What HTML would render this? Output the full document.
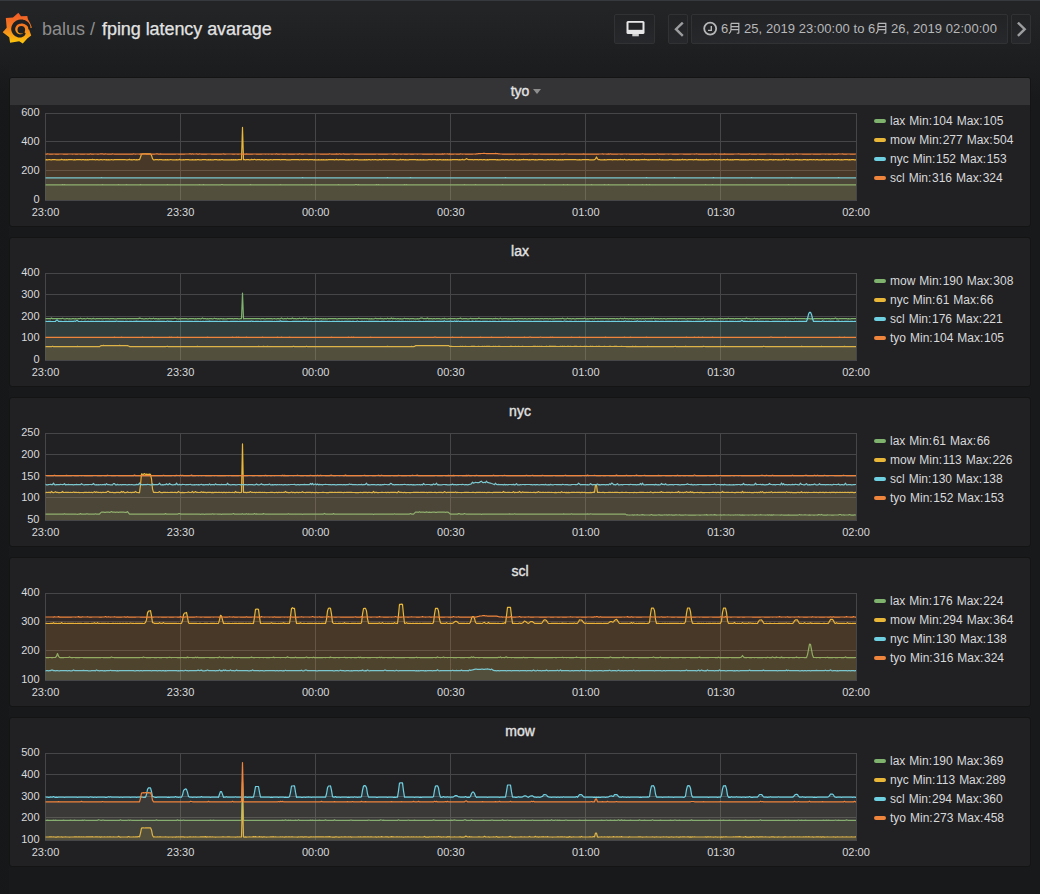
<!DOCTYPE html>
<html><head><meta charset="utf-8">
<style>
html,body{margin:0;padding:0;}
body{width:1040px;height:894px;overflow:hidden;position:relative;
 background:linear-gradient(180deg,#222426 10px,#18191b 100px);
 font-family:"Liberation Sans",sans-serif;color:#d8d9da;}
.topline{position:absolute;left:0;top:0;width:1040px;height:1px;background:#363a3e;}
.lstrip{position:absolute;left:0;top:60px;width:9px;height:834px;background:linear-gradient(180deg,rgba(22,23,25,0) 0,rgba(22,23,25,0.8) 60px);}
.title{position:absolute;left:42px;top:18px;font-size:18px;line-height:22px;white-space:nowrap;}
.title .crumb{color:#8e8e8e;}
.title .main{color:#e3e3e3;-webkit-text-stroke:0.25px #e3e3e3;}
.btn{position:absolute;top:14px;height:28px;border:1px solid #313234;border-radius:2px;
 background:linear-gradient(180deg,#222325,#27282b);box-sizing:content-box;}
.tr{color:#b7b8ba;font-size:13px;letter-spacing:0.06px;line-height:28px;white-space:nowrap;}
.panel{position:absolute;left:9px;width:1020px;height:148px;background:#212124;border:1px solid #141414;border-radius:3px;}
.ph{position:absolute;left:0;top:0;width:1020px;height:27px;text-align:center;border-radius:2px 2px 0 0;}
.ph.hov{background:#343436;}
.pt{display:inline-block;font-size:14px;color:#e3e3e3;-webkit-text-stroke:0.35px #e3e3e3;line-height:26px;}
.caret{position:absolute;left:523px;top:11px;width:0;height:0;border-left:4px solid transparent;border-right:4px solid transparent;border-top:5px solid #8e8e8e;}
.yl{position:absolute;left:0;width:39.5px;text-align:right;font-size:11px;line-height:13px;color:#d8d9da;}
.xl{position:absolute;width:40px;text-align:center;font-size:11px;line-height:13px;color:#d8d9da;}
.lg{position:absolute;left:874px;font-size:12px;line-height:13px;white-space:nowrap;color:#d8d9da;word-spacing:0px;}
.lg b{font-weight:normal;margin-left:4px;word-spacing:-2.7px;}
.lg i{display:inline-block;width:12px;height:4px;border-radius:2px;margin-right:4px;vertical-align:2px;}
.plots{position:absolute;left:0;top:0;}
</style></head><body>
<div class="topline"></div>
<div class="lstrip"></div>
<svg style="position:absolute;left:0;top:8px" width="36" height="40" viewBox="0 0 36 40">
 <defs><linearGradient id="lg1" x1="0" y1="0" x2="0" y2="1"><stop offset="0" stop-color="#F05A28"/><stop offset="0.45" stop-color="#F47A20"/><stop offset="1" stop-color="#FBCA0A"/></linearGradient></defs>
 <path fill="url(#lg1)" d="M18.34 4.80 L21.00 8.30 L27.30 8.00 L27.95 11.20 L29.70 14.30 L31.10 17.40 L32.00 19.90 L29.20 20.80 L29.40 22.30 L31.20 27.40 L27.30 30.40 L22.80 35.60 L19.20 33.30 L10.10 34.70 L9.20 29.30 L2.70 24.20 L6.70 19.70 L5.80 10.00 L13.00 9.60 Z"/>
 <path fill="#1f2022" d="M30.20 21.30 L30.32 20.64 L30.39 19.97 L30.41 19.28 L30.38 18.58 L30.30 17.88 L30.05 17.23 L29.76 16.59 L29.42 15.98 L29.04 15.38 L28.62 14.82 L28.16 14.29 L27.64 13.81 L27.08 13.38 L26.50 13.00 L25.89 12.65 L25.26 12.36 L24.62 12.10 L23.96 11.89 L23.29 11.73 L22.61 11.62 L21.92 11.56 L21.24 11.54 L20.56 11.56 L19.88 11.61 L19.21 11.70 L18.54 11.85 L17.89 12.04 L17.25 12.27 L16.63 12.55 L16.03 12.87 L15.46 13.23 L14.91 13.63 L14.39 14.07 L13.90 14.54 L13.45 15.05 L13.04 15.59 L12.66 16.15 L12.32 16.74 L12.03 17.35 L11.77 17.98 L11.57 18.62 L11.41 19.28 L11.29 19.95 L11.22 20.62 L11.20 21.30 L11.29 21.97 L11.43 22.63 L11.61 23.28 L11.83 23.90 L12.10 24.50 L12.40 25.08 L12.75 25.63 L13.13 26.16 L13.54 26.65 L13.98 27.11 L14.45 27.53 L14.94 27.91 L15.46 28.26 L16.00 28.57 L16.55 28.83 L17.12 29.06 L17.69 29.24 L18.27 29.38 L18.86 29.48 L19.45 29.54 L20.03 29.55 L20.61 29.53 L21.18 29.44 L21.74 29.28 L22.27 29.08 L22.78 28.85 L23.27 28.59 L23.72 28.29 L24.15 27.97 L24.55 27.62 L24.86 27.17 L25.12 26.71 L25.34 26.23 L25.52 25.76 L25.65 25.29 L23.50 23.49 L23.48 23.79 L23.42 24.09 L23.33 24.40 L23.20 24.72 L23.05 25.02 L22.83 25.25 L22.58 25.46 L22.32 25.66 L22.03 25.83 L21.73 25.99 L21.41 26.13 L21.07 26.25 L20.72 26.31 L20.37 26.32 L20.02 26.30 L19.66 26.26 L19.31 26.19 L18.96 26.09 L18.62 25.98 L18.28 25.83 L17.96 25.66 L17.64 25.47 L17.34 25.26 L17.05 25.02 L16.77 24.76 L16.52 24.49 L16.28 24.19 L16.06 23.87 L15.86 23.54 L15.69 23.20 L15.54 22.84 L15.42 22.47 L15.32 22.08 L15.24 21.70 L15.20 21.30 L15.22 20.90 L15.26 20.51 L15.33 20.12 L15.43 19.73 L15.55 19.35 L15.70 18.99 L15.88 18.63 L16.08 18.29 L16.30 17.96 L16.55 17.65 L16.82 17.36 L17.10 17.08 L17.41 16.83 L17.73 16.60 L18.07 16.39 L18.42 16.21 L18.78 16.05 L19.15 15.92 L19.53 15.81 L19.92 15.73 L20.31 15.68 L20.70 15.65 L21.10 15.62 L21.50 15.57 L21.91 15.55 L22.33 15.56 L22.75 15.60 L23.17 15.68 L23.59 15.78 L24.01 15.92 L24.42 16.08 L24.82 16.28 L25.21 16.51 L25.60 16.76 L26.02 17.01 L26.42 17.29 L26.81 17.61 L27.18 17.96 L27.53 18.35 L27.85 18.77 L28.03 19.25 L28.18 19.75 L28.29 20.26 L28.36 20.78 L28.40 21.30 Z"/>
 <path fill="#1f2022" d="M28.70 21.57 L34.89 21.79 L34.76 19.35 L28.62 20.21 Z"/>
 <circle cx="21.3" cy="21.8" r="3.8" fill="#1f2022"/>
</svg>
<div class="title"><span class="crumb">balus / </span><span class="main" style="margin-left:2px;letter-spacing:-0.07px">fping latency avarage</span></div>

<div class="btn" style="left:614px;width:39px;">
 <svg style="position:absolute;left:11px;top:6px" width="19" height="16" viewBox="0 0 19 16">
  <rect x="0.5" y="0" width="18" height="13" rx="1.5" fill="#e6e6e6"/>
  <rect x="2.5" y="1.8" width="14" height="7" fill="#232426"/>
  <rect x="6.3" y="13" width="6.5" height="2.3" fill="#d0d0d0"/>
 </svg>
</div>
<div class="btn" style="left:668px;width:18px;">
 <svg style="position:absolute;left:5px;top:7px" width="10" height="15" viewBox="0 0 10 15"><path d="M8.8 0.6 L2 7.2 L8.8 13.8" stroke="#9c9d9f" stroke-width="2.4" fill="none"/></svg>
</div>
<div class="btn tr" style="left:691px;width:315px;">
 <svg style="position:absolute;left:11px;top:6px" width="15" height="15" viewBox="0 0 15 15"><circle cx="7.2" cy="7.6" r="6" stroke="#b7b8ba" stroke-width="1.8" fill="none"/><path d="M8.3 5 V9.4 H5" stroke="#b7b8ba" stroke-width="1.4" fill="none"/></svg>
 <span style="position:absolute;left:29px;top:0;">6<svg class="tsu" width="12" height="12" viewBox="0 0 12 12" style="vertical-align:-1px"><path d="M3 1.4 V7.8 C3 9.8 2.3 10.8 0.8 11.6 M3 1.4 H10.8 V10.7 C10.8 11.2 10.4 11.4 8.8 11.2 M3 4.7 H10.8 M3 7.7 H10.8" stroke="#b7b8ba" stroke-width="1.2" fill="none"/></svg> 25, 2019 23:00:00 to 6<svg class="tsu" width="12" height="12" viewBox="0 0 12 12" style="vertical-align:-1px"><path d="M3 1.4 V7.8 C3 9.8 2.3 10.8 0.8 11.6 M3 1.4 H10.8 V10.7 C10.8 11.2 10.4 11.4 8.8 11.2 M3 4.7 H10.8 M3 7.7 H10.8" stroke="#b7b8ba" stroke-width="1.2" fill="none"/></svg> 26, 2019 02:00:00</span>
</div>
<div class="btn" style="left:1011px;width:18px;">
 <svg style="position:absolute;left:5px;top:7px" width="10" height="15" viewBox="0 0 10 15"><path d="M0.9 0.6 L7.7 7.2 L0.9 13.8" stroke="#9c9d9f" stroke-width="2.4" fill="none"/></svg>
</div>

<div class="panel" style="top:77px">
<div class="ph hov"><span class="pt">tyo</span><span class="caret"></span></div>
</div>
<div class="yl" style="top:193.0px">0</div>
<div class="yl" style="top:164.0px">200</div>
<div class="yl" style="top:135.0px">400</div>
<div class="yl" style="top:106.0px">600</div>
<div class="xl" style="left:25.5px;top:206px">23:00</div>
<div class="xl" style="left:160.6px;top:206px">23:30</div>
<div class="xl" style="left:295.7px;top:206px">00:00</div>
<div class="xl" style="left:430.8px;top:206px">00:30</div>
<div class="xl" style="left:565.8px;top:206px">01:00</div>
<div class="xl" style="left:700.9px;top:206px">01:30</div>
<div class="xl" style="left:836.0px;top:206px">02:00</div>
<div class="lg" style="top:115px"><i style="background:#7EB26D"></i>lax<b>Min: 104</b><b>Max: 105</b></div>
<div class="lg" style="top:134px"><i style="background:#EAB839"></i>mow<b>Min: 277</b><b>Max: 504</b></div>
<div class="lg" style="top:153px"><i style="background:#6ED0E0"></i>nyc<b>Min: 152</b><b>Max: 153</b></div>
<div class="lg" style="top:172px"><i style="background:#EF843C"></i>scl<b>Min: 316</b><b>Max: 324</b></div>
<div class="panel" style="top:237px">
<div class="ph"><span class="pt">lax</span></div>
</div>
<div class="yl" style="top:353.0px">0</div>
<div class="yl" style="top:331.2px">100</div>
<div class="yl" style="top:309.5px">200</div>
<div class="yl" style="top:287.8px">300</div>
<div class="yl" style="top:266.0px">400</div>
<div class="xl" style="left:25.5px;top:366px">23:00</div>
<div class="xl" style="left:160.6px;top:366px">23:30</div>
<div class="xl" style="left:295.7px;top:366px">00:00</div>
<div class="xl" style="left:430.8px;top:366px">00:30</div>
<div class="xl" style="left:565.8px;top:366px">01:00</div>
<div class="xl" style="left:700.9px;top:366px">01:30</div>
<div class="xl" style="left:836.0px;top:366px">02:00</div>
<div class="lg" style="top:275px"><i style="background:#7EB26D"></i>mow<b>Min: 190</b><b>Max: 308</b></div>
<div class="lg" style="top:294px"><i style="background:#EAB839"></i>nyc<b>Min: 61</b><b>Max: 66</b></div>
<div class="lg" style="top:313px"><i style="background:#6ED0E0"></i>scl<b>Min: 176</b><b>Max: 221</b></div>
<div class="lg" style="top:332px"><i style="background:#EF843C"></i>tyo<b>Min: 104</b><b>Max: 105</b></div>
<div class="panel" style="top:397px">
<div class="ph"><span class="pt">nyc</span></div>
</div>
<div class="yl" style="top:513.0px">50</div>
<div class="yl" style="top:491.2px">100</div>
<div class="yl" style="top:469.5px">150</div>
<div class="yl" style="top:447.8px">200</div>
<div class="yl" style="top:426.0px">250</div>
<div class="xl" style="left:25.5px;top:526px">23:00</div>
<div class="xl" style="left:160.6px;top:526px">23:30</div>
<div class="xl" style="left:295.7px;top:526px">00:00</div>
<div class="xl" style="left:430.8px;top:526px">00:30</div>
<div class="xl" style="left:565.8px;top:526px">01:00</div>
<div class="xl" style="left:700.9px;top:526px">01:30</div>
<div class="xl" style="left:836.0px;top:526px">02:00</div>
<div class="lg" style="top:435px"><i style="background:#7EB26D"></i>lax<b>Min: 61</b><b>Max: 66</b></div>
<div class="lg" style="top:454px"><i style="background:#EAB839"></i>mow<b>Min: 113</b><b>Max: 226</b></div>
<div class="lg" style="top:473px"><i style="background:#6ED0E0"></i>scl<b>Min: 130</b><b>Max: 138</b></div>
<div class="lg" style="top:492px"><i style="background:#EF843C"></i>tyo<b>Min: 152</b><b>Max: 153</b></div>
<div class="panel" style="top:557px">
<div class="ph"><span class="pt">scl</span></div>
</div>
<div class="yl" style="top:673.0px">100</div>
<div class="yl" style="top:644.0px">200</div>
<div class="yl" style="top:615.0px">300</div>
<div class="yl" style="top:586.0px">400</div>
<div class="xl" style="left:25.5px;top:686px">23:00</div>
<div class="xl" style="left:160.6px;top:686px">23:30</div>
<div class="xl" style="left:295.7px;top:686px">00:00</div>
<div class="xl" style="left:430.8px;top:686px">00:30</div>
<div class="xl" style="left:565.8px;top:686px">01:00</div>
<div class="xl" style="left:700.9px;top:686px">01:30</div>
<div class="xl" style="left:836.0px;top:686px">02:00</div>
<div class="lg" style="top:595px"><i style="background:#7EB26D"></i>lax<b>Min: 176</b><b>Max: 224</b></div>
<div class="lg" style="top:614px"><i style="background:#EAB839"></i>mow<b>Min: 294</b><b>Max: 364</b></div>
<div class="lg" style="top:633px"><i style="background:#6ED0E0"></i>nyc<b>Min: 130</b><b>Max: 138</b></div>
<div class="lg" style="top:652px"><i style="background:#EF843C"></i>tyo<b>Min: 316</b><b>Max: 324</b></div>
<div class="panel" style="top:717px">
<div class="ph"><span class="pt">mow</span></div>
</div>
<div class="yl" style="top:833.0px">100</div>
<div class="yl" style="top:811.2px">200</div>
<div class="yl" style="top:789.5px">300</div>
<div class="yl" style="top:767.8px">400</div>
<div class="yl" style="top:746.0px">500</div>
<div class="xl" style="left:25.5px;top:846px">23:00</div>
<div class="xl" style="left:160.6px;top:846px">23:30</div>
<div class="xl" style="left:295.7px;top:846px">00:00</div>
<div class="xl" style="left:430.8px;top:846px">00:30</div>
<div class="xl" style="left:565.8px;top:846px">01:00</div>
<div class="xl" style="left:700.9px;top:846px">01:30</div>
<div class="xl" style="left:836.0px;top:846px">02:00</div>
<div class="lg" style="top:755px"><i style="background:#7EB26D"></i>lax<b>Min: 190</b><b>Max: 369</b></div>
<div class="lg" style="top:774px"><i style="background:#EAB839"></i>nyc<b>Min: 113</b><b>Max: 289</b></div>
<div class="lg" style="top:793px"><i style="background:#6ED0E0"></i>scl<b>Min: 294</b><b>Max: 360</b></div>
<div class="lg" style="top:812px"><i style="background:#EF843C"></i>tyo<b>Min: 273</b><b>Max: 458</b></div>
<svg class="plots" width="1040" height="894" viewBox="0 0 1040 894"><defs><clipPath id="c0"><rect x="45.5" y="98.0" width="810.5" height="102.0"/></clipPath><clipPath id="c1"><rect x="45.5" y="258.0" width="810.5" height="102.0"/></clipPath><clipPath id="c2"><rect x="45.5" y="418.0" width="810.5" height="102.0"/></clipPath><clipPath id="c3"><rect x="45.5" y="578.0" width="810.5" height="102.0"/></clipPath><clipPath id="c4"><rect x="45.5" y="738.0" width="810.5" height="102.0"/></clipPath></defs><path d="M45.0 200.5H857.0 M45.0 170.5H857.0 M45.0 141.5H857.0 M45.0 113.5H857.0 M45.5 113.0V201.0 M180.5 113.0V201.0 M315.5 113.0V201.0 M450.5 113.0V201.0 M585.5 113.0V201.0 M720.5 113.0V201.0 M856.5 113.0V201.0" stroke="#464648" stroke-width="1" fill="none"/>
<path d="M41.5 202.9V184.8H45.5l1 .1 1 0 1 -.1 1 .1 1 -.1 1 .1 1 0 1 -.1 1 0 1 .1 1 -.1 1 .1 1 0 1 -.1 1 .1 1 0 1 -.2 1 .2 1 -.2 1 .1 1 .1 1 0 1 0 1 -.1 1 .1 1 0 1 0 1 0 1 -.1 1 0 1 .1 1 0 1 0 1 0 1 0 1 0 1 -.1 1 0 1 0 1 .1 1 0 1 -.1 1 0 1 0 1 .1 1 -.1 1 0 1 .1 1 0 1 0 1 0 1 -.1 1 0 1 .1 1 0 1 -.1 1 -.1 1 .2 1 0 1 -.1 1 0 1 .1 1 -.1 1 .1 1 0 1 0 1 0 1 -.1 1 0 1 .1 1 -.1 1 .1 1 -.2 1 .1 1 .1 1 0 1 0 1 0 1 0 1 -.1 1 -.1 1 .1 1 .1 1 0 1 0 1 0 1 0 1 0 1 0 1 0 1 0 1 -.1 1 .1 1 0 1 -.2 1 .2 1 0 1 0 1 -.1 1 .1 1 -.1 1 0 1 0 1 .1 1 -.1 1 .1 1 0 1 0 1 0 1 0 1 -.1 1 0 1 0 1 .1 1 0 1 -.1 1 .1 1 0 1 -.1 1 .1 1 -.1 1 -.1 1 .2 1 0 1 0 1 0 1 -.1 1 .1 1 0 1 -.1 1 0 1 .1 1 0 1 -.1 1 .1 1 0 1 0 1 -.1 1 0 1 .1 1 0 1 0 1 -.1 1 .1 1 -.1 1 .1 1 -.1 1 .1 1 0 1 0 1 0 1 -.1 1 0 1 -.1 1 .2 1 0 1 0 1 -.2 1 .2 1 0 1 0 1 -.1 1 .1 1 0 1 0 1 0 1 0 1 0 1 0 1 -.1 1 0 1 .1 1 -.1 1 .1 1 0 1 -.2 1 0 1 .2 1 0 1 -.1 1 0 1 .1 1 -.1 1 0 1 0 1 .1 1 -.1 1 0 1 .1 1 -.1 1 .1 1 0 1 0 1 -.1 1 .1 1 0 1 0 1 -.1 1 .1 1 -.1 1 .1 1 -.1 1 .1 1 0 1 -.2 1 .2 1 0 1 0 1 0 1 0 1 0 1 0 1 0 1 0 1 -.1 1 0 1 0 1 0 1 0 1 0 1 0 1 .1 1 0 1 -.1 1 .1 1 0 1 -.1 1 .1 1 0 1 0 1 -.1 1 .1 1 -.1 1 .1 1 -.2 1 .1 1 .1 1 -.1 1 .1 1 -.1 1 0 1 .1 1 -.1 1 .1 1 0 1 -.1 1 .1 1 -.1 1 0 1 .1 1 -.1 1 .1 1 -.1 1 .1 1 -.1 1 0 1 .1 1 0 1 0 1 0 1 0 1 0 1 0 1 0 1 0 1 -.2 1 .2 1 0 1 0 1 -.1 1 .1 1 0 1 0 1 -.1 1 .1 1 -.1 1 .1 1 0 1 0 1 -.1 1 0 1 .1 1 0 1 0 1 0 1 0 1 0 1 0 1 0 1 0 1 0 1 -.1 1 -.1 1 .2 1 0 1 -.1 1 .1 1 0 1 0 1 0 1 0 1 -.1 1 .1 1 0 1 0 1 0 1 0 1 0 1 0 1 -.2 1 0 1 .2 1 -.2 1 .2 1 0 1 -.1 1 .1 1 -.1 1 0 1 0 1 .1 1 0 1 0 1 0 1 0 1 0 1 0 1 0 1 0 1 0 1 -.2 1 .2 1 -.2 1 .2 1 0 1 0 1 -.1 1 .1 1 0 1 -.1 1 0 1 .1 1 0 1 0 1 0 1 0 1 0 1 0 1 0 1 0 1 -.1 1 .1 1 -.1 1 .1 1 0 1 0 1 0 1 0 1 -.2 1 .2 1 -.2 1 .1 1 .1 1 0 1 0 1 0 1 0 1 -.1 1 .1 1 -.1 1 .1 1 0 1 0 1 0 1 0 1 0 1 0 1 0 1 0 1 -.1 1 0 1 0 1 .1 1 -.1 1 .1 1 0 1 -.1 1 .1 1 0 1 0 1 -.1 1 .1 1 0 1 0 1 0 1 -.1 1 0 1 .1 1 -.1 1 0 1 .1 1 -.1 1 0 1 .1 1 0 1 0 1 0 1 0 1 -.1 1 .1 1 -.1 1 0 1 0 1 .1 1 -.1 1 .1 1 0 1 0 1 -.2 1 .1 1 0 1 0 1 0 1 .1 1 0 1 -.1 1 .1 1 0 1 -.1 1 -.1 1 .2 1 0 1 -.1 1 0 1 .1 1 -.1 1 .1 1 0 1 0 1 0 1 0 1 0 1 0 1 -.1 1 .1 1 0 1 0 1 0 1 -.1 1 .1 1 0 1 -.1 1 0 1 .1 1 0 1 0 1 -.2 1 .2 1 0 1 0 1 0 1 0 1 -.1 1 .1 1 -.1 1 .1 1 0 1 -.1 1 .1 1 0 1 0 1 0 1 0 1 0 1 0 1 0 1 -.1 1 .1 1 -.1 1 0 1 .1 1 -.1 1 .1 1 0 1 0 1 0 1 0 1 0 1 0 1 0 1 -.1 1 0 1 0 1 .1 1 -.1 1 .1 1 0 1 0 1 -.2 1 .1 1 .1 1 0 1 0 1 0 1 -.1 1 .1 1 0 1 -.1 1 0 1 0 1 .1 1 0 1 -.1 1 0 1 .1 1 0 1 0 1 -.2 1 .1 1 .1 1 0 1 -.2 1 .1 1 .1 1 0 1 -.1 1 .1 1 -.1 1 .1 1 0 1 -.1 1 .1 1 0 1 0 1 0 1 -.1 1 0 1 .1 1 0 1 0 1 0 1 0 1 -.1 1 0 1 .1 1 -.2 1 .1 1 .1 1 0 1 0 1 0 1 0 1 -.1 1 0 1 .1 1 0 1 0 1 -.1 1 -.1 1 .2 1 0 1 0 1 -.2 1 .2 1 -.1 1 .1 1 -.1 1 .1 1 -.1 1 .1 1 0 1 0 1 0 1 0 1 0 1 0 1 0 1 0 1 -.1 1 .1 1 0 1 0 1 -.2 1 .2 1 0 1 0 1 0 1 -.1 1 .1 1 0 1 0 1 -.1 1 .1 1 0 1 -.1 1 0 1 -.1 1 .2 1 -.1 1 .1 1 -.2 1 .2 1 -.1 1 -.1 1 .1 1 .1 1 0 1 0 1 0 1 0 1 0 1 0 1 0 1 -.1 1 0 1 .1 1 0 1 0 1 -.1 1 .1 1 0 1 0 1 -.1 1 0 1 .1 1 0 1 0 1 0 1 -.1 1 .1 1 0 1 0 1 0 1 0 1 0 1 0 1 -.1 1 .1 1 0 1 0 1 0 1 -.1 1 .1 1 0 1 0 1 0 1 -.1 1 .1 1 -.1 1 .1 1 -.1 1 .1 1 0 1 -.1 1 .1 1 -.1 1 0 1 0 1 0 1 -.1 1 .2 1 0 1 0 1 0 1 0 1 0 1 -.2 1 .1 1 .1 1 0 1 0 1 -.1 1 0 1 0 1 .1 1 -.1 1 .1 1 0 1 -.1 1 .1 1 0 1 -.1 1 .1 1 0 1 0 1 -.1 1 .1 1 0 1 0 1 -.1 1 0 1 0 1 .1 1 0 1 -.1 1 0 1 .1 1 0 1 0 1 0 1 -.1 1 0 1 0 1 0 1 .1 1 -.1 1 .1 1 0 1 0 1 -.1 1 0 1 .1 1 0 1 0 1 0 1 0 1 0 1 0 1 0 1 -.1 1 .1 1 0 1 0 1 -.1 1 .1 1 0 1 -.1 1 .1 1 0 1 0 1 0 1 0 1 0 1 -.1 1 .1 1 0 1 0 1 0 1 0 1 0 1 0 1 0 1 -.2 1 .1 1 .1 1 0 1 0 1 -.1 1 .1 1 0 1 0 1 0 1 -.1 1 .1 1 0 1 0 1 0 1 0 1 0 1 0 1 0 1 0 1 0 1 0 1 0 1 0 1 0 1 0 1 -.1 1 .1 1 0 1 0 1 0 1 -.1 1 .1 1 0 1 -.1 1 .1 1 -.1 1 .1 1 0 1 0 1 -.1 1 0 1 .1 1 0 1 0 1 0 1 0 1 0 1 0 1 -.1 1 .1 1 0 1 0 1 0 1 -.1 1 .1 1 -.1 1 .1 1 0 1 0 1 0 1 -.1 1 .1 1 -.1 1 .1 1 0 1 -.1 1 0H859.5 V202.9 Z" fill="#7EB26D" fill-opacity="0.1" stroke="#7EB26D" stroke-width="1.2" stroke-linejoin="round" clip-path="url(#c0)"/>
<path d="M41.5 202.9V159.8H45.5l1 -.1 1 .1 1 -.1 1 -.2 1 .3 1 0 1 -.1 1 0 1 -.2 1 .2 1 .1 1 0 1 0 1 0 1 0 1 -.4 1 .3 1 .1 1 -.1 1 .1 1 -.1 1 .1 1 -.1 1 0 1 0 1 -.2 1 .2 1 .1 1 -.1 1 .1 1 -.1 1 0 1 -.1 1 .1 1 0 1 .1 1 -.1 1 0 1 .1 1 -.1 1 .1 1 -.1 1 .1 1 -.1 1 0 1 0 1 -.3 1 .3 1 0 1 .1 1 -.1 1 0 1 .1 1 0 1 -.1 1 0 1 .1 1 -.1 1 -.2 1 .3 1 -.1 1 .1 1 -.1 1 .1 1 0 1 -.3 1 .3 1 0 1 -.1 1 0 1 -.1 1 .1 1 0 1 0 1 0 1 0 1 0 1 0 1 -.2 1 .2 1 .1 1 0 1 -.1 1 -.3 1 .4 1 -.1 1 .1 1 -.1 1 0 1 .1 1 -.1 1 .1 1 -.1 1 0 1 -2.5 1 -3.1 1 -.2 1 -.1 1 .1 1 -.1 1 .1 1 -.1 1 0 1 0 1 .1 1 1.5 1 3.2 1 1.2 1 0 1 -.1 1 0 1 0 1 .1 1 -.1 1 0 1 0 1 .1 1 0 1 0 1 -.1 1 .1 1 -.1 1 .1 1 0 1 -.3 1 .2 1 .1 1 0 1 0 1 0 1 -.1 1 .1 1 0 1 -.4 1 .4 1 0 1 0 1 -.1 1 .1 1 -.1 1 0 1 0 1 0 1 .1 1 0 1 0 1 -.1 1 .1 1 0 1 -.1 1 .1 1 -.1 1 0 1 .1 1 0 1 0 1 -.1 1 0 1 0 1 0 1 .1 1 0 1 -.1 1 .1 1 -.1 1 .1 1 0 1 0 1 -.1 1 0 1 0 1 .1 1 0 1 -.1 1 .1 1 -.1 1 0 1 .1 1 0 1 0 1 0 1 0 1 0 1 0 1 0 1 -.1 1 .1 1 -.1 1 .1 1 -.1 1 .1 1 0 1 -.1 1 0 1 -.1 1 .1 1 -32.3 1 32.3 1 0 1 .1 1 -.1 1 0 1 0 1 .1 1 0 1 -.4 1 .3 1 0 1 -.4 1 .4 1 .1 1 -.1 1 0 1 0 1 .1 1 -.1 1 0 1 .1 1 0 1 -.1 1 0 1 .1 1 0 1 0 1 -.3 1 .2 1 .1 1 -.1 1 0 1 0 1 0 1 0 1 0 1 0 1 .1 1 -.1 1 0 1 0 1 0 1 0 1 .1 1 0 1 0 1 0 1 0 1 -.1 1 0 1 -.1 1 .1 1 0 1 0 1 0 1 0 1 .1 1 -.1 1 -.2 1 .3 1 -.1 1 0 1 0 1 0 1 0 1 .1 1 -.1 1 0 1 0 1 0 1 .1 1 -.1 1 .1 1 0 1 0 1 -.1 1 .1 1 0 1 -.1 1 .1 1 -.1 1 .1 1 0 1 -.1 1 .1 1 -.1 1 0 1 0 1 0 1 0 1 0 1 .1 1 -.1 1 -.3 1 .3 1 .1 1 -.1 1 0 1 0 1 0 1 0 1 0 1 .1 1 0 1 0 1 -.1 1 .1 1 0 1 -.3 1 .2 1 .1 1 -.1 1 0 1 0 1 0 1 .1 1 0 1 0 1 0 1 0 1 0 1 -.1 1 .1 1 -.1 1 .1 1 -.1 1 0 1 .1 1 0 1 -.3 1 .3 1 -.1 1 -.2 1 .3 1 0 1 0 1 -.1 1 0 1 .1 1 -.1 1 -.3 1 .3 1 0 1 -.2 1 .3 1 -.1 1 0 1 0 1 0 1 0 1 0 1 -.2 1 .2 1 .1 1 0 1 0 1 0 1 -.4 1 .4 1 -.2 1 .1 1 .1 1 -.1 1 .1 1 0 1 0 1 -.1 1 0 1 0 1 0 1 0 1 0 1 0 1 .1 1 -.1 1 .1 1 0 1 -.1 1 .1 1 0 1 -.1 1 .1 1 0 1 0 1 0 1 -.1 1 0 1 0 1 .1 1 -.1 1 0 1 0 1 0 1 .1 1 -.1 1 .1 1 -.1 1 0 1 .1 1 0 1 -.1 1 .1 1 -.1 1 .1 1 -.1 1 .1 1 0 1 -.1 1 .1 1 -.1 1 0 1 0 1 0 1 0 1 0 1 .1 1 -.1 1 .1 1 -.1 1 -.3 1 .4 1 0 1 -.4 1 -.8 1 .7 1 .4 1 0 1 0 1 0 1 0 1 .1 1 -.1 1 0 1 0 1 0 1 .1 1 -.1 1 0 1 0 1 .1 1 -.1 1 0 1 .1 1 0 1 -.2 1 .2 1 -.1 1 0 1 0 1 0 1 0 1 0 1 0 1 .1 1 -.1 1 .1 1 0 1 0 1 -.1 1 0 1 0 1 .1 1 -.1 1 0 1 0 1 .1 1 0 1 -.1 1 0 1 .1 1 0 1 -.1 1 0 1 .1 1 0 1 0 1 -.1 1 .1 1 -.1 1 0 1 -.3 1 .3 1 0 1 0 1 0 1 .1 1 -.1 1 .1 1 -.1 1 0 1 0 1 .1 1 -.1 1 .1 1 0 1 -.1 1 0 1 -.2 1 .2 1 0 1 .1 1 0 1 0 1 0 1 -.1 1 0 1 .1 1 -.1 1 -.1 1 .1 1 .1 1 -.1 1 0 1 .1 1 0 1 -.1 1 .1 1 -.1 1 .1 1 -.2 1 .2 1 -.1 1 0 1 0 1 0 1 0 1 0 1 0 1 0 1 0 1 0 1 0 1 -.2 1 .3 1 0 1 0 1 -.1 1 .1 1 0 1 -.1 1 0 1 -.2 1 .2 1 0 1 0 1 0 1 .1 1 0 1 0 1 0 1 0 1 -.1 1 -.8 1 -1.9 1 1.9 1 .8 1 0 1 .1 1 0 1 0 1 0 1 -.2 1 .2 1 0 1 -.1 1 0 1 0 1 0 1 0 1 .1 1 -.1 1 0 1 0 1 -.2 1 .3 1 -.1 1 0 1 -.3 1 .3 1 0 1 .1 1 -.5 1 .5 1 0 1 0 1 -.1 1 0 1 .1 1 -.1 1 .1 1 -.1 1 0 1 .1 1 -.2 1 .2 1 -.1 1 .1 1 -.1 1 -.2 1 .2 1 0 1 -.3 1 .3 1 0 1 .1 1 -.1 1 .1 1 -.1 1 0 1 0 1 0 1 0 1 0 1 0 1 0 1 .1 1 -.4 1 .4 1 0 1 -.1 1 .1 1 0 1 0 1 0 1 0 1 0 1 -.1 1 0 1 0 1 .1 1 0 1 0 1 0 1 0 1 -.1 1 .1 1 -.1 1 .1 1 -.1 1 -.3 1 .4 1 -.1 1 0 1 .1 1 0 1 -.1 1 0 1 0 1 0 1 0 1 .1 1 -.1 1 0 1 -.3 1 .4 1 -.1 1 .1 1 -.1 1 .1 1 0 1 -.1 1 .1 1 0 1 -.2 1 .2 1 0 1 -.1 1 0 1 0 1 0 1 0 1 .1 1 -.1 1 0 1 .1 1 -.1 1 0 1 .1 1 0 1 0 1 -.1 1 0 1 .1 1 -.1 1 -.3 1 .4 1 0 1 -.1 1 .1 1 -.1 1 .1 1 -.1 1 0 1 0 1 0 1 0 1 .1 1 0 1 -.1 1 .1 1 -.1 1 .1 1 -.1 1 .1 1 0 1 0 1 -.1 1 0 1 0 1 .1 1 -.3 1 .3 1 -.1 1 .1 1 -.1 1 0 1 -.1 1 .1 1 .1 1 -.1 1 0 1 .1 1 0 1 0 1 0 1 0 1 -.1 1 0 1 0 1 .1 1 -.1 1 .1 1 -.3 1 .2 1 .1 1 -.1 1 .1 1 0 1 0 1 0 1 -.4 1 .4 1 -.1 1 -.4 1 .5 1 -.4 1 .4 1 0 1 0 1 0 1 0 1 0 1 -.1 1 0 1 -.1 1 .2 1 -.1 1 .1 1 0 1 0 1 -.1 1 0 1 0 1 .1 1 -.1 1 .1 1 -.1 1 0 1 0 1 .1 1 -.3 1 .2 1 .1 1 -.1 1 0 1 .1 1 0 1 0 1 -.1 1 .1 1 -.1 1 0 1 .1 1 -.1 1 .1 1 -.1 1 .1 1 -.1 1 0 1 0 1 .1 1 -.1 1 0 1 .1 1 -.1 1 0 1 .1 1 0 1 -.1 1 .1 1 0 1 -.3 1 .2 1 0 1 0 1 .1 1 -.2 1 .2 1 -.1 1 0 1 0 1 .1 1 0H859.5 V202.9 Z" fill="#EAB839" fill-opacity="0.1" stroke="#EAB839" stroke-width="1.2" stroke-linejoin="round" clip-path="url(#c0)"/>
<path d="M41.5 202.9V177.9H45.5l1 0 1 0 1 0 1 0 1 0 1 0 1 0 1 0 1 0 1 -.1 1 .1 1 0 1 0 1 0 1 0 1 0 1 0 1 0 1 0 1 0 1 0 1 0 1 0 1 0 1 0 1 0 1 0 1 0 1 0 1 0 1 0 1 0 1 0 1 0 1 0 1 0 1 0 1 0 1 0 1 0 1 0 1 0 1 0 1 0 1 0 1 0 1 0 1 0 1 -.1 1 .1 1 0 1 0 1 0 1 0 1 0 1 -.2 1 .1 1 .1 1 0 1 0 1 0 1 0 1 0 1 0 1 0 1 0 1 0 1 0 1 0 1 0 1 0 1 0 1 0 1 0 1 0 1 0 1 0 1 0 1 0 1 0 1 0 1 -.1 1 .1 1 0 1 0 1 0 1 0 1 0 1 0 1 0 1 0 1 -.1 1 .1 1 0 1 0 1 0 1 0 1 -.1 1 .1 1 0 1 0 1 0 1 0 1 0 1 0 1 0 1 0 1 0 1 0 1 0 1 0 1 0 1 -.1 1 .1 1 0 1 0 1 0 1 0 1 0 1 0 1 0 1 0 1 0 1 0 1 0 1 0 1 -.1 1 .1 1 0 1 0 1 0 1 0 1 0 1 0 1 0 1 0 1 0 1 0 1 0 1 0 1 -.1 1 .1 1 0 1 0 1 0 1 0 1 0 1 0 1 0 1 0 1 0 1 -.1 1 .1 1 0 1 0 1 0 1 0 1 0 1 0 1 0 1 0 1 0 1 0 1 0 1 0 1 -.1 1 .1 1 0 1 0 1 0 1 0 1 0 1 0 1 0 1 0 1 0 1 0 1 -.1 1 .1 1 0 1 0 1 0 1 0 1 0 1 0 1 0 1 0 1 0 1 0 1 0 1 0 1 0 1 0 1 0 1 0 1 0 1 0 1 0 1 0 1 0 1 0 1 0 1 0 1 0 1 0 1 0 1 0 1 0 1 0 1 0 1 0 1 0 1 0 1 0 1 0 1 0 1 0 1 0 1 0 1 0 1 -.1 1 .1 1 0 1 0 1 0 1 0 1 0 1 0 1 0 1 0 1 0 1 0 1 0 1 0 1 -.1 1 .1 1 0 1 0 1 0 1 0 1 0 1 0 1 0 1 0 1 0 1 0 1 0 1 -.1 1 .1 1 0 1 0 1 0 1 0 1 0 1 0 1 0 1 -.2 1 .2 1 0 1 -.1 1 .1 1 0 1 0 1 0 1 0 1 -.1 1 .1 1 0 1 0 1 0 1 0 1 0 1 0 1 0 1 0 1 0 1 0 1 0 1 0 1 0 1 0 1 0 1 0 1 0 1 0 1 0 1 0 1 -.1 1 .1 1 0 1 0 1 0 1 0 1 0 1 0 1 0 1 0 1 0 1 0 1 0 1 0 1 0 1 0 1 0 1 0 1 0 1 0 1 0 1 0 1 0 1 0 1 0 1 0 1 0 1 0 1 0 1 -.1 1 .1 1 0 1 0 1 0 1 -.1 1 .1 1 0 1 0 1 0 1 0 1 0 1 0 1 0 1 0 1 0 1 0 1 -.1 1 .1 1 0 1 0 1 0 1 0 1 0 1 0 1 -.2 1 .2 1 0 1 0 1 0 1 0 1 0 1 0 1 0 1 0 1 0 1 0 1 0 1 0 1 0 1 0 1 0 1 0 1 0 1 0 1 0 1 0 1 0 1 -.2 1 .2 1 0 1 0 1 0 1 0 1 0 1 0 1 0 1 -.1 1 .1 1 0 1 0 1 0 1 -.1 1 .1 1 -.1 1 .1 1 0 1 0 1 0 1 0 1 0 1 0 1 0 1 0 1 -.1 1 .1 1 0 1 0 1 0 1 0 1 0 1 -.1 1 .1 1 0 1 0 1 0 1 0 1 0 1 0 1 0 1 0 1 0 1 0 1 0 1 0 1 0 1 0 1 0 1 0 1 0 1 0 1 0 1 0 1 0 1 0 1 0 1 0 1 0 1 0 1 0 1 0 1 0 1 0 1 0 1 0 1 0 1 -.1 1 0 1 .1 1 0 1 0 1 0 1 0 1 0 1 0 1 0 1 0 1 0 1 0 1 0 1 0 1 0 1 0 1 0 1 0 1 0 1 0 1 0 1 0 1 0 1 0 1 0 1 0 1 -.2 1 .2 1 0 1 0 1 0 1 0 1 0 1 0 1 0 1 0 1 0 1 0 1 0 1 0 1 0 1 0 1 0 1 0 1 0 1 0 1 0 1 0 1 0 1 0 1 0 1 0 1 0 1 -.1 1 .1 1 0 1 0 1 0 1 -.1 1 .1 1 0 1 0 1 0 1 0 1 0 1 0 1 0 1 0 1 0 1 0 1 0 1 0 1 0 1 0 1 0 1 0 1 0 1 0 1 0 1 0 1 0 1 0 1 0 1 0 1 0 1 0 1 0 1 0 1 0 1 0 1 0 1 0 1 0 1 0 1 -.1 1 .1 1 -.1 1 .1 1 0 1 0 1 0 1 0 1 0 1 0 1 0 1 0 1 0 1 0 1 -.1 1 .1 1 0 1 0 1 0 1 0 1 0 1 0 1 0 1 0 1 0 1 0 1 0 1 0 1 0 1 0 1 0 1 0 1 0 1 0 1 0 1 0 1 0 1 0 1 0 1 0 1 0 1 0 1 -.1 1 .1 1 0 1 0 1 0 1 0 1 0 1 0 1 0 1 0 1 0 1 0 1 0 1 0 1 0 1 0 1 -.1 1 .1 1 0 1 -.1 1 .1 1 0 1 0 1 0 1 0 1 0 1 0 1 0 1 0 1 0 1 0 1 -.2 1 .2 1 0 1 0 1 0 1 0 1 0 1 0 1 0 1 0 1 0 1 0 1 0 1 0 1 0 1 0 1 0 1 0 1 0 1 0 1 0 1 0 1 0 1 0 1 0 1 0 1 0 1 0 1 -.2 1 .2 1 0 1 0 1 0 1 0 1 0 1 0 1 0 1 0 1 0 1 0 1 0 1 0 1 0 1 0 1 0 1 -.1 1 .1 1 0 1 0 1 0 1 0 1 0 1 0 1 0 1 0 1 0 1 0 1 0 1 0 1 0 1 0 1 0 1 0 1 0 1 0 1 0 1 0 1 -.2 1 .2 1 0 1 0 1 0 1 0 1 0 1 0 1 0 1 0 1 0 1 0 1 0 1 0 1 0 1 0 1 0 1 0 1 0 1 -.1 1 .1 1 0 1 0 1 0 1 -.1 1 .1 1 0 1 0 1 0 1 0 1 0 1 0 1 0 1 0 1 0 1 0 1 -.1 1 .1 1 -.2 1 .2 1 -.1 1 .1 1 0 1 0 1 0 1 0 1 0 1 0 1 0 1 0 1 0 1 0 1 0 1 0 1 0 1 -.1 1 .1 1 0 1 0 1 0 1 0 1 0 1 0 1 0 1 0 1 0 1 0 1 0 1 0 1 0 1 0 1 0 1 0 1 0 1 0 1 0 1 0 1 0 1 -.2 1 .1 1 .1 1 0 1 0 1 0 1 0 1 0 1 0 1 0 1 0 1 0 1 0 1 0 1 0 1 0 1 0 1 0 1 0 1 0 1 0 1 0 1 0 1 0 1 0 1 0 1 0 1 0 1 0 1 -.1 1 .1 1 0 1 0 1 0 1 0 1 0 1 0 1 0 1 0 1 0 1 0 1 0 1 0 1 0 1 0 1 0 1 0 1 -.2 1 .2 1 0 1 0 1 0 1 0 1 0 1 0 1 -.1 1 .1 1 0 1 -.1 1 .1 1 0 1 0 1 0 1 0 1 0H859.5 V202.9 Z" fill="#6ED0E0" fill-opacity="0.1" stroke="#6ED0E0" stroke-width="1.2" stroke-linejoin="round" clip-path="url(#c0)"/>
<path d="M41.5 202.9V154.1H45.5l1 0 1 -.2 1 .1 1 .1 1 0 1 0 1 0 1 -.1 1 0 1 .1 1 -.1 1 .1 1 0 1 -.1 1 0 1 0 1 0 1 .1 1 0 1 0 1 0 1 0 1 -.1 1 0 1 0 1 0 1 .1 1 -.1 1 0 1 .1 1 -.1 1 .1 1 -.1 1 0 1 .1 1 -.1 1 .1 1 0 1 0 1 -.1 1 0 1 .1 1 0 1 0 1 -.3 1 .3 1 -.1 1 .1 1 -.1 1 0 1 0 1 .1 1 0 1 -.1 1 -.1 1 -.1 1 0 1 .3 1 0 1 -.2 1 .1 1 .1 1 -.1 1 .1 1 0 1 0 1 -.3 1 .2 1 .1 1 0 1 0 1 0 1 0 1 0 1 0 1 -.1 1 .1 1 0 1 0 1 -.1 1 .1 1 -.1 1 .1 1 0 1 0 1 0 1 0 1 -.3 1 .2 1 .1 1 -.1 1 0 1 0 1 .1 1 -.2 1 .2 1 0 1 -.1 1 0 1 -.2 1 .3 1 -.1 1 .1 1 -.1 1 .1 1 0 1 0 1 0 1 0 1 -.1 1 -.2 1 .1 1 .2 1 0 1 -.2 1 .2 1 0 1 -.1 1 .1 1 0 1 -.1 1 .1 1 0 1 -.1 1 .1 1 0 1 -.1 1 .1 1 -.1 1 .1 1 -.1 1 0 1 .1 1 -.1 1 .1 1 -.1 1 .1 1 -.1 1 .1 1 -.1 1 0 1 0 1 0 1 -.1 1 0 1 .2 1 -.3 1 .3 1 -.1 1 0 1 -.2 1 .3 1 0 1 -.2 1 .1 1 .1 1 0 1 -.1 1 .1 1 0 1 0 1 -.1 1 0 1 0 1 0 1 .1 1 -.1 1 .1 1 -.1 1 .1 1 0 1 0 1 0 1 -.1 1 .1 1 0 1 -.1 1 -.1 1 .2 1 0 1 -.1 1 0 1 0 1 0 1 0 1 0 1 .1 1 -.1 1 .1 1 -.1 1 0 1 .1 1 0 1 -.1 1 0 1 0 1 .1 1 0 1 -.1 1 .1 1 -.2 1 .2 1 0 1 -.1 1 .1 1 0 1 0 1 -.1 1 0 1 0 1 .1 1 -.1 1 .1 1 -.1 1 .1 1 0 1 -.1 1 0 1 0 1 .1 1 -.1 1 0 1 .1 1 -.1 1 0 1 .1 1 0 1 -.1 1 0 1 .1 1 -.3 1 .3 1 0 1 0 1 -.1 1 0 1 .1 1 0 1 -.1 1 .1 1 -.1 1 0 1 .1 1 0 1 -.1 1 .1 1 0 1 -.1 1 .1 1 -.1 1 0 1 .1 1 0 1 -.3 1 .2 1 .1 1 0 1 0 1 -.1 1 0 1 0 1 0 1 .1 1 0 1 0 1 0 1 -.1 1 0 1 0 1 0 1 0 1 0 1 0 1 0 1 .1 1 0 1 0 1 -.1 1 .1 1 0 1 -.1 1 .1 1 0 1 -.2 1 .1 1 .1 1 0 1 0 1 0 1 0 1 -.2 1 .2 1 0 1 -.3 1 .3 1 0 1 -.1 1 -.1 1 .2 1 0 1 0 1 0 1 -.1 1 .1 1 -.1 1 0 1 0 1 0 1 .1 1 0 1 -.1 1 .1 1 -.1 1 .1 1 -.1 1 .1 1 -.1 1 .1 1 -.1 1 .1 1 0 1 0 1 0 1 0 1 -.1 1 .1 1 0 1 0 1 -.1 1 .1 1 -.1 1 0 1 .1 1 -.1 1 .1 1 0 1 0 1 0 1 -.1 1 .1 1 -.1 1 .1 1 -.1 1 0 1 0 1 0 1 .1 1 0 1 -.3 1 .3 1 0 1 0 1 -.1 1 0 1 .1 1 0 1 -.1 1 0 1 .1 1 -.1 1 .1 1 0 1 -.1 1 0 1 .1 1 -.1 1 .1 1 0 1 -.1 1 0 1 0 1 .1 1 -.1 1 0 1 0 1 0 1 .1 1 0 1 -.1 1 .1 1 0 1 0 1 0 1 -.1 1 .1 1 0 1 0 1 -.1 1 0 1 .1 1 0 1 0 1 0 1 0 1 -.1 1 .1 1 -.2 1 .2 1 -.2 1 .1 1 0 1 -.1 1 .2 1 -.2 1 .2 1 0 1 0 1 0 1 -.1 1 0 1 .1 1 -.1 1 .1 1 0 1 -.2 1 .1 1 .1 1 -.1 1 0 1 .1 1 0 1 -.1 1 .1 1 0 1 0 1 0 1 0 1 -.1 1 0 1 .1 1 -.2 1 0 1 -.2 1 -.1 1 0 1 -.1 1 0 1 -.1 1 0 1 .1 1 .1 1 0 1 .1 1 -.1 1 0 1 .1 1 -.1 1 0 1 .1 1 -.3 1 .2 1 0 1 .2 1 .1 1 .1 1 0 1 .1 1 0 1 -.1 1 .1 1 0 1 0 1 -.1 1 .1 1 0 1 -.1 1 .1 1 -.1 1 .1 1 -.1 1 0 1 .1 1 -.1 1 0 1 .1 1 0 1 0 1 -.1 1 .1 1 -.1 1 .1 1 0 1 0 1 -.3 1 .2 1 0 1 0 1 .1 1 0 1 0 1 0 1 0 1 -.1 1 0 1 .1 1 0 1 0 1 0 1 0 1 0 1 0 1 -.1 1 .1 1 0 1 -.1 1 .1 1 0 1 0 1 0 1 0 1 -.1 1 .1 1 0 1 -.1 1 0 1 .1 1 -.1 1 .1 1 -.2 1 .1 1 0 1 0 1 .1 1 0 1 0 1 -.1 1 .1 1 -.1 1 .1 1 0 1 0 1 0 1 0 1 -.1 1 .1 1 -.1 1 .1 1 -.2 1 .2 1 -.1 1 .1 1 -.1 1 .1 1 0 1 0 1 0 1 0 1 0 1 0 1 -.1 1 .1 1 0 1 0 1 -.1 1 0 1 0 1 -.1 1 .2 1 -.1 1 0 1 .1 1 0 1 -.2 1 .2 1 -.3 1 .3 1 0 1 -.1 1 .1 1 0 1 0 1 0 1 -.1 1 0 1 .1 1 -.1 1 .1 1 -.1 1 0 1 0 1 .1 1 -.1 1 0 1 .1 1 0 1 -.1 1 .1 1 0 1 -.1 1 .1 1 -.1 1 .1 1 0 1 -.1 1 .1 1 -.1 1 -.2 1 .2 1 .1 1 0 1 -.1 1 .1 1 0 1 0 1 0 1 -.1 1 .1 1 0 1 0 1 0 1 -.1 1 -.1 1 .2 1 0 1 0 1 0 1 0 1 0 1 0 1 -.1 1 0 1 0 1 .1 1 -.1 1 0 1 0 1 .1 1 -.1 1 .1 1 0 1 0 1 -.1 1 .1 1 -.1 1 0 1 0 1 0 1 .1 1 -.1 1 .1 1 -.1 1 .1 1 0 1 -.1 1 .1 1 -.1 1 0 1 0 1 .1 1 -.1 1 -.1 1 .1 1 .1 1 0 1 0 1 0 1 0 1 0 1 0 1 0 1 0 1 0 1 0 1 -.1 1 .1 1 -.1 1 0 1 0 1 .1 1 -.3 1 .3 1 -.1 1 0 1 .1 1 0 1 -.1 1 .1 1 0 1 -.2 1 .2 1 -.1 1 .1 1 0 1 0 1 0 1 0 1 0 1 0 1 -.1 1 0 1 0 1 0 1 -.1 1 .1 1 .1 1 -.1 1 .1 1 0 1 -.1 1 .1 1 0 1 -.1 1 .1 1 -.2 1 .1 1 .1 1 0 1 0 1 -.1 1 .1 1 0 1 -.1 1 0 1 .1 1 0 1 -.1 1 .1 1 0 1 0 1 0 1 -.1 1 0 1 0 1 0 1 .1 1 -.1 1 0 1 .1 1 -.1 1 .1 1 -.1 1 .1 1 -.1 1 .1 1 0 1 -.1 1 .1 1 0 1 -.1 1 0 1 .1 1 0 1 0 1 0 1 -.1 1 0 1 .1 1 0 1 -.1 1 0 1 -.2 1 .3 1 -.1 1 0 1 0 1 0 1 .1 1 -.1 1 .1 1 0 1 0 1 0 1 0 1 0 1 0 1 -.1 1 0 1 .1 1 -.1 1 .1 1 -.1 1 .1 1 0 1 0 1 0 1 -.1 1 0 1 0 1 0 1 .1 1 -.1 1 0 1 .1 1 0 1 0 1 -.1 1 0 1 .1 1 -.1 1 .1 1 0 1 0 1 -.3 1 .2 1 0 1 0 1 -.1 1 .2 1 0 1 0 1 0 1 -.1 1 0 1 0 1 .1 1 -.1 1 .1 1 -.1 1 .1 1 -.1H859.5 V202.9 Z" fill="#EF843C" fill-opacity="0.1" stroke="#EF843C" stroke-width="1.2" stroke-linejoin="round" clip-path="url(#c0)"/>
<path d="M45.0 360.5H857.0 M45.0 337.5H857.0 M45.0 316.5H857.0 M45.0 294.5H857.0 M45.0 273.5H857.0 M45.5 273.0V361.0 M180.5 273.0V361.0 M315.5 273.0V361.0 M450.5 273.0V361.0 M585.5 273.0V361.0 M720.5 273.0V361.0 M856.5 273.0V361.0" stroke="#464648" stroke-width="1" fill="none"/>
<path d="M41.5 362.9V318.7H45.5l1 0 1 -.1 1 .1 1 0 1 .1 1 -.8 1 .7 1 0 1 0 1 0 1 0 1 -.1 1 -.1 1 .1 1 .1 1 0 1 -.4 1 .3 1 .2 1 0 1 -.2 1 .1 1 .1 1 -.1 1 .1 1 0 1 -.2 1 .1 1 .1 1 -.1 1 .1 1 0 1 -.2 1 .1 1 -.5 1 .5 1 .1 1 -.1 1 -.1 1 .2 1 -.2 1 -.3 1 .4 1 0 1 0 1 .1 1 -.2 1 -.2 1 .4 1 0 1 -.2 1 .1 1 0 1 0 1 0 1 0 1 .1 1 -.1 1 0 1 -.1 1 0 1 .1 1 0 1 .1 1 -.1 1 -.1 1 .1 1 0 1 .1 1 0 1 0 1 -.2 1 .1 1 0 1 0 1 0 1 0 1 0 1 0 1 -.1 1 .2 1 -.3 1 .2 1 0 1 0 1 0 1 0 1 0 1 0 1 0 1 0 1 0 1 -.1 1 -.5 1 .2 1 .4 1 0 1 .1 1 0 1 -.2 1 .1 1 .1 1 -.1 1 -.4 1 .3 1 .1 1 0 1 -.5 1 .6 1 -.2 1 .1 1 .1 1 -.2 1 .2 1 -.1 1 0 1 0 1 -.1 1 .1 1 -.1 1 0 1 .1 1 0 1 0 1 -.1 1 .1 1 -.1 1 .1 1 -.3 1 -.1 1 .4 1 .1 1 0 1 -.1 1 .1 1 -.1 1 0 1 -.1 1 0 1 .1 1 -.1 1 .2 1 0 1 -.1 1 0 1 -.1 1 0 1 .1 1 .1 1 -.1 1 .1 1 -.1 1 0 1 0 1 .1 1 -.1 1 -.6 1 .6 1 0 1 0 1 .1 1 -.1 1 .1 1 -.1 1 0 1 -.1 1 .2 1 -.2 1 -.3 1 .4 1 -.1 1 .2 1 -.1 1 .1 1 -.1 1 0 1 .1 1 -.1 1 .1 1 0 1 0 1 -.2 1 .1 1 0 1 0 1 0 1 0 1 .1 1 -.1 1 -.1 1 .1 1 0 1 .1 1 0 1 -.1 1 -.1 1 -25.4 1 25.6 1 -.1 1 0 1 0 1 0 1 0 1 0 1 -.1 1 .1 1 -.1 1 .1 1 -.1 1 .1 1 -.1 1 .1 1 -.1 1 .1 1 .1 1 -.1 1 0 1 0 1 .1 1 0 1 -.1 1 0 1 -.1 1 0 1 .1 1 -.1 1 .2 1 -.1 1 -.2 1 .3 1 0 1 -.1 1 0 1 .1 1 -.1 1 -.6 1 .6 1 .1 1 -.1 1 0 1 .1 1 -.6 1 .5 1 -.1 1 0 1 0 1 -.5 1 .6 1 0 1 0 1 .1 1 -.1 1 0 1 -.5 1 .5 1 0 1 0 1 -.5 1 .1 1 .3 1 -.4 1 .6 1 0 1 -.1 1 0 1 .1 1 0 1 -.1 1 0 1 0 1 0 1 -.1 1 .1 1 .1 1 -.1 1 0 1 .1 1 -.1 1 .1 1 -.1 1 .1 1 0 1 -.1 1 -.1 1 0 1 .1 1 0 1 0 1 0 1 -.1 1 .2 1 0 1 -.1 1 0 1 0 1 0 1 0 1 0 1 -.1 1 .1 1 0 1 .1 1 -.1 1 0 1 -.1 1 0 1 .1 1 -.1 1 0 1 0 1 .1 1 0 1 -.4 1 .4 1 0 1 0 1 0 1 0 1 -.1 1 0 1 .1 1 0 1 .1 1 -.1 1 .1 1 -.1 1 .1 1 0 1 -.2 1 -.3 1 .3 1 .1 1 0 1 0 1 -.3 1 .2 1 .1 1 .1 1 -.1 1 0 1 .1 1 -.6 1 .5 1 -.1 1 0 1 -.5 1 .7 1 -.4 1 .2 1 .1 1 .1 1 -.2 1 .1 1 .1 1 -.1 1 .1 1 0 1 -.1 1 -.4 1 .4 1 0 1 0 1 0 1 .1 1 -.2 1 .1 1 0 1 -.1 1 .2 1 0 1 0 1 -.1 1 .1 1 -.1 1 -.5 1 0 1 0 1 .5 1 0 1 0 1 -.1 1 -.5 1 .7 1 -.2 1 0 1 .1 1 .1 1 -.2 1 .1 1 .1 1 -.1 1 0 1 0 1 -.1 1 .2 1 0 1 -.1 1 0 1 -.3 1 .3 1 .1 1 0 1 -.1 1 -.1 1 0 1 .1 1 0 1 0 1 -.2 1 .2 1 .1 1 -.1 1 0 1 -.2 1 -.4 1 .6 1 .1 1 -.1 1 0 1 0 1 0 1 .1 1 0 1 -.1 1 -.4 1 .3 1 .1 1 -.1 1 .1 1 0 1 0 1 0 1 -.5 1 .1 1 .4 1 0 1 0 1 0 1 0 1 -.1 1 0 1 .1 1 0 1 0 1 -.1 1 0 1 .2 1 -.1 1 0 1 -.3 1 .3 1 -.1 1 .2 1 -.2 1 -.4 1 .6 1 0 1 -.2 1 0 1 0 1 0 1 .2 1 -.1 1 .1 1 -.1 1 .1 1 0 1 -.1 1 0 1 0 1 0 1 0 1 -.1 1 0 1 .1 1 -.1 1 .1 1 .1 1 -.2 1 .1 1 .1 1 0 1 -.1 1 0 1 .1 1 -.2 1 .1 1 0 1 .1 1 -.2 1 .1 1 0 1 0 1 .1 1 -.1 1 0 1 0 1 .1 1 -.1 1 -.1 1 0 1 .1 1 .1 1 -.1 1 -.1 1 .2 1 0 1 -.1 1 .1 1 -.1 1 0 1 0 1 -.1 1 .1 1 0 1 0 1 -.5 1 .5 1 .1 1 0 1 0 1 -.6 1 .5 1 -.1 1 .1 1 .1 1 -.1 1 0 1 .1 1 0 1 -.2 1 .1 1 0 1 -.2 1 .2 1 0 1 0 1 -.1 1 -.4 1 .6 1 0 1 -.1 1 .1 1 -.1 1 0 1 0 1 -.1 1 .2 1 0 1 -.4 1 .3 1 0 1 -.1 1 .1 1 0 1 0 1 0 1 0 1 -.1 1 .1 1 0 1 0 1 .1 1 -.1 1 0 1 -.1 1 .1 1 -.1 1 .1 1 .1 1 -.1 1 -.1 1 .2 1 -.1 1 -.4 1 .4 1 0 1 .1 1 -.6 1 .4 1 .1 1 0 1 .1 1 -.2 1 .1 1 -.1 1 .2 1 -.1 1 .1 1 0 1 -.1 1 0 1 .1 1 -.1 1 0 1 .1 1 -.1 1 -.1 1 .2 1 -.1 1 0 1 0 1 -.1 1 0 1 0 1 -.2 1 .3 1 -.5 1 .6 1 -.1 1 0 1 0 1 0 1 .1 1 -.2 1 .1 1 .1 1 -.3 1 .1 1 .2 1 0 1 -.1 1 -.1 1 .1 1 0 1 0 1 0 1 0 1 0 1 0 1 0 1 .1 1 -.3 1 .1 1 0 1 .1 1 -.1 1 0 1 .1 1 .1 1 0 1 -.1 1 0 1 0 1 0 1 0 1 -.1 1 .1 1 -.1 1 .1 1 -.1 1 .2 1 -.2 1 .2 1 0 1 -.1 1 0 1 -.4 1 .5 1 0 1 0 1 -.1 1 -.1 1 .1 1 0 1 -.2 1 .2 1 .1 1 -.1 1 .1 1 0 1 0 1 -.1 1 0 1 -.1 1 .1 1 0 1 .1 1 -.1 1 0 1 0 1 -.1 1 -.3 1 .4 1 0 1 0 1 0 1 0 1 .1 1 -.1 1 0 1 -.1 1 .1 1 -.1 1 .1 1 .1 1 -.2 1 .1 1 0 1 -.1 1 -.5 1 .6 1 -.1 1 0 1 .2 1 0 1 0 1 -.1 1 -.4 1 .5 1 -.1 1 0 1 .1 1 0 1 -.1 1 -.1 1 .1 1 -.1 1 .1 1 -.1 1 0 1 0 1 0 1 .1 1 -.1 1 .2 1 -.1 1 0 1 0 1 -.1 1 .1 1 .1 1 -.1 1 0 1 .1 1 -.2 1 .1 1 0 1 -.1 1 0 1 .2 1 0 1 -.2 1 .1 1 0 1 0 1 -.1 1 .2 1 -.1 1 -.5 1 .5 1 0 1 0 1 -.1 1 .1 1 0 1 0 1 0 1 0 1 .1 1 -.1 1 0 1 0 1 0 1 .1 1 -.1 1 .1 1 0 1 -.2 1 0 1 0 1 0 1 .1 1 -.1 1 .1 1 -.1 1 0 1 .2 1 -.1 1 0 1 0 1 0 1 0 1 0 1 .1 1 -.1 1 -.1 1 .1 1 -.1 1 -.6 1 .8 1 -.1 1 .1 1 -.2 1 .1 1 0 1 0 1 0 1 0 1 0 1 -.1 1 .2 1 -.2 1 .2 1 0 1 -.1 1 0 1 0 1 0 1 0H859.5 V362.9 Z" fill="#7EB26D" fill-opacity="0.1" stroke="#7EB26D" stroke-width="1.2" stroke-linejoin="round" clip-path="url(#c1)"/>
<path d="M41.5 362.9V346.6H45.5l1 0 1 0 1 .1 1 -.1 1 .1 1 0 1 -.4 1 .3 1 0 1 .1 1 0 1 -.2 1 .2 1 -.1 1 0 1 0 1 0 1 0 1 .1 1 0 1 -.1 1 0 1 0 1 .1 1 -.1 1 0 1 .1 1 -.1 1 .1 1 -.1 1 .1 1 -.3 1 .3 1 -.1 1 0 1 0 1 .1 1 0 1 -.1 1 0 1 .1 1 -.1 1 0 1 .1 1 0 1 0 1 -.1 1 0 1 0 1 0 1 0 1 .1 1 -.1 1 .1 1 -.8 1 -.3 1 .1 1 -.3 1 .3 1 0 1 0 1 0 1 0 1 0 1 0 1 -.1 1 .1 1 -.2 1 .2 1 0 1 -.1 1 .1 1 0 1 -.3 1 .2 1 .1 1 0 1 0 1 0 1 -.1 1 0 1 0 1 .4 1 .6 1 .1 1 -.1 1 0 1 0 1 .1 1 -.1 1 0 1 0 1 .1 1 0 1 0 1 -.1 1 0 1 0 1 -.1 1 .1 1 .1 1 -.1 1 0 1 0 1 .1 1 -.1 1 .1 1 0 1 -.1 1 0 1 0 1 .1 1 0 1 0 1 -.1 1 0 1 0 1 .1 1 0 1 -.1 1 -.1 1 -.1 1 .3 1 0 1 -.1 1 0 1 0 1 .1 1 -.2 1 .1 1 .1 1 -.1 1 0 1 .1 1 -.1 1 0 1 .1 1 -.1 1 .1 1 -.1 1 0 1 0 1 0 1 0 1 .1 1 -.1 1 0 1 .1 1 -.1 1 .1 1 -.1 1 -.2 1 .3 1 0 1 -.1 1 .1 1 -.1 1 0 1 0 1 .1 1 -.1 1 0 1 0 1 0 1 .1 1 -.1 1 0 1 0 1 .1 1 -.1 1 .1 1 -.1 1 0 1 0 1 .1 1 0 1 -.1 1 0 1 .1 1 -.1 1 .1 1 -.1 1 .1 1 0 1 0 1 0 1 -.1 1 0 1 0 1 .1 1 0 1 0 1 0 1 -.1 1 0 1 0 1 .1 1 -.1 1 .1 1 -.1 1 0 1 .1 1 -.1 1 .1 1 0 1 0 1 -.2 1 .1 1 0 1 0 1 0 1 .1 1 -.3 1 .2 1 .1 1 0 1 -.1 1 -.2 1 .2 1 .1 1 -.1 1 -.2 1 .2 1 0 1 .1 1 0 1 0 1 -.1 1 0 1 .1 1 -.1 1 0 1 0 1 0 1 .1 1 -.1 1 0 1 .1 1 0 1 -.2 1 .1 1 .1 1 -.1 1 0 1 0 1 0 1 0 1 -.3 1 .3 1 -.1 1 .2 1 0 1 -.1 1 0 1 0 1 0 1 0 1 .1 1 0 1 0 1 -.4 1 .4 1 -.1 1 .1 1 -.1 1 0 1 .1 1 0 1 -.1 1 0 1 .1 1 -.1 1 0 1 0 1 .1 1 -.1 1 0 1 0 1 .1 1 -.1 1 .1 1 0 1 -.1 1 .1 1 0 1 -.1 1 0 1 .1 1 -.1 1 0 1 .1 1 -.1 1 0 1 .1 1 -.1 1 -.1 1 .2 1 -.1 1 0 1 .1 1 -.1 1 .1 1 0 1 -.1 1 .1 1 -.1 1 0 1 .1 1 -.1 1 0 1 .1 1 -.1 1 .1 1 0 1 0 1 -.1 1 0 1 0 1 .1 1 0 1 -.1 1 .1 1 0 1 0 1 -.1 1 0 1 0 1 0 1 .1 1 -.1 1 .1 1 0 1 0 1 0 1 -.1 1 0 1 .1 1 -.1 1 .1 1 -.1 1 0 1 -.2 1 .2 1 .1 1 -.1 1 0 1 0 1 .1 1 -.1 1 0 1 .1 1 -.1 1 0 1 0 1 .1 1 -.1 1 0 1 0 1 0 1 0 1 .1 1 0 1 -.1 1 .1 1 0 1 -.3 1 .3 1 -.1 1 -.2 1 -.7 1 0 1 0 1 0 1 0 1 0 1 0 1 0 1 -.1 1 .1 1 -.1 1 .1 1 0 1 0 1 -.1 1 .1 1 0 1 0 1 0 1 0 1 -.1 1 .1 1 0 1 -.1 1 .1 1 0 1 0 1 0 1 -.1 1 .1 1 -.1 1 .1 1 -.1 1 0 1 .7 1 .1 1 0 1 .1 1 0 1 0 1 0 1 0 1 0 1 0 1 0 1 -.1 1 .1 1 -.1 1 .1 1 0 1 -.1 1 .1 1 0 1 0 1 0 1 0 1 -.1 1 0 1 0 1 0 1 .1 1 0 1 0 1 -.1 1 .1 1 0 1 0 1 -.1 1 .1 1 -.1 1 .1 1 -.2 1 .1 1 0 1 -.1 1 .2 1 0 1 0 1 -.1 1 .1 1 -.1 1 .1 1 0 1 -.1 1 0 1 .1 1 0 1 0 1 0 1 0 1 0 1 0 1 0 1 0 1 0 1 -.1 1 0 1 .1 1 0 1 0 1 -.1 1 .1 1 0 1 -.1 1 .1 1 0 1 0 1 -.2 1 .2 1 0 1 0 1 0 1 0 1 0 1 0 1 0 1 0 1 0 1 -.1 1 0 1 0 1 .1 1 -.1 1 .1 1 -.1 1 .1 1 -.1 1 .1 1 0 1 0 1 0 1 -.3 1 .3 1 0 1 -.3 1 .2 1 0 1 0 1 0 1 0 1 0 1 .1 1 0 1 0 1 0 1 -.1 1 .1 1 -.3 1 .3 1 -.1 1 .1 1 0 1 -.1 1 0 1 .1 1 -.1 1 .1 1 0 1 0 1 -.1 1 0 1 0 1 .1 1 0 1 0 1 -.1 1 .1 1 0 1 0 1 -.1 1 .1 1 -.1 1 .1 1 0 1 0 1 -.3 1 .3 1 -.1 1 .1 1 0 1 0 1 -.1 1 .1 1 -.1 1 0 1 .1 1 0 1 0 1 0 1 -.1 1 .1 1 0 1 0 1 0 1 -.1 1 0 1 .1 1 0 1 0 1 -.1 1 0 1 -.1 1 .2 1 0 1 0 1 0 1 -.1 1 .1 1 0 1 0 1 0 1 .2 1 0 1 0 1 -.1 1 .1 1 0 1 -.3 1 .2 1 .1 1 -.3 1 .2 1 .1 1 0 1 0 1 -.1 1 .1 1 -.1 1 0 1 .1 1 -.1 1 .1 1 -.3 1 .2 1 0 1 0 1 0 1 0 1 .1 1 -.1 1 .1 1 -.1 1 0 1 0 1 .1 1 0 1 0 1 0 1 0 1 -.1 1 .1 1 0 1 0 1 -.1 1 .1 1 0 1 -.1 1 0 1 .1 1 -.2 1 -.1 1 .3 1 0 1 0 1 -.1 1 .1 1 -.1 1 .1 1 0 1 0 1 -.3 1 .2 1 0 1 0 1 .1 1 -.1 1 0 1 0 1 .1 1 0 1 0 1 0 1 0 1 0 1 0 1 0 1 0 1 -.1 1 -.2 1 .1 1 .2 1 -.1 1 .1 1 0 1 -.1 1 .1 1 0 1 -.1 1 .1 1 -.1 1 0 1 .1 1 0 1 -.1 1 -.1 1 .1 1 .1 1 0 1 0 1 -.3 1 .3 1 -.1 1 0 1 0 1 0 1 .1 1 0 1 -.1 1 0 1 .1 1 -.1 1 .1 1 -.1 1 .1 1 0 1 -.1 1 -.1 1 .1 1 0 1 0 1 0 1 .1 1 -.1 1 .1 1 0 1 0 1 -.1 1 0 1 .1 1 -.1 1 0 1 .1 1 0 1 0 1 -.1 1 .1 1 0 1 0 1 -.4 1 .2 1 .1 1 .1 1 0 1 -.1 1 .1 1 -.1 1 .1 1 -.1 1 .1 1 -.1 1 .1 1 0 1 0 1 0 1 0 1 0 1 0 1 -.1 1 -.1 1 .1 1 .1 1 -.1 1 .1 1 -.1 1 0 1 .1 1 -.1 1 .1 1 -.1 1 0 1 0 1 .1 1 0 1 0 1 0 1 0 1 -.3 1 .2 1 0 1 0 1 0 1 .1 1 0 1 0 1 0 1 0 1 0 1 -.1 1 0 1 .1 1 0 1 0 1 0 1 -.1 1 .1 1 0 1 -.3 1 .3 1 -.1 1 .1 1 0 1 0 1 0 1 0 1 -.1 1 .1 1 -.1 1 .1 1 -.1 1 0 1 0 1 0 1 0 1 0 1 .1 1 -.1 1 0 1 .1 1 -.1 1 -.2 1 .2 1 0 1 .1 1 -.1 1 .1 1 -.1 1 0 1 0 1 .1 1 -.1 1 0H859.5 V362.9 Z" fill="#EAB839" fill-opacity="0.1" stroke="#EAB839" stroke-width="1.2" stroke-linejoin="round" clip-path="url(#c1)"/>
<path d="M41.5 362.9V321.4H45.5l1 0 1 .1 1 -.1 1 0 1 0 1 .1 1 0 1 0 1 0 1 -.1 1 -1.4 1 .2 1 1.3 1 -.2 1 .1 1 0 1 .1 1 0 1 -.1 1 0 1 0 1 .1 1 -.2 1 .1 1 0 1 0 1 0 1 0 1 -.4 1 .4 1 -.8 1 0 1 .9 1 0 1 0 1 -.1 1 .1 1 0 1 -.1 1 0 1 .1 1 -.1 1 0 1 .1 1 -.1 1 -.1 1 .1 1 -.1 1 .2 1 -.1 1 0 1 0 1 0 1 -.1 1 .2 1 -.1 1 -.1 1 .1 1 .1 1 -.1 1 0 1 -.1 1 .1 1 -.1 1 .1 1 -.1 1 .1 1 -.1 1 .1 1 0 1 -.4 1 .3 1 0 1 .1 1 0 1 0 1 -.1 1 .1 1 .1 1 -.1 1 0 1 0 1 .1 1 -.1 1 0 1 -.1 1 .2 1 -.1 1 0 1 0 1 -.3 1 .3 1 0 1 -.1 1 .1 1 0 1 0 1 0 1 0 1 0 1 0 1 0 1 0 1 0 1 0 1 0 1 .1 1 -.1 1 .1 1 -.1 1 0 1 0 1 0 1 0 1 0 1 0 1 0 1 0 1 0 1 .1 1 -.1 1 -.4 1 .4 1 0 1 0 1 0 1 .1 1 0 1 0 1 0 1 -.1 1 .1 1 -.1 1 .1 1 -.1 1 0 1 0 1 0 1 0 1 0 1 0 1 -.1 1 .1 1 -.1 1 .1 1 0 1 0 1 .1 1 -.2 1 .1 1 0 1 -.1 1 .1 1 .1 1 -.2 1 .2 1 -.1 1 0 1 .1 1 -.2 1 .1 1 0 1 -.1 1 -.2 1 .3 1 0 1 0 1 0 1 0 1 0 1 0 1 0 1 .1 1 -.2 1 .1 1 .1 1 -.1 1 0 1 0 1 0 1 -.1 1 .1 1 .1 1 0 1 -.1 1 -.1 1 .1 1 0 1 0 1 0 1 0 1 -.1 1 .2 1 -.1 1 0 1 0 1 0 1 -.1 1 0 1 .1 1 0 1 0 1 0 1 0 1 0 1 -.4 1 .4 1 -.1 1 .2 1 -.1 1 0 1 -.1 1 .1 1 .1 1 -.1 1 0 1 .1 1 -.1 1 -.1 1 .1 1 -.1 1 .1 1 0 1 -.1 1 .1 1 0 1 0 1 .1 1 -.1 1 .1 1 -.1 1 0 1 0 1 0 1 -.5 1 .5 1 -.1 1 .1 1 0 1 0 1 0 1 0 1 .1 1 0 1 0 1 0 1 -.1 1 0 1 -.1 1 .1 1 0 1 0 1 0 1 0 1 0 1 .1 1 -.1 1 0 1 0 1 0 1 -.1 1 .1 1 0 1 .1 1 -.2 1 .1 1 .1 1 0 1 -.1 1 0 1 0 1 -.1 1 .2 1 -.2 1 .1 1 -.2 1 .2 1 -.1 1 .1 1 0 1 -.1 1 .1 1 .1 1 -.1 1 .1 1 0 1 -.1 1 0 1 0 1 .1 1 -.2 1 .1 1 0 1 0 1 .1 1 -.1 1 -.1 1 .2 1 -.1 1 0 1 -.1 1 0 1 .1 1 0 1 0 1 .1 1 -.2 1 .1 1 .1 1 0 1 -.1 1 -.4 1 .5 1 0 1 0 1 -.2 1 .1 1 .1 1 -.1 1 .1 1 -.2 1 .2 1 -.2 1 .1 1 0 1 0 1 0 1 -.1 1 0 1 0 1 .1 1 -.1 1 .1 1 .1 1 0 1 -.2 1 .1 1 0 1 0 1 .1 1 0 1 -.1 1 0 1 0 1 .1 1 -.1 1 0 1 .1 1 0 1 -.1 1 .1 1 -.1 1 0 1 0 1 .1 1 -.2 1 0 1 .1 1 .1 1 -.1 1 .1 1 -.1 1 .1 1 -.1 1 .1 1 -.1 1 .1 1 -.1 1 .1 1 -.1 1 .1 1 0 1 -.1 1 -.1 1 .1 1 .1 1 0 1 -.1 1 .1 1 -.2 1 .1 1 0 1 0 1 0 1 0 1 0 1 0 1 0 1 0 1 .1 1 -.1 1 0 1 0 1 0 1 0 1 0 1 -.1 1 .1 1 -.5 1 .6 1 -.1 1 0 1 0 1 0 1 -.4 1 .4 1 0 1 .1 1 -.6 1 .6 1 -.4 1 .3 1 -.4 1 .5 1 -.1 1 0 1 .1 1 -.2 1 .1 1 0 1 0 1 0 1 0 1 0 1 .1 1 -.1 1 -.3 1 .3 1 .1 1 -.3 1 .2 1 0 1 -.1 1 .1 1 0 1 .1 1 -.2 1 .1 1 0 1 0 1 0 1 0 1 .1 1 -.1 1 0 1 .1 1 -.1 1 0 1 0 1 0 1 .1 1 0 1 -.1 1 0 1 .1 1 -.1 1 0 1 0 1 0 1 0 1 0 1 0 1 0 1 -.1 1 .2 1 -.1 1 -.1 1 .1 1 0 1 .1 1 -.1 1 0 1 -.4 1 .4 1 0 1 0 1 0 1 0 1 0 1 0 1 0 1 0 1 0 1 0 1 0 1 0 1 .1 1 -.1 1 0 1 0 1 0 1 -.1 1 .1 1 0 1 -.1 1 .1 1 .1 1 -.1 1 0 1 0 1 0 1 0 1 0 1 .1 1 -.1 1 .1 1 -.1 1 -.1 1 .1 1 0 1 0 1 0 1 -.1 1 .1 1 0 1 0 1 .1 1 -.2 1 -.3 1 .3 1 .1 1 -.1 1 .2 1 -.1 1 -.1 1 .1 1 .1 1 0 1 -.1 1 0 1 0 1 .1 1 -.1 1 .1 1 -.2 1 .1 1 -.1 1 .1 1 0 1 -.1 1 0 1 .1 1 -.1 1 .1 1 .1 1 0 1 -.1 1 .1 1 -.1 1 .1 1 0 1 -.1 1 0 1 .1 1 -.1 1 0 1 0 1 0 1 .1 1 -.1 1 0 1 -.1 1 .1 1 0 1 .1 1 -.1 1 0 1 -.1 1 .1 1 0 1 .1 1 -.1 1 0 1 0 1 .1 1 -.1 1 .1 1 -.2 1 .1 1 -.4 1 .5 1 -.1 1 0 1 0 1 .1 1 -.1 1 .1 1 0 1 -.1 1 0 1 0 1 -.5 1 .6 1 -.1 1 0 1 0 1 .1 1 -.1 1 .1 1 -.6 1 .6 1 -.1 1 0 1 0 1 0 1 0 1 -.1 1 .2 1 -.1 1 -.2 1 .2 1 0 1 0 1 .1 1 -.1 1 0 1 0 1 0 1 .1 1 -.1 1 0 1 0 1 0 1 0 1 0 1 0 1 0 1 .1 1 -.1 1 0 1 0 1 0 1 .1 1 -.1 1 .1 1 -.1 1 0 1 0 1 0 1 0 1 0 1 -.2 1 .1 1 .1 1 0 1 0 1 .1 1 -.1 1 .1 1 -.1 1 -.1 1 .1 1 -.1 1 .1 1 -.1 1 .1 1 -.1 1 .1 1 -.5 1 .5 1 .1 1 -.1 1 0 1 -.1 1 -.1 1 .2 1 0 1 0 1 -.1 1 .1 1 0 1 0 1 0 1 .1 1 -.1 1 0 1 0 1 0 1 .1 1 -.1 1 -.1 1 .1 1 .1 1 -.1 1 0 1 0 1 0 1 0 1 .1 1 -.2 1 .2 1 -.1 1 0 1 0 1 -.1 1 -.6 1 0 1 .8 1 -.3 1 .2 1 0 1 0 1 .1 1 -.2 1 .1 1 -.1 1 .1 1 .1 1 -.1 1 0 1 .1 1 -.4 1 .4 1 -.1 1 0 1 0 1 -.1 1 0 1 .2 1 -.1 1 0 1 0 1 0 1 .1 1 0 1 0 1 -.1 1 0 1 0 1 0 1 0 1 0 1 0 1 0 1 .1 1 -.1 1 .1 1 -.1 1 .1 1 -.1 1 0 1 0 1 0 1 .1 1 -.1 1 .1 1 0 1 0 1 -.1 1 .1 1 -.1 1 .1 1 -.1 1 0 1 0 1 -.1 1 .1 1 0 1 0 1 0 1 .1 1 -2.9 1 -4.3 1 -2 1 0 1 2.1 1 4.1 1 3 1 -.2 1 .1 1 0 1 0 1 0 1 0 1 .1 1 0 1 -.6 1 .4 1 .1 1 .1 1 -.1 1 .1 1 -.1 1 0 1 0 1 0 1 0 1 0 1 .1 1 0 1 -.1 1 0 1 -.3 1 .3 1 .1 1 -.1 1 0 1 .1 1 -.1 1 0 1 0 1 0 1 0 1 .1 1 -.1 1 0 1 0 1 .1 1 -.1 1 -.1H859.5 V362.9 Z" fill="#6ED0E0" fill-opacity="0.1" stroke="#6ED0E0" stroke-width="1.2" stroke-linejoin="round" clip-path="url(#c1)"/>
<path d="M41.5 362.9V337.3H45.5l1 0 1 0 1 0 1 0 1 0 1 0 1 0 1 0 1 0 1 0 1 0 1 0 1 0 1 0 1 0 1 0 1 0 1 0 1 0 1 0 1 0 1 0 1 0 1 0 1 0 1 0 1 0 1 0 1 0 1 0 1 0 1 0 1 0 1 0 1 0 1 0 1 0 1 0 1 0 1 0 1 0 1 0 1 0 1 0 1 0 1 0 1 0 1 0 1 0 1 0 1 0 1 0 1 0 1 0 1 0 1 0 1 0 1 0 1 0 1 0 1 0 1 0 1 0 1 0 1 0 1 0 1 0 1 0 1 -.2 1 .2 1 0 1 0 1 0 1 0 1 0 1 -.1 1 .1 1 0 1 0 1 0 1 0 1 0 1 0 1 0 1 0 1 0 1 0 1 0 1 0 1 0 1 0 1 0 1 0 1 0 1 0 1 0 1 -.2 1 .2 1 0 1 0 1 0 1 0 1 0 1 0 1 0 1 0 1 -.1 1 .1 1 0 1 0 1 0 1 0 1 0 1 0 1 0 1 0 1 0 1 0 1 0 1 0 1 0 1 0 1 0 1 -.2 1 .2 1 -.1 1 .1 1 0 1 0 1 0 1 0 1 -.2 1 .2 1 0 1 0 1 0 1 0 1 0 1 0 1 0 1 0 1 0 1 0 1 0 1 0 1 0 1 0 1 0 1 0 1 0 1 0 1 0 1 0 1 0 1 0 1 0 1 0 1 0 1 0 1 0 1 0 1 -.1 1 .1 1 0 1 0 1 0 1 0 1 0 1 0 1 0 1 0 1 0 1 0 1 0 1 0 1 0 1 0 1 0 1 0 1 0 1 0 1 0 1 0 1 0 1 0 1 0 1 -.2 1 .2 1 0 1 0 1 -.1 1 .1 1 -.2 1 .2 1 0 1 0 1 0 1 0 1 0 1 0 1 -.2 1 .2 1 0 1 0 1 0 1 0 1 0 1 0 1 0 1 0 1 0 1 0 1 0 1 0 1 0 1 0 1 -.2 1 .2 1 0 1 0 1 0 1 0 1 0 1 0 1 0 1 0 1 0 1 0 1 0 1 0 1 0 1 -.2 1 .2 1 0 1 0 1 -.2 1 .2 1 0 1 0 1 0 1 0 1 0 1 0 1 -.1 1 .1 1 0 1 0 1 0 1 0 1 0 1 0 1 0 1 0 1 0 1 0 1 0 1 0 1 0 1 0 1 0 1 0 1 0 1 0 1 0 1 0 1 0 1 0 1 0 1 0 1 0 1 0 1 0 1 0 1 0 1 0 1 0 1 0 1 0 1 0 1 0 1 0 1 0 1 0 1 0 1 0 1 -.1 1 .1 1 0 1 0 1 0 1 0 1 0 1 0 1 0 1 0 1 0 1 0 1 0 1 0 1 0 1 0 1 0 1 -.2 1 .2 1 0 1 -.2 1 .2 1 -.2 1 .2 1 0 1 0 1 0 1 0 1 0 1 0 1 0 1 0 1 0 1 0 1 0 1 0 1 0 1 0 1 0 1 -.1 1 .1 1 0 1 0 1 0 1 0 1 0 1 0 1 0 1 0 1 0 1 0 1 0 1 0 1 0 1 0 1 0 1 0 1 0 1 0 1 0 1 0 1 0 1 0 1 0 1 0 1 0 1 0 1 0 1 0 1 0 1 0 1 0 1 0 1 0 1 0 1 0 1 0 1 0 1 0 1 0 1 0 1 0 1 0 1 0 1 0 1 0 1 0 1 0 1 0 1 0 1 0 1 0 1 0 1 0 1 0 1 0 1 0 1 0 1 0 1 0 1 0 1 0 1 0 1 -.2 1 .1 1 .1 1 0 1 0 1 0 1 0 1 0 1 0 1 0 1 0 1 0 1 0 1 0 1 0 1 0 1 0 1 0 1 -.2 1 .2 1 0 1 0 1 0 1 0 1 0 1 0 1 0 1 -.2 1 .2 1 0 1 0 1 0 1 0 1 0 1 0 1 0 1 0 1 0 1 0 1 0 1 0 1 0 1 0 1 0 1 0 1 0 1 -.2 1 .2 1 0 1 0 1 0 1 0 1 0 1 0 1 0 1 0 1 0 1 -.2 1 .2 1 0 1 0 1 0 1 0 1 0 1 0 1 0 1 0 1 0 1 0 1 0 1 0 1 -.3 1 .3 1 0 1 -.2 1 .2 1 0 1 0 1 0 1 0 1 0 1 0 1 0 1 0 1 0 1 0 1 0 1 0 1 0 1 0 1 -.2 1 .2 1 0 1 0 1 0 1 -.1 1 -.1 1 .2 1 0 1 0 1 0 1 0 1 0 1 0 1 0 1 0 1 -.3 1 .3 1 0 1 0 1 0 1 0 1 0 1 0 1 0 1 0 1 -.1 1 .1 1 -.1 1 .1 1 0 1 0 1 0 1 0 1 0 1 0 1 0 1 0 1 0 1 0 1 0 1 0 1 0 1 0 1 0 1 0 1 0 1 -.1 1 .1 1 0 1 0 1 0 1 0 1 0 1 0 1 -.2 1 .2 1 0 1 0 1 0 1 0 1 0 1 0 1 0 1 0 1 0 1 0 1 0 1 0 1 0 1 0 1 0 1 0 1 0 1 0 1 0 1 0 1 0 1 0 1 0 1 0 1 -.2 1 .2 1 0 1 0 1 0 1 0 1 0 1 0 1 0 1 0 1 0 1 0 1 0 1 0 1 0 1 0 1 0 1 0 1 0 1 -.1 1 .1 1 0 1 0 1 0 1 0 1 -.2 1 .2 1 0 1 0 1 0 1 0 1 0 1 0 1 0 1 0 1 0 1 0 1 0 1 0 1 0 1 0 1 -.1 1 .1 1 0 1 0 1 0 1 0 1 0 1 0 1 0 1 0 1 0 1 0 1 0 1 0 1 0 1 0 1 0 1 0 1 0 1 0 1 0 1 0 1 0 1 0 1 0 1 0 1 0 1 0 1 0 1 0 1 0 1 0 1 0 1 0 1 0 1 0 1 0 1 0 1 0 1 0 1 -.2 1 .2 1 0 1 0 1 0 1 0 1 0 1 0 1 -.2 1 .2 1 0 1 0 1 -.1 1 .1 1 0 1 0 1 -.2 1 .2 1 0 1 0 1 0 1 0 1 0 1 0 1 0 1 0 1 -.2 1 .2 1 0 1 0 1 0 1 0 1 0 1 0 1 0 1 0 1 0 1 0 1 0 1 0 1 0 1 0 1 0 1 0 1 0 1 0 1 0 1 0 1 0 1 0 1 0 1 0 1 0 1 0 1 0 1 0 1 0 1 0 1 0 1 0 1 0 1 0 1 0 1 0 1 0 1 0 1 0 1 0 1 0 1 0 1 0 1 0 1 0 1 0 1 0 1 0 1 0 1 0 1 0 1 0 1 0 1 0 1 0 1 0 1 -.2 1 0 1 .2 1 0 1 0 1 0 1 0 1 0 1 0 1 0 1 0 1 0 1 0 1 0 1 0 1 -.2 1 .2 1 0 1 0 1 0 1 0 1 0 1 0 1 0 1 0 1 0 1 0 1 0 1 0 1 0 1 0 1 0 1 0 1 0 1 0 1 0 1 0 1 0 1 0 1 0 1 0 1 0 1 0 1 0 1 0 1 0 1 0 1 0 1 0 1 0 1 0 1 0 1 0 1 0 1 0 1 0 1 0 1 0 1 0 1 0 1 0 1 0 1 0 1 0 1 0 1 0 1 0 1 0 1 0 1 -.2 1 .2 1 0 1 0 1 0 1 -.1 1 .1 1 0 1 0 1 0 1 0 1 0 1 0 1 0 1 0 1 0 1 0H859.5 V362.9 Z" fill="#EF843C" fill-opacity="0.1" stroke="#EF843C" stroke-width="1.2" stroke-linejoin="round" clip-path="url(#c1)"/>
<path d="M45.0 520.5H857.0 M45.0 497.5H857.0 M45.0 476.5H857.0 M45.0 454.5H857.0 M45.0 433.5H857.0 M45.5 433.0V521.0 M180.5 433.0V521.0 M315.5 433.0V521.0 M450.5 433.0V521.0 M585.5 433.0V521.0 M720.5 433.0V521.0 M856.5 433.0V521.0" stroke="#464648" stroke-width="1" fill="none"/>
<path d="M41.5 522.9V514.1H45.5l1 0 1 .1 1 -.1 1 0 1 .1 1 0 1 -.1 1 .1 1 -.1 1 .1 1 -.1 1 .1 1 0 1 0 1 0 1 0 1 0 1 -.1 1 -.4 1 .5 1 -.1 1 .1 1 -.1 1 .1 1 -.1 1 0 1 0 1 .1 1 -.1 1 -.1 1 .2 1 .1 1 -.1 1 -.1 1 -.5 1 .6 1 0 1 -.1 1 .1 1 -.1 1 -.2 1 0 1 .2 1 .1 1 0 1 0 1 0 1 0 1 -.1 1 -.3 1 .3 1 0 1 .1 1 0 1 -1.3 1 -.8 1 0 1 0 1 .2 1 0 1 -.1 1 -.1 1 0 1 .2 1 -.2 1 -.6 1 .7 1 0 1 0 1 .1 1 -.2 1 0 1 .2 1 -.2 1 0 1 0 1 0 1 -.1 1 .3 1 0 1 0 1 -.7 1 1.3 1 1.3 1 0 1 0 1 -.1 1 0 1 .1 1 0 1 0 1 -.1 1 .1 1 -.1 1 0 1 0 1 0 1 0 1 0 1 .1 1 -.1 1 .1 1 -.1 1 0 1 0 1 .1 1 -.2 1 .2 1 0 1 -.2 1 .2 1 -.1 1 0 1 0 1 .1 1 0 1 -.1 1 .1 1 0 1 -.6 1 .5 1 .1 1 -.1 1 0 1 .1 1 0 1 0 1 -.1 1 0 1 .1 1 0 1 -.1 1 -.4 1 -.2 1 .6 1 .1 1 -.1 1 .1 1 0 1 -.1 1 .1 1 -.1 1 .1 1 -.2 1 .1 1 .1 1 0 1 -.1 1 0 1 0 1 .1 1 -.1 1 0 1 .1 1 .1 1 -.2 1 .1 1 0 1 .1 1 -.1 1 -.1 1 .1 1 0 1 -.1 1 .1 1 0 1 -.4 1 .3 1 .1 1 -.2 1 0 1 .2 1 0 1 -.1 1 0 1 .2 1 -.2 1 0 1 -.1 1 .2 1 -.1 1 .1 1 0 1 -.1 1 .1 1 -.1 1 -.1 1 -.5 1 .7 1 0 1 0 1 -.2 1 .1 1 .1 1 0 1 -.1 1 -.4 1 .6 1 -.3 1 .1 1 -.4 1 .5 1 -.3 1 .3 1 -.1 1 0 1 .1 1 0 1 -.6 1 .6 1 -.3 1 .2 1 0 1 .1 1 -.1 1 0 1 0 1 -.5 1 .4 1 .1 1 0 1 0 1 0 1 .1 1 -.1 1 0 1 0 1 .1 1 0 1 0 1 -.1 1 .1 1 -.1 1 0 1 .1 1 -.1 1 .1 1 0 1 0 1 -.1 1 0 1 0 1 -.4 1 .5 1 -.1 1 .1 1 0 1 -.1 1 .1 1 -.1 1 .1 1 0 1 -.2 1 .2 1 0 1 -.1 1 .2 1 -.1 1 -.1 1 .1 1 0 1 -.2 1 .2 1 0 1 0 1 0 1 0 1 -.1 1 .1 1 -.1 1 .1 1 0 1 0 1 -.1 1 0 1 0 1 .1 1 -.1 1 -.7 1 .7 1 .1 1 -.1 1 .1 1 0 1 -.1 1 .1 1 0 1 -.7 1 .7 1 0 1 0 1 -.1 1 .1 1 0 1 -.1 1 0 1 0 1 .1 1 0 1 -.1 1 .1 1 0 1 0 1 -.1 1 0 1 .1 1 0 1 0 1 0 1 0 1 0 1 -.1 1 0 1 0 1 .1 1 -.1 1 0 1 0 1 .1 1 -.1 1 .1 1 -.1 1 .1 1 -.1 1 0 1 0 1 0 1 .2 1 -.2 1 .1 1 -.1 1 -.1 1 .2 1 -.1 1 0 1 -.1 1 .1 1 .1 1 0 1 -.1 1 .1 1 0 1 -.1 1 0 1 0 1 0 1 .1 1 0 1 -.4 1 .4 1 0 1 -.1 1 .1 1 -.2 1 .2 1 -.1 1 0 1 .1 1 -.1 1 0 1 .1 1 0 1 0 1 -.1 1 -.6 1 .6 1 .1 1 0 1 -1.1 1 -1 1 0 1 .1 1 .1 1 -.6 1 .6 1 -.1 1 0 1 0 1 .1 1 0 1 -.4 1 .3 1 .1 1 -.1 1 .1 1 0 1 -.1 1 -.1 1 0 1 .2 1 0 1 -.2 1 .1 1 0 1 -.2 1 .2 1 -.1 1 .1 1 0 1 .1 1 -.2 1 .1 1 .1 1 1.1 1 .7 1 0 1 .1 1 -.1 1 .1 1 0 1 0 1 -.1 1 -.5 1 .1 1 .4 1 .1 1 0 1 -.1 1 -.6 1 .5 1 .2 1 -.1 1 .1 1 -.1 1 0 1 0 1 .1 1 -.2 1 .2 1 -.2 1 .1 1 .1 1 0 1 -.1 1 0 1 .2 1 -.2 1 0 1 .1 1 -.1 1 .1 1 0 1 0 1 0 1 0 1 0 1 -.1 1 .1 1 -.1 1 0 1 0 1 .1 1 -.1 1 .1 1 -.2 1 .2 1 -.1 1 0 1 .1 1 -.1 1 .1 1 -.1 1 0 1 -.2 1 .2 1 0 1 .1 1 0 1 -.4 1 .3 1 .1 1 0 1 -.1 1 0 1 -.1 1 .1 1 0 1 0 1 .1 1 0 1 0 1 -.1 1 0 1 .1 1 -.1 1 0 1 .1 1 -.1 1 0 1 0 1 -.1 1 .1 1 0 1 .1 1 0 1 0 1 0 1 0 1 -.1 1 0 1 0 1 .1 1 -.1 1 .1 1 0 1 -.1 1 .1 1 0 1 0 1 -.1 1 0 1 .1 1 -.1 1 0 1 0 1 .1 1 0 1 -.3 1 .2 1 .1 1 -.1 1 .1 1 0 1 -.1 1 0 1 -.3 1 .3 1 .1 1 -.1 1 0 1 .1 1 0 1 -.1 1 .1 1 0 1 -.1 1 .1 1 -.1 1 .1 1 -.1 1 0 1 -.2 1 .2 1 0 1 -.3 1 .2 1 .2 1 0 1 -.1 1 0 1 0 1 0 1 0 1 .1 1 0 1 -.1 1 0 1 0 1 0 1 0 1 .1 1 -.1 1 .1 1 -.1 1 0 1 0 1 .1 1 -.1 1 .1 1 0 1 -.1 1 -.1 1 .2 1 0 1 0 1 -.1 1 .1 1 -.1 1 .1 1 -.1 1 .8 1 0 1 .1 1 .1 1 -.1 1 0 1 -.1 1 .2 1 -.2 1 .1 1 -.1 1 -.2 1 .3 1 .1 1 -.1 1 -.2 1 -.1 1 .1 1 .3 1 -.1 1 0 1 0 1 0 1 .1 1 -.2 1 -.4 1 .6 1 0 1 0 1 0 1 0 1 -.1 1 -.1 1 0 1 .2 1 -.1 1 .1 1 -.1 1 -.2 1 .2 1 -.1 1 .2 1 -.2 1 0 1 .1 1 -.1 1 .2 1 0 1 0 1 -.2 1 0 1 .1 1 0 1 -.3 1 .4 1 0 1 -.1 1 .1 1 -.1 1 -.1 1 .1 1 0 1 .1 1 0 1 0 1 -.1 1 .1 1 0 1 0 1 0 1 -.1 1 0 1 0 1 .1 1 0 1 -.1 1 0 1 0 1 -.1 1 .1 1 -.4 1 .5 1 -.1 1 0 1 -.1 1 0 1 .1 1 -.1 1 -.2 1 .2 1 .2 1 -.1 1 0 1 0 1 -.1 1 .2 1 -.1 1 -.1 1 0 1 .1 1 0 1 0 1 -.1 1 .1 1 .1 1 -.1 1 0 1 .1 1 -.1 1 -.1 1 .1 1 -.1 1 .1 1 -.1 1 .2 1 0 1 -.2 1 .2 1 0 1 -.1 1 0 1 0 1 .1 1 -.1 1 0 1 0 1 -.1 1 .1 1 .1 1 0 1 -.2 1 .1 1 0 1 0 1 -.3 1 .2 1 .1 1 0 1 0 1 .1 1 -.1 1 -.1 1 .2 1 -.3 1 .3 1 -.2 1 .2 1 -.4 1 .3 1 0 1 0 1 0 1 0 1 0 1 .1 1 -.2 1 .1 1 .1 1 -.1 1 .1 1 -.1 1 .1 1 -.2 1 .2 1 -.1 1 .1 1 -.1 1 .1 1 0 1 0 1 0 1 0 1 -.1 1 -.5 1 .5 1 -.1 1 .1 1 0 1 -.1 1 0 1 .1 1 0 1 .1 1 -.2 1 .2 1 -.1 1 0 1 .1 1 0 1 -.1 1 0 1 .1 1 -.5 1 .1 1 .3 1 -.6 1 .6 1 .1 1 -.1 1 .1 1 0 1 -.2 1 .1 1 0 1 0 1 .1 1 -.1 1 .1 1 -.1 1 0 1 0 1 0 1 -.1 1 -.4 1 0 1 .6 1 -.1 1 -.1 1 .2 1 -.1 1 0 1 0 1 -.1 1 -.4 1 .4 1 .2 1 -.1 1 .1 1 -.2 1 .1H859.5 V522.9 Z" fill="#7EB26D" fill-opacity="0.1" stroke="#7EB26D" stroke-width="1.2" stroke-linejoin="round" clip-path="url(#c2)"/>
<path d="M41.5 522.9V492.6H45.5l1 -.2 1 .1 1 -.2 1 .1 1 .2 1 -1.2 1 1.1 1 .1 1 -.3 1 -.6 1 .7 1 -.1 1 .3 1 0 1 -.1 1 0 1 -1 1 1 1 0 1 -.2 1 0 1 .1 1 0 1 .1 1 -.2 1 .2 1 0 1 -.5 1 .4 1 0 1 0 1 .1 1 -.1 1 .2 1 -.1 1 0 1 0 1 .1 1 -.3 1 .1 1 -.1 1 .2 1 -.2 1 0 1 .2 1 -.2 1 .3 1 -.3 1 -.6 1 .8 1 -.6 1 .4 1 0 1 .2 1 -.1 1 .2 1 -.3 1 0 1 .2 1 -.2 1 .1 1 -1 1 0 1 1 1 0 1 .1 1 -.2 1 .3 1 0 1 0 1 -.2 1 0 1 0 1 .2 1 -.1 1 -1 1 .8 1 -.7 1 1 1 0 1 -.1 1 -.7 1 .7 1 0 1 -.1 1 .2 1 -.2 1 -.1 1 .1 1 -1 1 .9 1 .2 1 .1 1 0 1 -7.8 1 -11 1 .5 1 0 1 -.7 1 .8 1 -.2 1 .1 1 0 1 -.1 1 .2 1 4.4 1 10 1 3.6 1 0 1 0 1 .1 1 0 1 -.2 1 -.7 1 .9 1 .1 1 0 1 -.3 1 .1 1 -.1 1 .2 1 -.1 1 .1 1 0 1 -.2 1 .1 1 0 1 .1 1 -.1 1 0 1 .2 1 -.1 1 -1.2 1 1 1 .3 1 0 1 -.2 1 .2 1 0 1 -.1 1 0 1 -.2 1 -.4 1 .6 1 0 1 -.2 1 -.8 1 1.1 1 -.3 1 -.8 1 .9 1 0 1 .1 1 0 1 -.1 1 -.6 1 .6 1 -.3 1 .3 1 0 1 .2 1 -.2 1 0 1 0 1 -.1 1 .3 1 -.2 1 .2 1 -.2 1 -.1 1 0 1 .2 1 -.2 1 0 1 .2 1 -.2 1 .3 1 -.2 1 -.1 1 .3 1 -.2 1 .1 1 -.1 1 -.1 1 .2 1 0 1 -.1 1 .1 1 .1 1 -1.1 1 1 1 -.2 1 0 1 .3 1 -.1 1 -.2 1 -48.4 1 48.6 1 -.1 1 0 1 .2 1 -.2 1 0 1 -.1 1 -.7 1 .8 1 -.1 1 .2 1 -.2 1 .3 1 -.3 1 .2 1 -.1 1 0 1 -.1 1 .2 1 -.2 1 .2 1 -.2 1 .2 1 .1 1 -.1 1 0 1 0 1 -.1 1 0 1 0 1 .1 1 .1 1 -.1 1 -.2 1 .3 1 -.2 1 0 1 .1 1 -.1 1 .1 1 -.1 1 0 1 -1 1 1.1 1 -.1 1 .2 1 0 1 -.1 1 -.5 1 .6 1 -.3 1 .3 1 0 1 -.3 1 .1 1 .2 1 -.2 1 .1 1 -.2 1 -.6 1 .8 1 0 1 .1 1 -.3 1 .1 1 -.1 1 0 1 .1 1 .2 1 -.2 1 .1 1 .1 1 0 1 -.3 1 .3 1 0 1 -.1 1 0 1 0 1 -.1 1 0 1 .1 1 0 1 .1 1 -.1 1 .1 1 -.3 1 .1 1 0 1 0 1 .1 1 -.1 1 0 1 .1 1 -.2 1 .1 1 0 1 -.1 1 0 1 .2 1 .1 1 -.2 1 .1 1 -.1 1 -.1 1 0 1 0 1 .1 1 -.1 1 .2 1 0 1 0 1 .1 1 -.1 1 .1 1 0 1 -.1 1 -.1 1 .1 1 .1 1 -.2 1 -.1 1 .1 1 0 1 .2 1 -.3 1 .1 1 .1 1 .1 1 0 1 -1.1 1 1.1 1 -.2 1 -.1 1 .3 1 0 1 -.1 1 0 1 -.2 1 0 1 .2 1 0 1 -.2 1 .3 1 -.3 1 .1 1 .2 1 -.3 1 0 1 .1 1 -.1 1 .1 1 -.1 1 .3 1 0 1 -1.3 1 1 1 .1 1 0 1 .1 1 .1 1 -.3 1 .3 1 0 1 -.1 1 0 1 .1 1 0 1 -.1 1 0 1 -.2 1 .1 1 0 1 0 1 0 1 0 1 .1 1 -.2 1 0 1 .1 1 -.1 1 .1 1 .1 1 -.1 1 .2 1 -.3 1 .1 1 0 1 -.1 1 .2 1 0 1 -.1 1 0 1 .2 1 -.1 1 -.1 1 -.1 1 0 1 .1 1 .2 1 -.1 1 -.9 1 .7 1 .3 1 -.3 1 0 1 .1 1 0 1 -.1 1 .1 1 0 1 .1 1 -.6 1 .7 1 -.2 1 .1 1 0 1 0 1 .1 1 -.1 1 0 1 -.1 1 0 1 0 1 -.1 1 .1 1 .1 1 0 1 0 1 -.2 1 0 1 .2 1 .1 1 -.2 1 0 1 -.1 1 0 1 0 1 .2 1 -.2 1 .2 1 -.2 1 .2 1 .1 1 -.2 1 -.1 1 0 1 .2 1 0 1 .1 1 -.3 1 .1 1 -.1 1 .1 1 -.1 1 0 1 0 1 .1 1 .1 1 0 1 -1 1 .9 1 0 1 .1 1 -.1 1 -.1 1 .1 1 .1 1 0 1 0 1 -.9 1 1 1 -.2 1 .1 1 -.1 1 0 1 -1 1 1.1 1 .1 1 -.7 1 .4 1 .1 1 -.1 1 .1 1 -.1 1 .1 1 .1 1 -.1 1 .1 1 0 1 -.1 1 0 1 .2 1 -.2 1 -.1 1 -.7 1 .8 1 -.1 1 .2 1 -.2 1 0 1 .2 1 -.2 1 .2 1 -.2 1 0 1 .1 1 .1 1 -.1 1 .1 1 0 1 .1 1 -.2 1 .2 1 -.1 1 -.2 1 .2 1 .1 1 -.9 1 .6 1 .2 1 -.2 1 .3 1 -.2 1 .2 1 -.2 1 .2 1 -.1 1 -.1 1 0 1 -.1 1 .1 1 .1 1 -.2 1 0 1 .1 1 0 1 .2 1 -.2 1 0 1 .1 1 -.2 1 .3 1 0 1 0 1 0 1 0 1 -.2 1 .2 1 -.1 1 -.4 1 .2 1 -7.4 1 0 1 7.6 1 -.2 1 .1 1 .1 1 0 1 -.1 1 -.1 1 .3 1 -.1 1 0 1 0 1 -.1 1 -.1 1 0 1 .2 1 -.1 1 .1 1 -.1 1 -.1 1 .1 1 -.1 1 .2 1 .1 1 -.1 1 -.1 1 -.1 1 .2 1 0 1 -.1 1 -.1 1 .2 1 0 1 .1 1 -.1 1 0 1 0 1 .1 1 -.2 1 .1 1 .1 1 -.1 1 0 1 -.1 1 0 1 0 1 0 1 -.1 1 .2 1 0 1 0 1 -.2 1 .2 1 0 1 -.6 1 .4 1 .3 1 0 1 -.2 1 -.1 1 .2 1 -.1 1 .1 1 -.2 1 0 1 -.7 1 .9 1 -.1 1 .1 1 0 1 -.2 1 0 1 .1 1 -.1 1 .3 1 -.3 1 0 1 .2 1 0 1 -.2 1 0 1 .2 1 -1.1 1 1.2 1 -.3 1 .2 1 -.1 1 .2 1 -.3 1 .1 1 -.7 1 .6 1 .1 1 0 1 -.7 1 .7 1 -.3 1 .5 1 0 1 -.1 1 0 1 -.2 1 .2 1 .1 1 -.2 1 0 1 .2 1 -.1 1 .1 1 -.1 1 0 1 0 1 0 1 .1 1 -.1 1 0 1 -.2 1 0 1 .2 1 -.1 1 .2 1 -.3 1 .1 1 .2 1 -.1 1 -.1 1 -1.1 1 1.2 1 -.1 1 .1 1 -.2 1 .1 1 -.1 1 .2 1 0 1 -.1 1 -.1 1 .2 1 .1 1 0 1 -.3 1 0 1 0 1 .2 1 -.1 1 .2 1 -1.3 1 1.3 1 -.2 1 -.1 1 .2 1 -.2 1 .2 1 -.2 1 .2 1 .1 1 0 1 0 1 -.3 1 .2 1 -.1 1 .2 1 -.3 1 .3 1 -.8 1 .6 1 -.8 1 1 1 0 1 0 1 -.3 1 .2 1 -.1 1 0 1 -.1 1 -.5 1 .8 1 -.1 1 -.2 1 0 1 .2 1 -.1 1 -.1 1 0 1 0 1 .1 1 0 1 -.1 1 0 1 .3 1 -.8 1 .5 1 0 1 0 1 .3 1 -.3 1 .3 1 0 1 0 1 -.1 1 .1 1 -.3 1 .1 1 .2 1 -.1 1 -.8 1 .9 1 -.1 1 -.1 1 .2 1 -.3 1 .3 1 -.3 1 .2 1 0 1 0 1 0 1 -.2 1 0 1 .2 1 -.1 1 .1 1 .1 1 -.2 1 0 1 .1 1 -.1 1 0 1 .2 1 -.3 1 .1 1 .1 1 0 1 -.2 1 .3 1 -.3 1 .1 1 0 1 -.1 1 .3 1 -.2 1 0 1 .1 1 -.1 1 -.1 1 .2 1 -.1 1 .1 1 -.1 1 -.1 1 .2 1 -.2 1 0 1 .3 1 -.3 1 0 1 0 1 .3 1 0 1 -.3H859.5 V522.9 Z" fill="#EAB839" fill-opacity="0.1" stroke="#EAB839" stroke-width="1.2" stroke-linejoin="round" clip-path="url(#c2)"/>
<path d="M41.5 522.9V484.4H45.5l1 .5 1 -.1 1 -.2 1 -.1 1 -.1 1 .2 1 0 1 -1.5 1 1.5 1 .2 1 -.2 1 -.1 1 .1 1 0 1 -.2 1 .1 1 .1 1 -.1 1 -.8 1 1.2 1 -.3 1 .1 1 -.3 1 .3 1 0 1 -.1 1 0 1 .3 1 -.2 1 0 1 -.3 1 .3 1 -.2 1 .1 1 .1 1 -1 1 .8 1 .3 1 .1 1 -.4 1 .2 1 0 1 -.1 1 -.1 1 0 1 .2 1 -.2 1 -1.1 1 1.2 1 .2 1 -.1 1 .2 1 -.2 1 .1 1 -.3 1 .3 1 -.1 1 0 1 -.3 1 .5 1 -1.2 1 1 1 -.2 1 .2 1 .1 1 .1 1 -.1 1 -1.3 1 .1 1 1.3 1 0 1 -.5 1 .4 1 0 1 -.3 1 .4 1 -.3 1 -.1 1 .1 1 -.1 1 .3 1 0 1 -.2 1 -.1 1 .3 1 -.3 1 .2 1 .1 1 .1 1 -.1 1 -.4 1 .2 1 0 1 -1.6 1 1.6 1 -.1 1 .4 1 -.3 1 -.1 1 .1 1 .1 1 -.3 1 .1 1 .1 1 .2 1 .1 1 -1 1 .9 1 -.1 1 0 1 0 1 0 1 -.2 1 -1.3 1 1.4 1 .2 1 -.1 1 .2 1 -.4 1 .2 1 -.9 1 .9 1 -.1 1 -1.2 1 1.1 1 .2 1 .2 1 -.1 1 -.3 1 .2 1 -1.6 1 1.5 1 .2 1 -.4 1 .3 1 .1 1 -.4 1 .1 1 0 1 .3 1 -.2 1 0 1 0 1 -.1 1 -.1 1 .4 1 0 1 .1 1 -.2 1 .1 1 -.3 1 .3 1 -.2 1 .3 1 -.4 1 -.1 1 .4 1 -.1 1 .1 1 -.1 1 0 1 -.1 1 .2 1 -1 1 1.1 1 -.3 1 0 1 .1 1 .1 1 -1 1 .8 1 -.1 1 .1 1 0 1 .2 1 -.4 1 .3 1 -.1 1 .1 1 -.1 1 .2 1 -1.6 1 1.5 1 0 1 .2 1 -.1 1 -.3 1 .2 1 -.2 1 .4 1 -.1 1 -.1 1 -.2 1 0 1 .4 1 -.4 1 0 1 .4 1 -.2 1 -.2 1 .2 1 .1 1 -.1 1 -.1 1 -.1 1 .2 1 0 1 .1 1 0 1 -.1 1 -.8 1 .8 1 .1 1 0 1 -.4 1 -.6 1 .8 1 .1 1 .2 1 -.3 1 .1 1 -.1 1 0 1 -.6 1 .9 1 -.1 1 -.2 1 .2 1 -.2 1 0 1 .3 1 -.4 1 .3 1 -.3 1 .3 1 -.3 1 .3 1 0 1 -.2 1 -.1 1 .3 1 0 1 -.3 1 .3 1 -.3 1 0 1 0 1 0 1 -.1 1 .4 1 .1 1 -.4 1 .1 1 .3 1 -.2 1 -.1 1 -.1 1 .1 1 -.2 1 .2 1 .1 1 0 1 -.2 1 .1 1 -1.1 1 1 1 -1.2 1 1.5 1 -.3 1 -.6 1 .9 1 -.8 1 .9 1 -.5 1 .2 1 -.1 1 .4 1 -.4 1 0 1 -.1 1 .1 1 0 1 .1 1 -.1 1 .1 1 .2 1 -.3 1 .2 1 0 1 .1 1 0 1 -.2 1 0 1 0 1 .1 1 -.2 1 .3 1 -.2 1 .1 1 .2 1 -.4 1 .1 1 0 1 -.6 1 .5 1 -.1 1 .2 1 0 1 .1 1 -.2 1 .2 1 .1 1 -.3 1 .1 1 .1 1 -.3 1 .4 1 -.2 1 0 1 -.2 1 -1.2 1 1.6 1 -.2 1 .2 1 0 1 -.3 1 .2 1 -.1 1 -.1 1 .3 1 0 1 -.1 1 0 1 .2 1 -.2 1 .1 1 -.2 1 .1 1 -.3 1 .1 1 0 1 .3 1 -.3 1 .2 1 -1.3 1 .2 1 1 1 0 1 .2 1 -.1 1 -.1 1 .1 1 -.2 1 .3 1 -.3 1 .1 1 0 1 -.1 1 -.1 1 .1 1 .3 1 -.3 1 .1 1 .2 1 -.3 1 .1 1 .2 1 -.1 1 .1 1 0 1 -.1 1 -.2 1 .3 1 -.3 1 .4 1 -.4 1 .4 1 -1.4 1 1 1 .3 1 -.3 1 0 1 0 1 0 1 .4 1 -.2 1 .1 1 -.9 1 .7 1 -.1 1 -1.3 1 1.6 1 -.1 1 .1 1 .1 1 -.1 1 -.1 1 -.2 1 0 1 .2 1 -.1 1 .2 1 0 1 .1 1 -.4 1 .3 1 -.7 1 .7 1 -.3 1 .1 1 .2 1 -.1 1 0 1 -.2 1 0 1 .1 1 -.2 1 .1 1 .3 1 -.2 1 .1 1 .1 1 -.2 1 -.2 1 -.3 1 -.4 1 -1.5 1 1 1 -.5 1 -.3 1 .1 1 .1 1 .1 1 -.2 1 -1 1 -.3 1 1.3 1 .1 1 -.3 1 .4 1 -1.5 1 1.3 1 .1 1 .3 1 .2 1 .4 1 .3 1 .5 1 .3 1 -1.4 1 1.3 1 .1 1 -.2 1 .2 1 .1 1 -.1 1 .1 1 .2 1 -.5 1 .5 1 -.4 1 .4 1 -.3 1 -.1 1 0 1 .2 1 -.1 1 -.2 1 .5 1 -.3 1 -1 1 1.2 1 0 1 .1 1 -.4 1 .3 1 -.3 1 0 1 .2 1 -.1 1 -.1 1 0 1 0 1 0 1 .1 1 .1 1 .1 1 -.1 1 -.2 1 .4 1 -.3 1 -.1 1 .3 1 0 1 -.1 1 -.2 1 .1 1 0 1 .2 1 -.4 1 .4 1 0 1 -.1 1 .2 1 -.5 1 .3 1 .1 1 0 1 -.3 1 0 1 .1 1 .1 1 -.1 1 .1 1 -.1 1 .2 1 -.4 1 .1 1 .3 1 -.3 1 .1 1 0 1 .3 1 0 1 0 1 -.3 1 -.1 1 0 1 0 1 .2 1 -.1 1 -.1 1 -1.3 1 .8 1 .8 1 -.1 1 -.1 1 0 1 .1 1 -.2 1 .3 1 -.1 1 .2 1 -.2 1 -1 1 .7 1 .5 1 -.3 1 -.1 1 .3 1 -.2 1 -.6 1 .8 1 -.2 1 .2 1 -.1 1 -.1 1 0 1 -.1 1 .4 1 -.2 1 -.2 1 .4 1 -1 1 .7 1 -1.5 1 .3 1 1.3 1 -.1 1 .3 1 -.5 1 -.8 1 1.3 1 -.1 1 -.1 1 -.2 1 .4 1 -.4 1 0 1 0 1 0 1 0 1 .1 1 0 1 -.2 1 .1 1 .2 1 -.1 1 .1 1 0 1 .1 1 -.2 1 -.1 1 .2 1 -1.2 1 1.3 1 -1.7 1 1.6 1 .1 1 0 1 -.2 1 .1 1 0 1 0 1 -.1 1 .1 1 -.2 1 .1 1 .3 1 -.5 1 .2 1 .2 1 -.1 1 .1 1 -.2 1 -1.1 1 1 1 -.1 1 .3 1 -.9 1 .9 1 .1 1 0 1 -.2 1 0 1 0 1 .1 1 .2 1 -.4 1 0 1 0 1 .2 1 -.1 1 .3 1 0 1 -.4 1 .1 1 0 1 0 1 -.1 1 -.1 1 -.6 1 .7 1 0 1 .1 1 -.2 1 .4 1 .1 1 -.4 1 .3 1 0 1 -.3 1 .1 1 -.1 1 0 1 0 1 .2 1 -.1 1 0 1 0 1 .1 1 -.2 1 .2 1 -.2 1 .1 1 -.1 1 0 1 0 1 -.6 1 .7 1 .2 1 -.3 1 0 1 .1 1 .3 1 -.3 1 0 1 .3 1 -.5 1 .3 1 .1 1 0 1 0 1 -.1 1 .2 1 0 1 0 1 -.2 1 .1 1 -.1 1 -.2 1 .1 1 -.1 1 0 1 .4 1 -.4 1 .2 1 -1.4 1 1.3 1 0 1 0 1 .2 1 -.2 1 0 1 .2 1 .1 1 -.1 1 0 1 -.2 1 -1.4 1 1.4 1 -.1 1 0 1 0 1 -.1 1 .4 1 -.4 1 .2 1 .3 1 0 1 -.2 1 -.1 1 -.1 1 -1 1 .9 1 .1 1 .3 1 -.3 1 .1 1 .3 1 -.4 1 0 1 0 1 .2 1 .1 1 -1.8 1 1.8 1 -1.2 1 1.2 1 -.3 1 .2 1 .2 1 -.2 1 -.2 1 .3 1 -.1 1 -.3 1 .3 1 -.1 1 -.4 1 .3 1 .1 1 .3 1 -.3 1 -1.4 1 1.3 1 0 1 .3 1 .1 1 -.5 1 -.8 1 1.3 1 -.1 1 -.2 1 .2 1 -.1 1 -.1 1 0 1 -.7 1 .7 1 .2 1 0 1 -.2 1 -.9 1 .9 1 -.1 1 .1 1 .1 1 -.2 1 .4 1 -.4 1 .1 1 -.1 1 .3 1 -.3 1 .4 1 -.1 1 -.4 1 .1 1 0 1 .2 1 -.2 1 -.4 1 .7 1 0 1 -.2 1 0 1 .2 1 -.2 1 -1.4 1 1.6 1 0 1 -.3 1 .1 1 0 1 .2 1 0 1 -.3 1 .2 1 -.2H859.5 V522.9 Z" fill="#6ED0E0" fill-opacity="0.1" stroke="#6ED0E0" stroke-width="1.2" stroke-linejoin="round" clip-path="url(#c2)"/>
<path d="M41.5 522.9V475.5H45.5l1 0 1 .1 1 0 1 0 1 0 1 0 1 -.1 1 .1 1 -.4 1 .4 1 0 1 0 1 0 1 -.1 1 .1 1 -.1 1 .1 1 0 1 0 1 0 1 -.2 1 .2 1 0 1 0 1 -.1 1 .1 1 -.1 1 0 1 .1 1 0 1 0 1 0 1 0 1 -.1 1 0 1 .1 1 -.1 1 0 1 .1 1 0 1 -.1 1 .1 1 0 1 0 1 0 1 -.1 1 .1 1 -.1 1 0 1 0 1 0 1 .1 1 -.1 1 .1 1 0 1 0 1 -.1 1 0 1 .1 1 0 1 0 1 -.4 1 .3 1 0 1 0 1 .1 1 0 1 0 1 0 1 0 1 -.1 1 0 1 .1 1 -.1 1 .1 1 0 1 -.1 1 .1 1 -.1 1 .1 1 0 1 0 1 -.1 1 .1 1 0 1 0 1 0 1 0 1 -.5 1 .5 1 0 1 0 1 0 1 0 1 -.1 1 .1 1 -.1 1 .1 1 0 1 0 1 0 1 -.1 1 .1 1 0 1 -.1 1 .1 1 0 1 -.1 1 .1 1 -.1 1 .1 1 -.1 1 .1 1 -.1 1 .1 1 -.1 1 .1 1 -.3 1 .3 1 0 1 0 1 -.1 1 .1 1 0 1 0 1 0 1 -.1 1 0 1 .1 1 0 1 -.3 1 .2 1 0 1 .1 1 -.4 1 .4 1 -.3 1 .3 1 0 1 -.1 1 .1 1 0 1 0 1 0 1 -.1 1 -.4 1 .5 1 0 1 -.1 1 .1 1 -.1 1 0 1 .1 1 -.1 1 0 1 .1 1 -.1 1 0 1 0 1 .1 1 0 1 0 1 0 1 0 1 -.1 1 .1 1 -.1 1 0 1 .1 1 -.1 1 0 1 .1 1 0 1 0 1 -.1 1 .1 1 -.1 1 .1 1 -.1 1 .1 1 -.1 1 0 1 .1 1 -.1 1 0 1 .1 1 0 1 -.1 1 .1 1 0 1 0 1 0 1 0 1 -.1 1 0 1 .1 1 -.1 1 .1 1 0 1 0 1 0 1 0 1 -.1 1 0 1 0 1 0 1 .1 1 -.1 1 .1 1 -.1 1 0 1 0 1 .1 1 0 1 -.1 1 .1 1 -.1 1 0 1 .1 1 -.3 1 .3 1 0 1 -.1 1 0 1 .1 1 0 1 -.1 1 0 1 .1 1 -.1 1 0 1 0 1 0 1 0 1 0 1 .1 1 -.4 1 .4 1 -.2 1 .2 1 -.1 1 .1 1 0 1 -.1 1 0 1 0 1 0 1 .1 1 -.1 1 0 1 0 1 -.3 1 .3 1 0 1 .1 1 -.1 1 .1 1 0 1 -.1 1 0 1 .1 1 0 1 0 1 0 1 -.3 1 .2 1 .1 1 0 1 -.1 1 .1 1 0 1 -.4 1 .4 1 0 1 -.4 1 .4 1 -.1 1 0 1 0 1 .1 1 0 1 0 1 -.1 1 .1 1 -.3 1 -.1 1 .3 1 .1 1 0 1 0 1 -.1 1 0 1 0 1 .1 1 -.1 1 0 1 0 1 .1 1 0 1 -.5 1 .5 1 -.1 1 .1 1 0 1 0 1 0 1 0 1 0 1 -.1 1 .1 1 0 1 0 1 -.1 1 .1 1 -.1 1 .1 1 -.1 1 0 1 -.2 1 .3 1 0 1 0 1 0 1 -.1 1 0 1 0 1 .1 1 0 1 -.1 1 .1 1 -.1 1 0 1 -.3 1 .4 1 0 1 -.4 1 .3 1 .1 1 0 1 0 1 -.1 1 .1 1 -.1 1 .1 1 0 1 -.1 1 0 1 .1 1 0 1 0 1 -.1 1 .1 1 -.2 1 .1 1 0 1 .1 1 0 1 -.1 1 .1 1 0 1 0 1 -.1 1 0 1 .1 1 0 1 -.1 1 -.3 1 .3 1 0 1 0 1 -.2 1 -.1 1 .4 1 -.1 1 .1 1 0 1 0 1 -.1 1 .1 1 0 1 -.1 1 .1 1 -.1 1 .1 1 -.1 1 .1 1 -.1 1 .1 1 0 1 -.1 1 0 1 .1 1 0 1 0 1 0 1 -.1 1 .1 1 -.1 1 0 1 .1 1 -.1 1 .1 1 -.2 1 .2 1 0 1 0 1 0 1 -.2 1 .2 1 -.1 1 0 1 0 1 .1 1 -.1 1 0 1 0 1 .1 1 0 1 0 1 0 1 -.2 1 .2 1 -.3 1 .3 1 0 1 0 1 -.1 1 0 1 .1 1 0 1 -.3 1 .2 1 .1 1 0 1 0 1 0 1 0 1 0 1 -.1 1 .1 1 0 1 0 1 0 1 -.1 1 .1 1 0 1 0 1 -.4 1 .4 1 0 1 -.1 1 .1 1 0 1 -.1 1 0 1 0 1 .1 1 -.1 1 -.1 1 .1 1 .1 1 -.1 1 .1 1 0 1 0 1 0 1 -.1 1 .1 1 0 1 0 1 -.1 1 .1 1 0 1 0 1 -.1 1 .1 1 0 1 0 1 0 1 0 1 -.3 1 .3 1 0 1 0 1 0 1 -.1 1 -.2 1 .3 1 -.1 1 .1 1 -.1 1 .1 1 0 1 -.1 1 .1 1 0 1 -.3 1 .2 1 .1 1 -.1 1 .1 1 0 1 0 1 0 1 0 1 0 1 0 1 -.1 1 0 1 .1 1 -.1 1 .1 1 -.1 1 .1 1 0 1 0 1 -.1 1 .1 1 -.1 1 -.3 1 .4 1 -.1 1 .1 1 0 1 -.1 1 .1 1 0 1 0 1 0 1 0 1 0 1 0 1 -.1 1 .1 1 0 1 0 1 -.1 1 0 1 .1 1 -.1 1 .1 1 -.5 1 .5 1 -.1 1 0 1 0 1 0 1 0 1 -.1 1 .1 1 .1 1 0 1 0 1 0 1 0 1 -.1 1 0 1 .1 1 0 1 0 1 -.1 1 0 1 0 1 .1 1 -.1 1 .1 1 0 1 0 1 -.1 1 .1 1 -.5 1 .5 1 0 1 0 1 -.1 1 .1 1 -.1 1 .1 1 0 1 0 1 -.4 1 .4 1 0 1 0 1 0 1 0 1 -.1 1 0 1 .1 1 -.1 1 -.4 1 .4 1 .1 1 0 1 0 1 0 1 -.1 1 0 1 -.2 1 .3 1 -.1 1 .1 1 -.1 1 .1 1 0 1 0 1 0 1 -.1 1 .1 1 -.1 1 .1 1 0 1 -.2 1 .2 1 0 1 0 1 -.1 1 0 1 0 1 .1 1 0 1 -.1 1 .1 1 0 1 0 1 0 1 -.1 1 0 1 .1 1 0 1 0 1 -.4 1 .4 1 0 1 0 1 -.1 1 0 1 .1 1 -.1 1 .1 1 -.1 1 0 1 .1 1 0 1 -.1 1 .1 1 0 1 0 1 -.6 1 .5 1 .1 1 0 1 -.1 1 .1 1 0 1 0 1 0 1 0 1 0 1 0 1 0 1 -.1 1 0 1 .1 1 0 1 0 1 0 1 0 1 0 1 0 1 -.2 1 .2 1 0 1 -.1 1 0 1 .1 1 -.1 1 .1 1 0 1 -.1 1 .1 1 0 1 0 1 0 1 0 1 -.1 1 0 1 .1 1 0 1 -.1 1 0 1 0 1 .1 1 -.1 1 0 1 .1 1 -.1 1 .1 1 0 1 0 1 0 1 0 1 -.1 1 .1 1 0 1 0 1 0 1 0 1 0 1 0 1 0 1 0 1 0 1 0 1 -.1 1 -.2 1 0 1 .2 1 .1 1 0 1 -.4 1 .3 1 .1 1 0 1 0 1 0 1 -.4 1 .4 1 0 1 0 1 -.1 1 .1 1 -.1 1 .1 1 0 1 0 1 -.1 1 .1 1 0 1 0 1 0 1 0 1 0 1 -.1 1 .1 1 0 1 -.4 1 .4 1 -.1 1 .1 1 0 1 -.1 1 .1 1 0 1 0 1 0 1 0 1 0 1 -.1 1 -.2 1 0 1 .3 1 0 1 -.1 1 .1 1 0 1 0 1 0 1 -.4 1 .4 1 0 1 -.4 1 .4 1 0 1 0 1 0 1 0 1 0 1 -.3 1 .2 1 .1 1 0 1 0 1 -.1 1 0 1 0 1 0 1 0 1 .1 1 -.1 1 .1 1 0 1 -.1 1 .1 1 -.1 1 .1 1 -.1 1 -.3 1 .3 1 0 1 .1 1 0 1 -.1 1 .1 1 0 1 0 1 0 1 -.1 1 .1 1 0H859.5 V522.9 Z" fill="#EF843C" fill-opacity="0.1" stroke="#EF843C" stroke-width="1.2" stroke-linejoin="round" clip-path="url(#c2)"/>
<path d="M45.0 680.5H857.0 M45.0 650.5H857.0 M45.0 621.5H857.0 M45.0 593.5H857.0 M45.5 593.0V681.0 M180.5 593.0V681.0 M315.5 593.0V681.0 M450.5 593.0V681.0 M585.5 593.0V681.0 M720.5 593.0V681.0 M856.5 593.0V681.0" stroke="#464648" stroke-width="1" fill="none"/>
<path d="M41.5 682.9V657.5H45.5l1 .1 1 0 1 0 1 -.1 1 0 1 .1 1 0 1 -.1 1 0 1 -.2 1 -1.2 1 -2.6 1 2.7 1 1.3 1 .1 1 -.1 1 .1 1 0 1 -.1 1 0 1 0 1 0 1 0 1 -.6 1 .6 1 .1 1 0 1 -.1 1 0 1 .1 1 0 1 0 1 -.1 1 .1 1 -.1 1 0 1 0 1 .1 1 -.1 1 .1 1 0 1 0 1 0 1 -.1 1 .1 1 .1 1 -.1 1 0 1 0 1 0 1 -.1 1 .1 1 0 1 0 1 0 1 -.1 1 0 1 .1 1 0 1 0 1 -.1 1 .1 1 0 1 -.1 1 .1 1 -.6 1 .5 1 0 1 .1 1 -.1 1 .1 1 -.1 1 .1 1 0 1 0 1 0 1 -.1 1 .1 1 -.1 1 .1 1 0 1 0 1 -.1 1 .1 1 0 1 -.1 1 .1 1 .1 1 -.1 1 0 1 0 1 0 1 0 1 .1 1 -.2 1 0 1 .1 1 -.6 1 .5 1 0 1 .1 1 0 1 0 1 0 1 0 1 -.1 1 0 1 0 1 .1 1 0 1 0 1 -.1 1 0 1 .1 1 .1 1 -.1 1 -.1 1 0 1 0 1 0 1 .1 1 0 1 -.1 1 -.2 1 .2 1 .1 1 -.1 1 0 1 0 1 0 1 0 1 .1 1 -.1 1 .1 1 0 1 -.1 1 0 1 .1 1 0 1 0 1 0 1 -.5 1 .5 1 -.1 1 0 1 0 1 .1 1 .1 1 -.1 1 -.4 1 .4 1 -.4 1 .4 1 0 1 0 1 0 1 0 1 0 1 0 1 -.1 1 0 1 0 1 0 1 .1 1 -.1 1 .1 1 0 1 -.1 1 .1 1 -.1 1 0 1 .1 1 0 1 -.7 1 .6 1 .1 1 -.1 1 -.2 1 .3 1 -.1 1 .1 1 0 1 0 1 0 1 -.1 1 .1 1 -.5 1 .4 1 .1 1 -.1 1 0 1 .1 1 -.1 1 0 1 .1 1 -.1 1 .1 1 0 1 0 1 -.1 1 .1 1 0 1 0 1 .1 1 -.2 1 -.4 1 .4 1 .1 1 .1 1 -.2 1 0 1 0 1 0 1 .1 1 -.1 1 0 1 0 1 .1 1 -.1 1 0 1 .1 1 -.1 1 .1 1 0 1 -.1 1 0 1 0 1 -.4 1 .5 1 -.1 1 0 1 0 1 0 1 0 1 .1 1 -.1 1 0 1 0 1 0 1 .2 1 -.2 1 -.7 1 .7 1 0 1 .2 1 -.2 1 .1 1 -.1 1 .1 1 -.4 1 .4 1 0 1 0 1 -.1 1 .1 1 -.1 1 .1 1 0 1 0 1 -.1 1 -.5 1 .6 1 0 1 0 1 -.1 1 0 1 .1 1 -.4 1 .4 1 0 1 0 1 -.1 1 .1 1 -.1 1 .1 1 -.1 1 .2 1 -.2 1 0 1 .1 1 -.1 1 0 1 0 1 .1 1 -.5 1 .4 1 0 1 .1 1 -.1 1 .1 1 -.1 1 0 1 .1 1 0 1 -.1 1 0 1 0 1 0 1 -.2 1 .3 1 0 1 0 1 -.1 1 0 1 .1 1 0 1 -.1 1 0 1 .1 1 -.1 1 .1 1 -.1 1 -.3 1 .4 1 -.4 1 .4 1 0 1 0 1 0 1 -.1 1 0 1 .1 1 0 1 0 1 .1 1 -.2 1 0 1 0 1 0 1 0 1 .1 1 0 1 -.1 1 -.2 1 .3 1 -.3 1 .3 1 0 1 0 1 -.1 1 0 1 .1 1 .1 1 -.1 1 0 1 0 1 -.1 1 -.2 1 .2 1 .1 1 0 1 -.1 1 .1 1 0 1 0 1 0 1 -.1 1 .1 1 0 1 -.1 1 0 1 0 1 0 1 .1 1 -.1 1 .1 1 0 1 .1 1 -.1 1 -.1 1 -.3 1 .4 1 -.1 1 0 1 .1 1 0 1 0 1 0 1 -.1 1 .1 1 -.1 1 .1 1 0 1 0 1 0 1 -.1 1 .1 1 -.1 1 0 1 .1 1 0 1 -.7 1 .6 1 0 1 .1 1 -.1 1 0 1 -.5 1 .6 1 -.1 1 0 1 .1 1 -.1 1 0 1 0 1 0 1 0 1 .1 1 -.1 1 .1 1 0 1 -.1 1 0 1 0 1 .1 1 0 1 0 1 .1 1 -.1 1 -.1 1 0 1 0 1 .1 1 -.1 1 .1 1 -.7 1 .6 1 -.6 1 .6 1 .1 1 -.1 1 0 1 .1 1 0 1 -.1 1 0 1 0 1 .1 1 0 1 0 1 0 1 -.1 1 .1 1 -.1 1 .1 1 -.1 1 .1 1 0 1 0 1 -.1 1 .1 1 0 1 -.3 1 .2 1 -.6 1 .8 1 -.2 1 0 1 .1 1 -.4 1 -.3 1 .7 1 -.1 1 0 1 0 1 .1 1 -.1 1 0 1 .1 1 -.1 1 .1 1 .1 1 -.2 1 .1 1 -.1 1 .1 1 0 1 -.3 1 .3 1 0 1 0 1 0 1 -.1 1 0 1 0 1 0 1 0 1 0 1 .2 1 -.2 1 .1 1 0 1 0 1 0 1 -.1 1 .1 1 -.1 1 .1 1 -.1 1 .1 1 -.1 1 .1 1 -.1 1 .1 1 -.1 1 .2 1 -.1 1 -.1 1 0 1 .1 1 0 1 -.1 1 0 1 0 1 0 1 0 1 -.2 1 .3 1 -.1 1 0 1 .1 1 -.1 1 0 1 .1 1 .1 1 -.2 1 .1 1 0 1 -.1 1 0 1 -.3 1 .3 1 0 1 0 1 .1 1 0 1 0 1 0 1 0 1 -.1 1 .1 1 -.1 1 0 1 0 1 .1 1 -.1 1 0 1 0 1 0 1 0 1 0 1 .1 1 -.1 1 0 1 0 1 0 1 0 1 0 1 .1 1 0 1 -.1 1 .1 1 0 1 0 1 -.6 1 .5 1 .1 1 -.1 1 .1 1 .1 1 -.2 1 .1 1 0 1 0 1 -.1 1 0 1 .1 1 -.5 1 .4 1 .1 1 -.1 1 .1 1 0 1 -.1 1 0 1 0 1 .1 1 0 1 -.1 1 0 1 0 1 0 1 .1 1 -.1 1 .2 1 -.1 1 -.1 1 .1 1 0 1 0 1 -.1 1 .1 1 0 1 -.1 1 0 1 0 1 0 1 -.5 1 .5 1 .1 1 0 1 -.1 1 .1 1 -.1 1 -.3 1 .4 1 0 1 0 1 0 1 -.1 1 .1 1 0 1 0 1 -.1 1 0 1 .1 1 -.1 1 .1 1 0 1 0 1 .1 1 -.2 1 .1 1 -.1 1 0 1 0 1 .1 1 0 1 0 1 0 1 -.1 1 0 1 0 1 0 1 .1 1 -.1 1 .2 1 -.1 1 -.1 1 .1 1 -.1 1 .1 1 -.1 1 -.4 1 .5 1 0 1 0 1 0 1 0 1 0 1 0 1 0 1 0 1 -.1 1 0 1 0 1 0 1 0 1 0 1 .1 1 -.1 1 .1 1 -.4 1 .4 1 0 1 -.1 1 .1 1 -.1 1 .1 1 0 1 0 1 0 1 0 1 -.1 1 0 1 .1 1 -.1 1 .1 1 -.1 1 .1 1 -.1 1 .2 1 0 1 -.1 1 -.1 1 -.5 1 -1.5 1 1.4 1 .7 1 -.1 1 .1 1 -.1 1 0 1 .1 1 -.1 1 .1 1 -.1 1 0 1 .1 1 -.1 1 0 1 .1 1 0 1 0 1 0 1 -.1 1 .1 1 -.1 1 0 1 .1 1 0 1 -.3 1 .2 1 .1 1 0 1 0 1 -.6 1 .5 1 .1 1 0 1 -.5 1 .4 1 0 1 .1 1 0 1 -.5 1 .5 1 0 1 0 1 -.1 1 0 1 0 1 .1 1 0 1 -.1 1 0 1 .1 1 .1 1 -.1 1 -.1 1 -.4 1 .4 1 .1 1 0 1 -.1 1 0 1 0 1 0 1 .1 1 -.1 1 .1 1 -3 1 -5 1 -5.4 1 .1 1 5.4 1 5.2 1 2.6 1 0 1 0 1 .1 1 -.1 1 0 1 .1 1 0 1 -.1 1 0 1 0 1 0 1 .1 1 -.1 1 -.2 1 .3 1 0 1 0 1 -.1 1 .1 1 -.1 1 0 1 .1 1 -.1 1 .1 1 -.1 1 0 1 0 1 .1 1 0 1 0 1 -.1 1 -.6 1 .7 1 0 1 0 1 0 1 -.1 1 .1 1 0 1 -.1 1 .1 1 -.1H859.5 V682.9 Z" fill="#7EB26D" fill-opacity="0.1" stroke="#7EB26D" stroke-width="1.2" stroke-linejoin="round" clip-path="url(#c3)"/>
<path d="M41.5 682.9V623.5H45.5l1 -.1 1 .1 1 0 1 0 1 -.2 1 .1 1 0 1 -.7 1 .7 1 0 1 -.1 1 .2 1 -.1 1 -.1 1 .2 1 -.9 1 .7 1 .2 1 -.2 1 0 1 .2 1 -.1 1 -.1 1 0 1 0 1 .1 1 0 1 -.1 1 .2 1 -.1 1 .1 1 -.2 1 0 1 .1 1 0 1 0 1 .1 1 0 1 -.1 1 -.1 1 .1 1 0 1 0 1 .1 1 0 1 -.2 1 0 1 0 1 -.4 1 .5 1 .1 1 -.8 1 .8 1 -.2 1 .2 1 -.2 1 0 1 .1 1 0 1 0 1 .1 1 -.2 1 0 1 .2 1 0 1 0 1 -.1 1 -.1 1 .2 1 -.2 1 .2 1 -.2 1 .2 1 -.1 1 -.1 1 .2 1 -.1 1 0 1 .1 1 -.1 1 0 1 0 1 .1 1 -.1 1 -.4 1 .3 1 0 1 .1 1 .1 1 -.2 1 .1 1 0 1 0 1 -.1 1 .1 1 0 1 -.1 1 .2 1 -.2 1 -.8 1 -2.6 1 -7 1 -1.8 1 -.1 1 -.4 1 5.3 1 6.8 1 .1 1 .6 1 0 1 -.1 1 0 1 .2 1 -.8 1 .6 1 .1 1 -.1 1 -.7 1 .8 1 -.1 1 0 1 0 1 .1 1 0 1 0 1 -.1 1 .1 1 0 1 0 1 0 1 -.1 1 .2 1 -.1 1 .1 1 0 1 -.1 1 -2.9 1 -5.7 1 -1.8 1 0 1 -.6 1 4.7 1 5.7 1 .7 1 -.1 1 -.1 1 .1 1 0 1 -.1 1 .1 1 -.1 1 .2 1 0 1 -.1 1 -.1 1 .2 1 0 1 0 1 -.1 1 -.1 1 .1 1 -.1 1 .2 1 0 1 -.2 1 .1 1 -.1 1 0 1 .1 1 .1 1 -.2 1 .2 1 -.1 1 -3.6 1 -4.5 1 .6 1 3.9 1 3.7 1 -.2 1 0 1 .2 1 -.1 1 0 1 -.1 1 .2 1 0 1 -.2 1 .2 1 -.2 1 0 1 .1 1 .1 1 -.1 1 -.1 1 0 1 .1 1 0 1 0 1 .1 1 -.1 1 -.1 1 .2 1 -.1 1 -.1 1 .1 1 .1 1 -.2 1 0 1 -6.3 1 -7.7 1 -.1 1 0 1 .2 1 7.7 1 6.4 1 -.2 1 .2 1 -.1 1 0 1 -.1 1 0 1 0 1 .1 1 0 1 -.1 1 -.5 1 .6 1 0 1 -.1 1 .1 1 .1 1 0 1 -.1 1 .1 1 -.1 1 0 1 -.1 1 -.4 1 .5 1 0 1 .1 1 -.2 1 .1 1 -.1 1 -6.7 1 -8.2 1 -.7 1 .7 1 -.1 1 8.5 1 6.7 1 -.1 1 -.1 1 .1 1 -.5 1 .4 1 .2 1 -.2 1 .1 1 .1 1 0 1 -.2 1 .1 1 -.1 1 .1 1 0 1 0 1 .1 1 -.2 1 0 1 0 1 .2 1 -.1 1 0 1 .1 1 -.1 1 0 1 0 1 0 1 .1 1 -4.2 1 -8.4 1 -2.6 1 -.3 1 .4 1 5.8 1 8.4 1 .7 1 .2 1 -.2 1 .2 1 0 1 -.2 1 .1 1 -.1 1 .2 1 -.1 1 0 1 -.7 1 .7 1 -.1 1 .1 1 -.1 1 .2 1 0 1 -.2 1 .1 1 0 1 0 1 0 1 .1 1 -.2 1 0 1 0 1 .2 1 -.8 1 -8.5 1 -5.7 1 -.2 1 .1 1 2.5 1 7.7 1 4.7 1 0 1 0 1 0 1 .1 1 0 1 -.1 1 0 1 .1 1 -.1 1 0 1 -.4 1 .6 1 -.1 1 -.8 1 .9 1 0 1 -.2 1 .2 1 -.2 1 .1 1 0 1 .1 1 -.2 1 .1 1 .1 1 -.9 1 .8 1 0 1 0 1 -8.4 1 -10.7 1 .1 1 -.2 1 .1 1 10.5 1 8.5 1 0 1 -.6 1 .6 1 0 1 0 1 .1 1 .1 1 -.1 1 -.1 1 .2 1 -.1 1 -.1 1 0 1 .2 1 -.1 1 0 1 .1 1 -.1 1 0 1 0 1 -.1 1 0 1 0 1 .1 1 -.1 1 0 1 .2 1 0 1 -1 1 -8.3 1 -5.8 1 -.1 1 0 1 2.6 1 8.3 1 3.7 1 .5 1 -.1 1 0 1 .1 1 0 1 -.7 1 .6 1 .2 1 -.2 1 .1 1 -.1 1 0 1 -.4 1 -1 1 -.6 1 .1 1 .6 1 1.1 1 .4 1 -.1 1 -.1 1 0 1 0 1 0 1 .2 1 -.1 1 -.1 1 .2 1 -.1 1 -1.3 1 -3.8 1 -1.8 1 0 1 1.9 1 3.9 1 1.1 1 0 1 0 1 0 1 -.1 1 .2 1 -.2 1 -.6 1 -.3 1 1 1 .1 1 -.2 1 -.8 1 1 1 -.1 1 -.1 1 .1 1 0 1 0 1 -.1 1 .2 1 -.2 1 0 1 .2 1 0 1 0 1 -.2 1 .1 1 -.7 1 .6 1 -7.5 1 -8.5 1 0 1 0 1 0 1 9 1 7.1 1 0 1 -.1 1 .2 1 0 1 0 1 -.2 1 -.3 1 .3 1 0 1 -.3 1 -.8 1 -1.2 1 .5 1 .8 1 .8 1 .4 1 -.9 1 -1 1 .1 1 0 1 .8 1 .8 1 0 1 0 1 .1 1 0 1 -.1 1 0 1 0 1 -1 1 -1.8 1 -.7 1 .1 1 .6 1 1.8 1 1 1 .2 1 0 1 -.2 1 .1 1 -.1 1 0 1 0 1 .1 1 0 1 .1 1 -.2 1 .2 1 -.2 1 -.2 1 .2 1 0 1 .1 1 -.1 1 .2 1 0 1 -.1 1 0 1 -.1 1 .1 1 0 1 -.4 1 .5 1 -.1 1 -.1 1 -1.6 1 -1.8 1 .1 1 0 1 1 1 1.6 1 .7 1 .1 1 -.4 1 .5 1 -.2 1 0 1 .1 1 0 1 -.1 1 .1 1 0 1 .1 1 -.1 1 -.1 1 .1 1 0 1 -.1 1 .1 1 .1 1 -.1 1 0 1 -.1 1 .1 1 0 1 -.2 1 -1 1 -.7 1 .1 1 .6 1 -.2 1 -1.6 1 -.6 1 -.5 1 1.2 1 1.8 1 1.1 1 .1 1 -.1 1 -.1 1 .1 1 -.1 1 .1 1 0 1 -.1 1 .2 1 -.1 1 -.1 1 -.7 1 .9 1 -.7 1 .5 1 .2 1 -.1 1 .1 1 -.2 1 .1 1 0 1 -.1 1 0 1 .1 1 -.1 1 .2 1 0 1 -.1 1 -.1 1 -.8 1 -8.5 1 -5.9 1 0 1 0 1 2.5 1 8.7 1 4.2 1 -.2 1 0 1 .2 1 0 1 0 1 -.2 1 .2 1 -.2 1 .1 1 .1 1 -.2 1 .2 1 -.2 1 .1 1 -.1 1 0 1 .1 1 0 1 -.1 1 0 1 .1 1 0 1 .1 1 -.2 1 .1 1 .1 1 -.2 1 0 1 -1.6 1 -8.5 1 -5.1 1 -.1 1 0 1 3.6 1 8.3 1 3.5 1 -.1 1 .2 1 0 1 0 1 -.2 1 0 1 .1 1 .1 1 -.2 1 .2 1 -.2 1 .2 1 0 1 -.2 1 .2 1 -.1 1 -.1 1 0 1 .2 1 -.2 1 .1 1 -.1 1 .1 1 .1 1 -.2 1 .1 1 0 1 -.1 1 -2.4 1 -8.5 1 -4.2 1 -.1 1 .1 1 4.1 1 8.5 1 2.6 1 -.1 1 .1 1 0 1 -.1 1 0 1 -.8 1 1 1 0 1 -.2 1 .2 1 -.1 1 .1 1 0 1 -.9 1 .8 1 0 1 0 1 -.1 1 .2 1 -.6 1 .4 1 -.3 1 .3 1 .1 1 0 1 .1 1 -.1 1 .1 1 -.1 1 -1.9 1 -1.5 1 0 1 -.2 1 1.3 1 2 1 .4 1 0 1 -.2 1 .2 1 0 1 -.1 1 0 1 .1 1 0 1 0 1 -.2 1 .2 1 0 1 0 1 -.2 1 0 1 .1 1 0 1 0 1 0 1 -.1 1 0 1 -.3 1 .5 1 -.2 1 .1 1 .1 1 0 1 -.1 1 -.6 1 -2 1 -.9 1 0 1 0 1 2.1 1 1.5 1 -.2 1 0 1 .2 1 0 1 -.8 1 .6 1 .2 1 -.2 1 0 1 0 1 -.4 1 .5 1 0 1 .1 1 -.1 1 -.1 1 0 1 .1 1 0 1 -.1 1 .2 1 0 1 0 1 -.1 1 -.1 1 .2 1 0 1 -.1 1 -.1 1 -1.9 1 -2 1 -.1 1 .1 1 1.2 1 2.3 1 .6 1 -.8 1 .6 1 0 1 .1 1 -.1 1 .1 1 -.1 1 0 1 .1 1 .1 1 -.2 1 -.6 1 .7 1 -.1 1 0 1 .2 1 -.1 1 -.1 1 .1 1 -.1H859.5 V682.9 Z" fill="#EAB839" fill-opacity="0.1" stroke="#EAB839" stroke-width="1.2" stroke-linejoin="round" clip-path="url(#c3)"/>
<path d="M41.5 682.9V670.8H45.5l1 -.1 1 0 1 .1 1 -.2 1 0 1 -.5 1 0 1 .5 1 0 1 .2 1 -.2 1 -.1 1 .3 1 0 1 -.2 1 0 1 .1 1 -.1 1 .1 1 0 1 -.1 1 .2 1 -.2 1 0 1 .2 1 0 1 -.1 1 -.7 1 .6 1 .1 1 -.1 1 .1 1 0 1 -.1 1 0 1 0 1 0 1 -.2 1 .2 1 0 1 .1 1 -.1 1 .2 1 0 1 0 1 -.2 1 0 1 .1 1 0 1 .1 1 -.8 1 .6 1 0 1 .2 1 -.2 1 .1 1 0 1 .1 1 -.1 1 .1 1 -.2 1 0 1 0 1 .1 1 -.4 1 .3 1 .1 1 -.1 1 .1 1 -.1 1 .2 1 -.2 1 .2 1 -.2 1 .1 1 0 1 0 1 0 1 0 1 -.1 1 0 1 .1 1 0 1 0 1 0 1 0 1 -.1 1 0 1 .2 1 0 1 -.1 1 -.1 1 0 1 .2 1 -.1 1 0 1 .1 1 -.1 1 -.1 1 0 1 .1 1 0 1 -.1 1 0 1 0 1 .2 1 -.1 1 -.1 1 .1 1 -.1 1 0 1 .2 1 -.1 1 -.1 1 0 1 .2 1 -.2 1 0 1 .2 1 -.2 1 .2 1 -.1 1 0 1 0 1 -.1 1 0 1 .1 1 -.1 1 .1 1 0 1 0 1 .1 1 -.1 1 .1 1 -.1 1 0 1 0 1 .1 1 -.2 1 -.3 1 .4 1 0 1 .1 1 -.2 1 .1 1 -.1 1 0 1 0 1 .1 1 0 1 0 1 -.3 1 -.2 1 .5 1 -.3 1 -.3 1 .7 1 0 1 0 1 -.1 1 -.1 1 -.6 1 .6 1 0 1 .1 1 0 1 -.1 1 0 1 0 1 .2 1 -.1 1 -.1 1 .1 1 -.8 1 .9 1 -.2 1 .2 1 -.7 1 .5 1 -.5 1 .6 1 0 1 0 1 0 1 -.8 1 .8 1 0 1 0 1 .1 1 -.1 1 -.6 1 .5 1 .1 1 0 1 -.1 1 .1 1 0 1 0 1 -.1 1 0 1 0 1 0 1 .2 1 0 1 -.2 1 .1 1 -.8 1 .7 1 0 1 .1 1 0 1 0 1 0 1 .1 1 -.2 1 .1 1 0 1 .1 1 0 1 -.2 1 0 1 0 1 0 1 0 1 .1 1 -.1 1 .1 1 -.1 1 0 1 .2 1 -.1 1 -.1 1 .2 1 -.2 1 .1 1 -.1 1 .2 1 -.1 1 .1 1 -.5 1 .4 1 -.1 1 .1 1 -.1 1 .1 1 -.1 1 0 1 0 1 0 1 0 1 .1 1 0 1 0 1 -.1 1 0 1 -.4 1 .6 1 0 1 -.2 1 -.6 1 .2 1 .4 1 .1 1 0 1 -.1 1 0 1 .1 1 0 1 0 1 -.1 1 .2 1 0 1 -.2 1 0 1 .1 1 -.1 1 0 1 0 1 .1 1 -.1 1 0 1 .1 1 0 1 0 1 0 1 -.1 1 0 1 .2 1 0 1 -.1 1 -.1 1 0 1 .2 1 -.2 1 -.3 1 .3 1 0 1 0 1 .2 1 0 1 -.2 1 .1 1 0 1 .1 1 0 1 -.1 1 .1 1 -.1 1 -.1 1 0 1 0 1 0 1 .2 1 -.1 1 0 1 -.1 1 -.5 1 .5 1 .2 1 -.2 1 .2 1 -.8 1 .6 1 .2 1 -.1 1 -.1 1 0 1 .1 1 -.1 1 .1 1 -.1 1 0 1 .1 1 -.1 1 .1 1 -.1 1 .1 1 0 1 -.5 1 0 1 .4 1 .1 1 -.1 1 0 1 .1 1 0 1 0 1 -.1 1 .2 1 -.2 1 -.3 1 .4 1 .1 1 -.2 1 0 1 .1 1 -.1 1 .1 1 0 1 0 1 -.1 1 0 1 .1 1 0 1 0 1 0 1 0 1 0 1 0 1 .1 1 -.1 1 .1 1 -.1 1 .1 1 -.1 1 0 1 -.1 1 0 1 .2 1 -.2 1 .2 1 -.1 1 -.1 1 .1 1 -.1 1 0 1 .2 1 -.1 1 -.1 1 .1 1 -.1 1 -.8 1 .8 1 .2 1 -.1 1 -.1 1 0 1 0 1 0 1 .1 1 0 1 -.1 1 0 1 0 1 0 1 .1 1 -.5 1 .4 1 0 1 .1 1 -.3 1 .3 1 -.1 1 .1 1 -.1 1 -.5 1 .6 1 0 1 -.1 1 .1 1 0 1 0 1 .1 1 -.9 1 .5 1 -.3 1 -.2 1 -.3 1 -.2 1 -.2 1 0 1 .1 1 0 1 0 1 0 1 -.1 1 -.1 1 .2 1 0 1 -.2 1 .1 1 -.3 1 .3 1 .2 1 .3 1 -.6 1 .6 1 .7 1 .2 1 0 1 .2 1 -.2 1 .1 1 .1 1 -.2 1 0 1 .1 1 0 1 0 1 -.1 1 .2 1 -.1 1 -.1 1 .1 1 0 1 .1 1 -.1 1 0 1 -.1 1 .1 1 -.1 1 0 1 .1 1 .1 1 -.1 1 -.1 1 .1 1 0 1 0 1 -.1 1 .2 1 -.2 1 0 1 .1 1 -.1 1 .2 1 -.1 1 -.6 1 .6 1 .1 1 0 1 -.5 1 .4 1 -.1 1 .1 1 .1 1 -.1 1 -.1 1 0 1 0 1 -.5 1 .6 1 .1 1 -.1 1 -.1 1 0 1 .1 1 0 1 -.1 1 .1 1 -.1 1 -.4 1 .6 1 -.1 1 -.8 1 .9 1 -.2 1 .1 1 -.1 1 .1 1 -.1 1 .1 1 -.1 1 .2 1 0 1 -.1 1 -.1 1 .2 1 -.2 1 0 1 0 1 .1 1 -.1 1 .2 1 -.1 1 -.5 1 .5 1 0 1 0 1 0 1 0 1 -.1 1 0 1 .2 1 -.2 1 .2 1 0 1 -.2 1 .1 1 0 1 0 1 .1 1 -.2 1 0 1 .1 1 0 1 .1 1 0 1 -.1 1 0 1 -.1 1 0 1 0 1 -.4 1 .4 1 .2 1 -.1 1 0 1 0 1 -.1 1 .2 1 -.2 1 -.4 1 .4 1 .2 1 -.2 1 0 1 .2 1 -.2 1 0 1 0 1 .2 1 -.1 1 -.1 1 0 1 .1 1 .1 1 -.5 1 .3 1 .2 1 -.1 1 0 1 -.1 1 .2 1 -.2 1 0 1 .1 1 0 1 0 1 -.1 1 .1 1 0 1 0 1 -.1 1 0 1 .1 1 -.1 1 0 1 .2 1 -.1 1 -.1 1 .1 1 -.1 1 0 1 0 1 .2 1 0 1 -.1 1 -.1 1 .2 1 -.1 1 -.1 1 .1 1 -.1 1 .1 1 -.1 1 0 1 .1 1 0 1 0 1 -.1 1 0 1 .1 1 -.1 1 .2 1 -.1 1 0 1 -.1 1 0 1 0 1 -.6 1 .7 1 0 1 -.1 1 .1 1 -.1 1 .1 1 0 1 0 1 -.1 1 .2 1 -.1 1 -.6 1 .7 1 -.1 1 -.7 1 .6 1 0 1 .2 1 -.1 1 .1 1 -.9 1 .8 1 -.1 1 .1 1 -.1 1 0 1 .1 1 .1 1 -.2 1 0 1 0 1 .2 1 -.9 1 .9 1 -.1 1 -.1 1 0 1 .1 1 .1 1 0 1 -.1 1 0 1 -.1 1 0 1 .1 1 0 1 .1 1 -.1 1 .1 1 -.1 1 0 1 .1 1 0 1 -.1 1 -.1 1 .1 1 -.1 1 .1 1 -.1 1 0 1 .1 1 0 1 -.6 1 .5 1 .1 1 0 1 -.1 1 0 1 .1 1 0 1 -.1 1 .1 1 0 1 0 1 -.1 1 0 1 -.5 1 .6 1 0 1 -.1 1 0 1 0 1 0 1 0 1 0 1 0 1 .1 1 0 1 0 1 0 1 .1 1 -.2 1 0 1 0 1 0 1 0 1 .1 1 -.1 1 .1 1 -.7 1 .8 1 -.5 1 .4 1 0 1 -.1 1 .1 1 0 1 0 1 0 1 0 1 -.1 1 .1 1 .1 1 0 1 -.1 1 -.1 1 .2 1 -.2 1 0 1 .2 1 -.1 1 -.1 1 .1 1 .1 1 -.2 1 .1 1 0 1 -.1 1 0 1 -.2 1 .2 1 .1 1 0 1 -.1 1 .1 1 -.1 1 0 1 0 1 -.4 1 .5 1 -.1 1 0 1 0 1 -.7 1 .7 1 .2 1 -.1 1 -.1 1 .1 1 .1 1 -.2 1 .2 1 -.1 1 0 1 0 1 -.1 1 .1 1 0 1 0 1 -.1 1 .2 1 -.2 1 0 1 .2 1 -.2 1 .1 1 -.1 1 .2 1 -.1H859.5 V682.9 Z" fill="#6ED0E0" fill-opacity="0.1" stroke="#6ED0E0" stroke-width="1.2" stroke-linejoin="round" clip-path="url(#c3)"/>
<path d="M41.5 682.9V617H45.5l1 0 1 0 1 0 1 0 1 0 1 0 1 0 1 .1 1 -.4 1 .3 1 0 1 0 1 -.4 1 .5 1 -.1 1 .1 1 0 1 0 1 0 1 0 1 0 1 -.1 1 .1 1 0 1 0 1 0 1 -.1 1 0 1 0 1 .1 1 -.1 1 0 1 -.4 1 .5 1 -.1 1 .1 1 -.3 1 .2 1 0 1 0 1 0 1 -.3 1 .3 1 .1 1 -.1 1 .1 1 -.1 1 0 1 0 1 0 1 0 1 0 1 0 1 .1 1 -.1 1 .1 1 -.1 1 0 1 0 1 -.5 1 .6 1 -.1 1 -.3 1 .3 1 .1 1 -.1 1 0 1 0 1 -.3 1 .3 1 .1 1 0 1 0 1 0 1 0 1 0 1 -.1 1 0 1 -.1 1 .2 1 0 1 -.4 1 .4 1 -.1 1 .1 1 -.1 1 .1 1 -.1 1 .1 1 0 1 -.1 1 0 1 0 1 0 1 .1 1 0 1 0 1 -.1 1 .1 1 -.1 1 .1 1 0 1 0 1 0 1 0 1 0 1 -.1 1 .1 1 -.1 1 0 1 0 1 0 1 .1 1 -.1 1 0 1 .1 1 -.1 1 .1 1 0 1 0 1 0 1 -.1 1 0 1 .1 1 0 1 -.1 1 .1 1 0 1 -.1 1 0 1 0 1 .1 1 0 1 0 1 -.5 1 .5 1 0 1 0 1 0 1 -.2 1 .1 1 0 1 0 1 .1 1 0 1 -.1 1 .1 1 0 1 0 1 -.1 1 -.3 1 .3 1 0 1 0 1 .1 1 0 1 -.1 1 0 1 .1 1 0 1 -.1 1 .1 1 0 1 0 1 0 1 -.1 1 0 1 .1 1 -.1 1 0 1 0 1 0 1 .1 1 0 1 -.1 1 0 1 0 1 0 1 .1 1 -.1 1 .1 1 0 1 -.1 1 -.3 1 .3 1 0 1 .1 1 -.3 1 .3 1 0 1 -.1 1 .1 1 -.1 1 0 1 .1 1 0 1 0 1 0 1 0 1 0 1 -.4 1 .4 1 -.1 1 .1 1 -.1 1 .1 1 -.1 1 0 1 0 1 0 1 0 1 .1 1 0 1 0 1 0 1 -.5 1 .4 1 0 1 .1 1 -.1 1 0 1 0 1 0 1 .1 1 -.1 1 0 1 .1 1 0 1 -.3 1 .3 1 -.1 1 .1 1 -.1 1 .1 1 0 1 -.1 1 0 1 0 1 .1 1 -.1 1 0 1 .1 1 -.1 1 0 1 -.4 1 .4 1 .1 1 -.1 1 .1 1 0 1 -.1 1 .1 1 0 1 -.1 1 0 1 -.3 1 .3 1 .1 1 -.1 1 0 1 0 1 0 1 0 1 .1 1 -.1 1 0 1 -.5 1 .4 1 .2 1 -.1 1 0 1 .1 1 -.1 1 -.3 1 .4 1 0 1 0 1 -.1 1 0 1 0 1 0 1 0 1 -.4 1 .4 1 0 1 .1 1 -.1 1 0 1 .1 1 -.1 1 .1 1 -.1 1 0 1 0 1 .1 1 0 1 0 1 0 1 0 1 -.1 1 .1 1 -.1 1 .1 1 0 1 0 1 0 1 -.1 1 .1 1 -.1 1 -.2 1 .3 1 0 1 0 1 -.1 1 .1 1 -.5 1 .5 1 0 1 -.1 1 0 1 0 1 0 1 0 1 0 1 .1 1 0 1 -.1 1 0 1 0 1 0 1 .1 1 0 1 -.1 1 -.4 1 .4 1 0 1 0 1 .1 1 0 1 0 1 0 1 0 1 0 1 -.1 1 0 1 .1 1 -.1 1 0 1 0 1 -.5 1 .5 1 .1 1 0 1 0 1 -.1 1 .1 1 -.1 1 0 1 0 1 0 1 0 1 .1 1 0 1 -.1 1 0 1 -.2 1 .2 1 0 1 0 1 0 1 .1 1 0 1 -.1 1 .1 1 -.1 1 0 1 -.4 1 .4 1 0 1 .1 1 -.1 1 0 1 0 1 -.2 1 .3 1 0 1 -.1 1 0 1 0 1 0 1 0 1 0 1 .1 1 0 1 -.1 1 .1 1 0 1 -.1 1 .1 1 -.1 1 0 1 0 1 .1 1 -.1 1 .1 1 -.1 1 .1 1 -.6 1 .5 1 0 1 .1 1 -.1 1 -.3 1 .4 1 0 1 0 1 -.1 1 .1 1 -.1 1 .1 1 0 1 0 1 0 1 -.1 1 .1 1 -.1 1 0 1 0 1 0 1 .1 1 -.2 1 -.3 1 -.1 1 -.4 1 -.1 1 0 1 -.3 1 0 1 -.1 1 .4 1 -.2 1 .4 1 0 1 -.1 1 .1 1 -.1 1 0 1 .1 1 0 1 0 1 -.1 1 .2 1 .3 1 .2 1 .2 1 -.2 1 .3 1 -.1 1 0 1 .1 1 0 1 0 1 -.1 1 .1 1 -.5 1 .5 1 -.1 1 .1 1 -.1 1 .1 1 -.1 1 0 1 0 1 -.5 1 .6 1 0 1 -.1 1 0 1 .1 1 0 1 -.1 1 0 1 -.2 1 .2 1 .1 1 0 1 -.1 1 .1 1 -.1 1 0 1 0 1 0 1 0 1 .1 1 -.1 1 .1 1 -.1 1 .1 1 0 1 0 1 0 1 -.1 1 0 1 0 1 .1 1 0 1 -.1 1 .1 1 -.1 1 0 1 0 1 .1 1 -.1 1 .1 1 -.1 1 0 1 .1 1 0 1 0 1 -.1 1 .1 1 -.1 1 0 1 0 1 -.3 1 .3 1 .1 1 -.1 1 0 1 0 1 .1 1 0 1 0 1 -.1 1 0 1 .1 1 0 1 -.1 1 .1 1 -.1 1 .1 1 -.1 1 0 1 0 1 0 1 .1 1 0 1 0 1 -.4 1 .3 1 -.4 1 .1 1 .4 1 0 1 -.4 1 .4 1 0 1 -.1 1 .1 1 -.1 1 .1 1 0 1 -.1 1 .1 1 0 1 0 1 0 1 0 1 -.1 1 .1 1 -.1 1 .1 1 0 1 0 1 -.1 1 .1 1 -.1 1 0 1 .1 1 -.1 1 0 1 -.4 1 .5 1 0 1 0 1 -.4 1 .4 1 0 1 -.1 1 0 1 .1 1 0 1 -.1 1 .1 1 -.1 1 .1 1 -.1 1 0 1 0 1 0 1 0 1 0 1 0 1 0 1 0 1 -.2 1 .2 1 0 1 0 1 .1 1 -.1 1 0 1 0 1 .1 1 -.1 1 -.2 1 .3 1 0 1 -.1 1 .1 1 -.1 1 -.2 1 .2 1 0 1 0 1 .1 1 -.1 1 .1 1 0 1 -.1 1 0 1 .1 1 -.1 1 .1 1 -.1 1 .1 1 -.1 1 .1 1 0 1 -.1 1 0 1 .1 1 -.1 1 .1 1 -.1 1 0 1 .1 1 0 1 -.1 1 .1 1 -.1 1 0 1 0 1 .1 1 -.1 1 0 1 .1 1 -.1 1 .1 1 -.1 1 .1 1 -.1 1 .1 1 -.1 1 0 1 0 1 .1 1 -.1 1 .1 1 -.1 1 .1 1 0 1 0 1 0 1 -.4 1 .3 1 0 1 .1 1 0 1 -.5 1 .5 1 0 1 -.1 1 0 1 .1 1 0 1 -.1 1 0 1 0 1 0 1 0 1 .1 1 0 1 0 1 -.1 1 0 1 .1 1 0 1 0 1 -.1 1 0 1 0 1 0 1 0 1 0 1 0 1 .1 1 -.1 1 .1 1 0 1 -.1 1 .1 1 0 1 0 1 0 1 -.1 1 0 1 0 1 .1 1 -.1 1 .1 1 -.1 1 .1 1 0 1 -.1 1 0 1 .1 1 -.1 1 0 1 0 1 .1 1 -.1 1 0 1 -.4 1 .4 1 .1 1 -.1 1 0 1 0 1 .1 1 -.1 1 -.3 1 .4 1 -.1 1 .1 1 -.1 1 0 1 0 1 .1 1 -.1 1 0 1 0 1 -.3 1 .4 1 -.1 1 0 1 0 1 .1 1 0 1 -.1 1 .1 1 0 1 -.1 1 0 1 0 1 .1 1 -.4 1 .3 1 0 1 .1 1 0 1 -.1 1 0 1 .1 1 0 1 -.1 1 .1 1 -.1 1 .1 1 -.1 1 0 1 .1 1 -.1 1 .1 1 -.3 1 .3 1 0 1 -.4 1 .4 1 0 1 0 1 0 1 -.1 1 .1 1 -.1 1 0 1 0 1 0 1 .1 1 -.1 1 -.4 1 .4 1 0 1 0 1 .1 1 0 1 0 1 -.5 1 .4 1 .1H859.5 V682.9 Z" fill="#EF843C" fill-opacity="0.1" stroke="#EF843C" stroke-width="1.2" stroke-linejoin="round" clip-path="url(#c3)"/>
<path d="M45.0 840.5H857.0 M45.0 817.5H857.0 M45.0 796.5H857.0 M45.0 774.5H857.0 M45.0 753.5H857.0 M45.5 753.0V841.0 M180.5 753.0V841.0 M315.5 753.0V841.0 M450.5 753.0V841.0 M585.5 753.0V841.0 M720.5 753.0V841.0 M856.5 753.0V841.0" stroke="#464648" stroke-width="1" fill="none"/>
<path d="M41.5 842.9V820.3H45.5l1 .1 1 -.2 1 .2 1 -.1 1 .1 1 0 1 -.1 1 -.1 1 .1 1 -.1 1 .1 1 0 1 0 1 .1 1 0 1 0 1 -.1 1 -.1 1 .2 1 0 1 -.1 1 .1 1 0 1 -.1 1 -.1 1 .2 1 0 1 -.1 1 -.2 1 .3 1 -.1 1 0 1 .1 1 -.1 1 0 1 .1 1 -.2 1 .2 1 -.4 1 .3 1 0 1 0 1 .1 1 -.1 1 .1 1 -.1 1 0 1 0 1 0 1 .1 1 -.1 1 0 1 -.6 1 .3 1 .3 1 0 1 -.2 1 .1 1 .2 1 0 1 -.1 1 0 1 0 1 .1 1 -.1 1 .1 1 0 1 -.1 1 0 1 0 1 0 1 0 1 .1 1 0 1 -.6 1 .5 1 0 1 0 1 0 1 .1 1 0 1 -.1 1 -.3 1 .4 1 -.4 1 .3 1 0 1 .1 1 0 1 0 1 -.1 1 .1 1 -.1 1 0 1 0 1 -.2 1 .3 1 -.1 1 .1 1 0 1 -.1 1 0 1 0 1 0 1 0 1 0 1 .1 1 -.1 1 .1 1 -.1 1 -.4 1 .4 1 0 1 0 1 0 1 .1 1 -.1 1 0 1 .1 1 -.1 1 .1 1 -.1 1 0 1 0 1 0 1 0 1 0 1 .1 1 -.1 1 0 1 .1 1 -.5 1 .5 1 0 1 -.1 1 0 1 .1 1 -.4 1 .4 1 0 1 -.1 1 .1 1 -.1 1 0 1 0 1 .1 1 0 1 -.1 1 0 1 0 1 .1 1 0 1 -.1 1 0 1 .1 1 -.1 1 .1 1 0 1 -.1 1 0 1 .1 1 -.1 1 0 1 .1 1 -.2 1 .2 1 0 1 -.2 1 .1 1 .1 1 -.1 1 0 1 0 1 0 1 .1 1 -.1 1 0 1 .1 1 -.1 1 .1 1 0 1 -.1 1 0 1 0 1 .1 1 0 1 -.1 1 0 1 0 1 .1 1 0 1 -.1 1 .1 1 -.1 1 0 1 0 1 -38.5 1 38.5 1 0 1 .1 1 0 1 -.1 1 .1 1 -.1 1 .1 1 -.1 1 0 1 0 1 0 1 .1 1 0 1 -.1 1 .1 1 0 1 0 1 0 1 0 1 0 1 -.1 1 0 1 0 1 0 1 0 1 0 1 .1 1 0 1 0 1 -.1 1 .1 1 -.1 1 .1 1 -.1 1 0 1 0 1 0 1 .1 1 -.2 1 .1 1 0 1 -.4 1 .4 1 .1 1 -.2 1 .2 1 -.2 1 .1 1 0 1 0 1 0 1 -.1 1 .1 1 .1 1 -.6 1 .6 1 0 1 0 1 -.1 1 0 1 0 1 0 1 0 1 0 1 0 1 .1 1 -.2 1 .1 1 -.1 1 .1 1 0 1 .1 1 -.1 1 0 1 0 1 -.1 1 .1 1 0 1 0 1 0 1 0 1 -.4 1 .4 1 0 1 0 1 0 1 .1 1 -.1 1 0 1 .1 1 -.5 1 .4 1 .1 1 -.1 1 0 1 0 1 0 1 .1 1 0 1 -.1 1 0 1 .1 1 -.1 1 0 1 .1 1 -.1 1 -.1 1 0 1 .1 1 0 1 0 1 .1 1 0 1 -.1 1 0 1 0 1 0 1 0 1 0 1 0 1 0 1 .1 1 -.1 1 .1 1 -.4 1 .2 1 .1 1 0 1 0 1 0 1 0 1 0 1 0 1 0 1 0 1 .1 1 -.5 1 .1 1 .4 1 -.2 1 .1 1 .1 1 0 1 -.1 1 0 1 .1 1 -.1 1 .1 1 -.1 1 0 1 .1 1 -.1 1 .1 1 0 1 -.6 1 .5 1 .1 1 -.1 1 .1 1 0 1 0 1 0 1 0 1 -.1 1 -.3 1 .4 1 -.1 1 .1 1 0 1 -.1 1 -.1 1 .1 1 .1 1 -.1 1 .1 1 -.1 1 .1 1 -.1 1 .1 1 -.1 1 0 1 0 1 .1 1 -.1 1 0 1 0 1 0 1 .1 1 -.1 1 -.4 1 .3 1 .1 1 0 1 .1 1 -.1 1 .1 1 -.1 1 0 1 .1 1 -.1 1 0 1 0 1 -.1 1 .2 1 0 1 0 1 -.1 1 -.1 1 .1 1 -.2 1 -.2 1 .3 1 .1 1 0 1 .1 1 0 1 0 1 -.1 1 0 1 0 1 -.5 1 0 1 .6 1 0 1 0 1 -.1 1 .1 1 -.5 1 .5 1 -.1 1 0 1 0 1 0 1 .1 1 -.1 1 .1 1 -.1 1 .1 1 -.1 1 -.1 1 .1 1 0 1 .1 1 -.1 1 0 1 .1 1 -.1 1 -.1 1 0 1 .2 1 -.1 1 0 1 0 1 .1 1 0 1 -.1 1 0 1 0 1 -.4 1 .5 1 0 1 0 1 -.1 1 -.3 1 .3 1 .1 1 -.1 1 .1 1 -.1 1 .1 1 -.1 1 0 1 0 1 0 1 0 1 0 1 .1 1 -.3 1 .3 1 -.1 1 -.2 1 .3 1 -.1 1 .1 1 -.1 1 0 1 0 1 .1 1 -.4 1 .4 1 -.1 1 0 1 .1 1 -.1 1 0 1 0 1 0 1 .1 1 -.1 1 .1 1 -.2 1 .2 1 -.1 1 -.2 1 .3 1 0 1 0 1 -.7 1 .6 1 0 1 .1 1 -.4 1 .3 1 -.1 1 .2 1 -.2 1 .1 1 .1 1 0 1 -.1 1 .1 1 -.2 1 0 1 .1 1 .1 1 -.1 1 0 1 .1 1 0 1 -.1 1 0 1 0 1 0 1 0 1 .1 1 -.2 1 .1 1 0 1 0 1 0 1 .1 1 -.2 1 .1 1 .1 1 -.1 1 .1 1 -.1 1 .1 1 0 1 0 1 -.1 1 .1 1 -.1 1 0 1 0 1 0 1 0 1 -.1 1 .2 1 -.1 1 .1 1 -.1 1 -.3 1 .4 1 0 1 0 1 -.2 1 .2 1 0 1 -.1 1 -.1 1 .2 1 0 1 -.1 1 -.5 1 .6 1 0 1 -.5 1 .5 1 -.1 1 -.1 1 .1 1 0 1 .1 1 0 1 -.1 1 -.1 1 .2 1 -.1 1 0 1 0 1 0 1 0 1 0 1 .1 1 -.5 1 .4 1 0 1 .1 1 -.1 1 -.1 1 .1 1 .1 1 -.1 1 0 1 0 1 .1 1 -.1 1 -.5 1 .5 1 0 1 0 1 .1 1 -.1 1 .1 1 -.1 1 -.1 1 .1 1 0 1 0 1 .1 1 -.1 1 .1 1 0 1 0 1 0 1 -.2 1 .1 1 .1 1 0 1 -.2 1 0 1 .1 1 .1 1 0 1 -.2 1 .1 1 0 1 0 1 .1 1 -.1 1 .1 1 -.1 1 0 1 0 1 0 1 .1 1 -.5 1 .5 1 0 1 0 1 -.1 1 .1 1 0 1 -.1 1 .1 1 0 1 -.1 1 .1 1 -.1 1 .1 1 -.1 1 .1 1 -.1 1 .1 1 -.2 1 .1 1 .1 1 -.1 1 0 1 .1 1 0 1 -.1 1 0 1 0 1 .1 1 -.1 1 .1 1 0 1 -.3 1 .2 1 .1 1 0 1 -.1 1 .1 1 -.2 1 .1 1 .1 1 0 1 0 1 0 1 0 1 -.1 1 0 1 0 1 .1 1 -.1 1 .1 1 0 1 0 1 -.1 1 -.1 1 .1 1 0 1 0 1 0 1 .1 1 -.1 1 .1 1 -.1 1 0 1 .1 1 -.1 1 0 1 0 1 0 1 -.5 1 .6 1 0 1 0 1 0 1 0 1 0 1 -.1 1 .1 1 -.1 1 0 1 .1 1 -.1 1 0 1 0 1 0 1 0 1 0 1 .1 1 0 1 -.1 1 .1 1 0 1 0 1 0 1 -.2 1 .2 1 -.1 1 -.1 1 .2 1 0 1 -.1 1 0 1 0 1 0 1 .1 1 -.1 1 .1 1 -.4 1 .4 1 -.1 1 -.1 1 .2 1 0 1 -.1 1 -.1 1 .2 1 -.1 1 0 1 .1 1 -.1 1 .1 1 0 1 0 1 0 1 0 1 -.1 1 0 1 .1 1 0 1 -.1 1 .1 1 -.1 1 -.1 1 .1 1 0 1 -.1 1 .1 1 -.1 1 .2 1 -.1 1 0 1 .1 1 -.1 1 0 1 -.3 1 .3 1 .1 1 -.2 1 .1 1 0 1 0 1 0 1 0 1 0 1 0 1 -.4 1 .3 1 .1 1 0 1 0 1 0 1 0 1 .1 1 -.1 1 .1H859.5 V842.9 Z" fill="#7EB26D" fill-opacity="0.1" stroke="#7EB26D" stroke-width="1.2" stroke-linejoin="round" clip-path="url(#c4)"/>
<path d="M41.5 842.9V837H45.5l1 0 1 0 1 0 1 -.1 1 0 1 0 1 .1 1 -.1 1 .1 1 .1 1 0 1 -.2 1 0 1 .1 1 0 1 -.1 1 .2 1 -.1 1 0 1 -.1 1 .1 1 0 1 0 1 .1 1 -.1 1 0 1 0 1 0 1 -.2 1 .1 1 0 1 .1 1 -.1 1 0 1 .1 1 -.1 1 .1 1 -.1 1 .1 1 0 1 -.1 1 0 1 0 1 0 1 0 1 -.1 1 -.1 1 .3 1 0 1 -.1 1 0 1 0 1 .1 1 -.1 1 .2 1 -.2 1 .1 1 0 1 -.1 1 .1 1 0 1 -.1 1 .1 1 -.1 1 0 1 .1 1 0 1 -.1 1 .1 1 0 1 0 1 0 1 -.6 1 .5 1 .2 1 -.1 1 0 1 0 1 0 1 0 1 0 1 .1 1 -.6 1 .4 1 .1 1 0 1 0 1 -.1 1 .1 1 -.1 1 0 1 0 1 -.4 1 .4 1 -3.7 1 -5.1 1 -.2 1 -.1 1 .2 1 -.2 1 0 1 0 1 0 1 0 1 0 1 2.3 1 5.1 1 1.8 1 -.1 1 .1 1 0 1 -.1 1 .1 1 -.1 1 0 1 .1 1 0 1 0 1 0 1 -.1 1 .1 1 0 1 .1 1 -.1 1 0 1 0 1 .1 1 -.1 1 0 1 .1 1 -.2 1 .1 1 -.1 1 .1 1 -.1 1 0 1 0 1 0 1 .2 1 -.1 1 0 1 .1 1 -.1 1 -.1 1 0 1 .1 1 0 1 -.1 1 .1 1 -.1 1 .1 1 0 1 0 1 0 1 -.1 1 0 1 0 1 0 1 0 1 -.3 1 .5 1 -.2 1 .1 1 -.1 1 0 1 .1 1 -.1 1 .1 1 0 1 .1 1 -.1 1 0 1 0 1 0 1 0 1 0 1 -.1 1 0 1 .1 1 0 1 0 1 -.1 1 0 1 0 1 .1 1 0 1 0 1 0 1 0 1 .1 1 -.1 1 -.1 1 .1 1 -.1 1 .1 1 -.1 1 -37.9 1 37.9 1 .2 1 -.2 1 .2 1 -.1 1 0 1 -.1 1 .1 1 0 1 -.1 1 -.3 1 .3 1 -.3 1 .4 1 0 1 0 1 -.4 1 .4 1 -.1 1 .2 1 -.2 1 0 1 .1 1 .1 1 -.1 1 0 1 0 1 -.1 1 0 1 0 1 -.2 1 .3 1 -.1 1 .1 1 0 1 0 1 0 1 -.2 1 .2 1 -.1 1 .1 1 .1 1 -.2 1 0 1 .1 1 -.1 1 0 1 .1 1 -.1 1 -.1 1 .2 1 0 1 0 1 0 1 .1 1 -.2 1 .1 1 -.1 1 0 1 0 1 .2 1 -.2 1 0 1 0 1 .1 1 .1 1 0 1 -.2 1 0 1 .1 1 -.1 1 .1 1 -.1 1 0 1 0 1 0 1 0 1 0 1 0 1 0 1 0 1 .1 1 -.1 1 0 1 0 1 0 1 -.3 1 .3 1 .1 1 .1 1 0 1 0 1 -.2 1 0 1 .1 1 .1 1 0 1 -.1 1 -.1 1 .1 1 0 1 -.1 1 0 1 .1 1 0 1 -.1 1 .1 1 -.3 1 .4 1 -.1 1 0 1 0 1 0 1 0 1 0 1 -.1 1 .1 1 -.3 1 .3 1 0 1 -.1 1 0 1 0 1 .1 1 -.1 1 0 1 .1 1 -.1 1 0 1 .1 1 0 1 0 1 -.1 1 .2 1 -.1 1 -.3 1 .3 1 0 1 -.4 1 .3 1 .1 1 0 1 -.1 1 0 1 0 1 .2 1 -.1 1 -.1 1 -.3 1 .3 1 0 1 .1 1 0 1 -.1 1 0 1 .1 1 -.1 1 .1 1 -.1 1 .1 1 .1 1 -.1 1 -.1 1 .1 1 -.1 1 0 1 .1 1 0 1 -.1 1 .1 1 -.1 1 .1 1 0 1 -.1 1 .1 1 0 1 -.1 1 .1 1 0 1 0 1 0 1 -.6 1 .7 1 0 1 -.1 1 .1 1 -.2 1 .1 1 -.1 1 .1 1 -.1 1 0 1 .1 1 -.1 1 .1 1 -.6 1 .6 1 -.1 1 .2 1 -.1 1 -.1 1 .1 1 0 1 .1 1 -.4 1 .2 1 -.2 1 .3 1 0 1 0 1 0 1 -.1 1 .1 1 0 1 0 1 0 1 -.1 1 0 1 .2 1 -.1 1 .1 1 -.1 1 -.8 1 .1 1 .7 1 0 1 -.4 1 .4 1 -.1 1 .1 1 0 1 0 1 0 1 0 1 0 1 -.1 1 0 1 .1 1 0 1 0 1 0 1 -.7 1 .6 1 .1 1 0 1 -.1 1 .2 1 -.1 1 0 1 0 1 -.1 1 .1 1 0 1 -.5 1 .6 1 -.1 1 .1 1 -.1 1 0 1 -.1 1 .1 1 0 1 0 1 0 1 0 1 0 1 -.4 1 -.2 1 .6 1 .1 1 -.1 1 0 1 .1 1 -.1 1 0 1 0 1 0 1 -.1 1 0 1 .1 1 0 1 -.1 1 .1 1 0 1 0 1 0 1 -.6 1 .6 1 0 1 0 1 0 1 -.1 1 -.5 1 .6 1 -.1 1 .2 1 -.2 1 .1 1 -.1 1 0 1 -.2 1 .3 1 -.1 1 .1 1 -.4 1 .4 1 0 1 0 1 0 1 .1 1 -.1 1 0 1 0 1 0 1 -.1 1 0 1 .1 1 -.1 1 0 1 0 1 .1 1 -.1 1 .1 1 .1 1 -.1 1 .1 1 -.5 1 .3 1 .2 1 -.1 1 -.1 1 .1 1 0 1 0 1 0 1 0 1 -.1 1 .2 1 -.7 1 .6 1 0 1 0 1 0 1 0 1 0 1 0 1 -.1 1 0 1 .1 1 -.1 1 -.4 1 .4 1 -3.7 1 0 1 3.8 1 .1 1 -.1 1 0 1 -.1 1 .1 1 0 1 -.1 1 .1 1 0 1 -.1 1 .2 1 -.2 1 .1 1 0 1 0 1 -.4 1 .4 1 0 1 -.1 1 0 1 .1 1 -.1 1 .1 1 -.4 1 .4 1 0 1 0 1 0 1 0 1 0 1 .1 1 -.4 1 .3 1 0 1 0 1 0 1 0 1 0 1 0 1 0 1 -.1 1 0 1 0 1 .1 1 .1 1 -.1 1 0 1 0 1 -.1 1 .1 1 0 1 0 1 0 1 0 1 -.1 1 .1 1 .1 1 -.1 1 -.1 1 .1 1 0 1 0 1 .1 1 -.1 1 0 1 -.1 1 .1 1 0 1 -.1 1 .1 1 .1 1 0 1 -.1 1 -.1 1 .1 1 .1 1 -.1 1 0 1 -.1 1 .1 1 .1 1 0 1 -.2 1 .1 1 -.1 1 0 1 0 1 .1 1 0 1 -.1 1 0 1 .2 1 -.2 1 .2 1 -.2 1 .1 1 -.1 1 .1 1 0 1 0 1 0 1 0 1 0 1 0 1 0 1 0 1 0 1 -.1 1 .2 1 -.2 1 0 1 .1 1 -.1 1 .1 1 0 1 .1 1 -.1 1 -.1 1 .1 1 .1 1 -.1 1 0 1 .1 1 -.2 1 .2 1 -.2 1 .1 1 -.1 1 0 1 .1 1 0 1 0 1 0 1 0 1 0 1 -.1 1 .1 1 -.1 1 0 1 0 1 0 1 -.3 1 .2 1 .2 1 0 1 .1 1 -.1 1 -.4 1 .5 1 -.1 1 .1 1 0 1 -.2 1 .2 1 -.2 1 -.2 1 .4 1 -.1 1 -.1 1 0 1 .2 1 -.2 1 0 1 0 1 0 1 .1 1 0 1 -.1 1 .1 1 0 1 0 1 .1 1 -.1 1 -.1 1 0 1 0 1 .2 1 -.1 1 0 1 .1 1 -.2 1 .1 1 0 1 0 1 0 1 .1 1 -.2 1 0 1 .1 1 0 1 0 1 0 1 -.1 1 .1 1 0 1 -.1 1 0 1 .1 1 0 1 -.1 1 .1 1 -.1 1 .1 1 0 1 0 1 -.1 1 .1 1 -.1 1 0 1 .1 1 -.3 1 .2 1 .1 1 0 1 -.1 1 .2 1 -.1 1 0 1 -.1 1 0 1 0 1 .1 1 -.1 1 .2 1 -.2 1 0 1 .2 1 -.1 1 0 1 -.1 1 .1 1 0 1 0 1 0 1 0 1 -.1 1 .1 1 .1 1 -.1 1 -.1 1 .1 1 0 1 0 1 0 1 -.1 1 .1 1 0 1 0 1 -.1 1 .1 1 0 1 0 1 0 1 -.1 1 .1 1 0 1 0 1 -.1H859.5 V842.9 Z" fill="#EAB839" fill-opacity="0.1" stroke="#EAB839" stroke-width="1.2" stroke-linejoin="round" clip-path="url(#c4)"/>
<path d="M41.5 842.9V796.8H45.5l1 .4 1 0 1 .1 1 0 1 -.4 1 .3 1 0 1 -.6 1 .6 1 .1 1 -.1 1 .1 1 -.1 1 -.1 1 0 1 .1 1 0 1 0 1 .1 1 -.1 1 0 1 0 1 0 1 0 1 -.1 1 .1 1 -.1 1 .1 1 0 1 0 1 -.1 1 .2 1 -.1 1 -.1 1 .1 1 0 1 0 1 0 1 0 1 -.1 1 .1 1 0 1 .1 1 -.1 1 -.4 1 .3 1 0 1 .2 1 -.1 1 0 1 .1 1 -.1 1 -.1 1 .1 1 -.1 1 .1 1 0 1 -.1 1 0 1 .2 1 0 1 -.2 1 -.4 1 .4 1 -.4 1 .4 1 .1 1 0 1 0 1 0 1 0 1 -.1 1 .1 1 .1 1 -.1 1 0 1 .1 1 -.1 1 -.1 1 .1 1 0 1 -.1 1 .1 1 -.1 1 .2 1 -.1 1 -.1 1 0 1 .1 1 -.1 1 .2 1 -.1 1 0 1 0 1 -.6 1 .5 1 0 1 .2 1 -.1 1 .1 1 -2.8 1 -5.1 1 -1.5 1 -.1 1 0 1 3.7 1 5.2 1 0 1 .5 1 .1 1 0 1 -.1 1 0 1 -.1 1 .1 1 0 1 0 1 0 1 0 1 0 1 0 1 .1 1 -.2 1 .2 1 -.1 1 -.1 1 .1 1 -.1 1 .1 1 -.6 1 .6 1 -.1 1 .2 1 -.1 1 0 1 0 1 -2.1 1 -4.5 1 -1.1 1 -.6 1 .5 1 3 1 4.1 1 .6 1 .1 1 0 1 .1 1 -.2 1 0 1 .1 1 .1 1 -.2 1 .1 1 -.1 1 0 1 -.5 1 .6 1 -.1 1 0 1 0 1 0 1 .1 1 0 1 -.1 1 .2 1 -.1 1 -.1 1 .1 1 -.1 1 0 1 0 1 0 1 .2 1 -3 1 -2.8 1 .1 1 2.8 1 2.9 1 -.1 1 -.1 1 -.4 1 .5 1 -.1 1 .1 1 0 1 0 1 0 1 0 1 0 1 -.4 1 .4 1 0 1 0 1 0 1 -.1 1 .2 1 -.1 1 -.1 1 .1 1 -.3 1 .3 1 .1 1 -.1 1 0 1 0 1 .1 1 -.2 1 .1 1 -4.8 1 -5.7 1 -.2 1 0 1 0 1 5.9 1 4.8 1 0 1 0 1 -.1 1 .1 1 0 1 0 1 0 1 0 1 0 1 .1 1 -.1 1 .1 1 -.1 1 0 1 -.1 1 .1 1 -.1 1 .2 1 -.2 1 0 1 0 1 .1 1 0 1 .1 1 -.1 1 .1 1 0 1 0 1 -.6 1 -4.4 1 -6.3 1 0 1 -.1 1 0 1 6.3 1 5.1 1 -.2 1 .1 1 0 1 -.1 1 .2 1 0 1 -.1 1 0 1 .1 1 -.2 1 0 1 -.2 1 .3 1 0 1 .1 1 -.1 1 -.1 1 .1 1 -.1 1 .1 1 0 1 0 1 -.1 1 0 1 0 1 .1 1 -.1 1 0 1 .1 1 -3.2 1 -6.2 1 -1.8 1 0 1 -.1 1 4.5 1 6.2 1 .5 1 0 1 -.5 1 .7 1 -.1 1 0 1 0 1 .1 1 -.1 1 0 1 0 1 -.1 1 .1 1 0 1 .1 1 -.1 1 .1 1 -.1 1 -.1 1 .1 1 .1 1 -.5 1 .4 1 0 1 .1 1 -.1 1 0 1 0 1 -.5 1 -6.4 1 -4.3 1 -.4 1 .3 1 1.8 1 6.3 1 3.1 1 .1 1 0 1 -.1 1 .1 1 -.1 1 .1 1 0 1 .1 1 0 1 -.1 1 0 1 0 1 0 1 -.1 1 .1 1 0 1 0 1 -.1 1 .2 1 -.2 1 .1 1 0 1 -.1 1 .1 1 .1 1 -.1 1 .1 1 -.2 1 0 1 -6.3 1 -7.8 1 -.1 1 -.1 1 .1 1 7.9 1 6.4 1 0 1 0 1 0 1 -.1 1 .1 1 0 1 0 1 -.1 1 .1 1 .1 1 -.2 1 0 1 .1 1 0 1 .1 1 -.1 1 .1 1 -.1 1 -.1 1 .1 1 -.1 1 0 1 .1 1 -.1 1 .1 1 -.1 1 0 1 .1 1 -.6 1 -6.3 1 -4.3 1 -.1 1 0 1 1.9 1 6.3 1 3.1 1 .1 1 -.1 1 -.6 1 .6 1 0 1 -.1 1 -.3 1 .4 1 -.1 1 .1 1 -.1 1 .1 1 -.3 1 -.8 1 -.5 1 0 1 .5 1 .8 1 0 1 .3 1 -.1 1 .1 1 0 1 0 1 -.6 1 .6 1 .1 1 -.1 1 .1 1 -1 1 -2.8 1 -1.4 1 -.1 1 1.5 1 2.7 1 1.1 1 -.1 1 0 1 0 1 0 1 0 1 0 1 -.1 1 0 1 .1 1 0 1 .1 1 -.1 1 0 1 0 1 0 1 0 1 0 1 0 1 0 1 0 1 -.1 1 .1 1 .1 1 -.1 1 0 1 -.1 1 0 1 0 1 .1 1 -5.5 1 -6.7 1 0 1 0 1 .1 1 6.8 1 5.3 1 0 1 -.1 1 .2 1 0 1 -.1 1 -.5 1 .4 1 .1 1 -.1 1 -.1 1 -.8 1 -.3 1 -.1 1 .5 1 .7 1 .3 1 -.7 1 -.6 1 -.1 1 -.1 1 .8 1 .5 1 .1 1 .1 1 -.1 1 0 1 .1 1 -.1 1 -.5 1 -.2 1 -1.6 1 -.2 1 0 1 .3 1 1.4 1 .5 1 .2 1 .1 1 .1 1 -.1 1 0 1 0 1 0 1 .1 1 -.2 1 .1 1 .1 1 -.1 1 0 1 .1 1 -.5 1 .4 1 0 1 0 1 0 1 0 1 0 1 -.1 1 .1 1 0 1 0 1 0 1 0 1 -.6 1 .7 1 -1.5 1 -1.2 1 0 1 .1 1 .8 1 1.4 1 .2 1 .1 1 0 1 0 1 -.1 1 0 1 0 1 0 1 .1 1 .1 1 -.2 1 .2 1 -.1 1 .1 1 -.1 1 .1 1 0 1 -.1 1 0 1 -.1 1 .1 1 .1 1 -.1 1 0 1 -.2 1 -.7 1 -.3 1 -.1 1 .4 1 0 1 -1.7 1 .1 1 -.1 1 .5 1 1.4 1 .7 1 -.1 1 .2 1 -.6 1 .4 1 .1 1 0 1 .1 1 -.2 1 0 1 .2 1 -.1 1 0 1 0 1 0 1 0 1 0 1 0 1 -.1 1 .1 1 .1 1 -.2 1 .2 1 -.1 1 -.1 1 0 1 .1 1 -.1 1 -.2 1 .3 1 -.6 1 -6.4 1 -4.4 1 0 1 -.1 1 1.9 1 6.4 1 3.1 1 0 1 .1 1 -.2 1 .1 1 0 1 .2 1 -.1 1 0 1 0 1 0 1 0 1 -.3 1 .3 1 -.1 1 0 1 .1 1 .1 1 -.2 1 .1 1 -.1 1 .1 1 -.1 1 0 1 .1 1 0 1 0 1 .1 1 -.2 1 -1.1 1 -6.4 1 -3.8 1 -.1 1 .1 1 2.4 1 6.5 1 2.4 1 0 1 .1 1 0 1 0 1 -.1 1 .1 1 -.1 1 0 1 0 1 .1 1 0 1 -.1 1 0 1 .1 1 -.1 1 .2 1 -.2 1 0 1 0 1 .1 1 0 1 -.2 1 .2 1 -.1 1 .2 1 -.2 1 0 1 .1 1 -2 1 -6.3 1 -3.1 1 0 1 -.1 1 3.2 1 6.4 1 2 1 -.2 1 .2 1 -.6 1 .5 1 0 1 0 1 0 1 -.5 1 .5 1 0 1 0 1 -.1 1 .2 1 -.1 1 0 1 -.1 1 .2 1 -.2 1 0 1 .1 1 -.6 1 .6 1 .1 1 0 1 -.1 1 0 1 -.1 1 .1 1 -.1 1 -1.2 1 -1.4 1 0 1 0 1 1 1 1.5 1 .1 1 .1 1 0 1 .1 1 -.1 1 0 1 -.5 1 .5 1 0 1 -.1 1 .1 1 -.1 1 0 1 .1 1 -.4 1 .4 1 0 1 0 1 0 1 0 1 0 1 0 1 -.1 1 .1 1 0 1 0 1 0 1 0 1 -.1 1 -.5 1 -1.3 1 -.8 1 -.3 1 .4 1 1.5 1 1.1 1 0 1 0 1 -.5 1 .5 1 0 1 .1 1 -.2 1 .1 1 -.1 1 0 1 .1 1 0 1 -.1 1 .2 1 -.1 1 .1 1 0 1 -.1 1 0 1 -.1 1 .1 1 0 1 0 1 0 1 -.1 1 .1 1 0 1 0 1 -.4 1 -1.1 1 -1.6 1 0 1 0 1 .9 1 1.7 1 .5 1 .1 1 -.1 1 0 1 -.1 1 0 1 .2 1 -.1 1 0 1 0 1 0 1 0 1 -.1 1 .1 1 0 1 0 1 0 1 .1 1 -.1 1 0 1 .1H859.5 V842.9 Z" fill="#6ED0E0" fill-opacity="0.1" stroke="#6ED0E0" stroke-width="1.2" stroke-linejoin="round" clip-path="url(#c4)"/>
<path d="M41.5 842.9V801.9H45.5l1 0 1 -.1 1 0 1 .1 1 0 1 -.1 1 .1 1 -.1 1 .1 1 -.1 1 0 1 0 1 -.2 1 .2 1 .1 1 -.1 1 0 1 0 1 .1 1 -.1 1 .1 1 -.1 1 0 1 .1 1 0 1 -.1 1 0 1 0 1 0 1 .1 1 -.1 1 .1 1 -.1 1 0 1 0 1 -.4 1 .4 1 0 1 0 1 .1 1 -.1 1 0 1 0 1 0 1 .1 1 0 1 -.1 1 0 1 .1 1 0 1 -.1 1 0 1 0 1 .1 1 0 1 0 1 -.4 1 .3 1 0 1 0 1 .1 1 -.1 1 .1 1 0 1 0 1 0 1 0 1 0 1 -.1 1 .1 1 -.1 1 0 1 0 1 .1 1 -.1 1 .1 1 0 1 0 1 -.1 1 0 1 0 1 0 1 0 1 0 1 .1 1 -.1 1 0 1 .1 1 -.1 1 0 1 0 1 .1 1 0 1 0 1 -3.8 1 -5.1 1 -.2 1 -.1 1 .1 1 -.1 1 0 1 .1 1 -.1 1 .1 1 -.1 1 2.3 1 5.1 1 1.7 1 .1 1 -.1 1 .1 1 0 1 0 1 -.1 1 .1 1 -.1 1 0 1 0 1 0 1 0 1 0 1 0 1 0 1 .1 1 0 1 -.1 1 0 1 0 1 .1 1 0 1 -.1 1 .1 1 0 1 0 1 -.1 1 0 1 .1 1 -.1 1 0 1 0 1 0 1 0 1 0 1 .1 1 -.6 1 .2 1 .3 1 .1 1 0 1 0 1 -.1 1 .1 1 0 1 0 1 0 1 0 1 0 1 0 1 -.1 1 0 1 .1 1 0 1 -.5 1 .5 1 0 1 0 1 0 1 0 1 -.1 1 .1 1 0 1 0 1 0 1 0 1 0 1 -.1 1 .1 1 -.1 1 .1 1 0 1 0 1 -.1 1 .1 1 -.1 1 0 1 .1 1 -.6 1 .6 1 0 1 0 1 -.1 1 0 1 0 1 .1 1 0 1 -.6 1 -38.8 1 39.3 1 .1 1 0 1 0 1 0 1 0 1 0 1 -.1 1 0 1 0 1 0 1 .1 1 -.1 1 .1 1 0 1 0 1 -.1 1 0 1 0 1 0 1 0 1 .1 1 -.1 1 .1 1 -.1 1 0 1 0 1 .1 1 -.1 1 .1 1 0 1 0 1 0 1 0 1 0 1 -.4 1 .4 1 -.5 1 .4 1 -.4 1 .4 1 .1 1 0 1 -.1 1 0 1 0 1 0 1 0 1 .1 1 -.1 1 .1 1 0 1 -.1 1 0 1 .1 1 0 1 -.1 1 0 1 0 1 .1 1 0 1 0 1 0 1 0 1 0 1 -.1 1 0 1 0 1 .1 1 -.1 1 0 1 0 1 .1 1 -.1 1 .1 1 -.1 1 .1 1 -.1 1 -.4 1 .4 1 .1 1 -.1 1 0 1 .1 1 -.1 1 0 1 .1 1 0 1 0 1 0 1 -.1 1 -.2 1 .3 1 -.1 1 0 1 0 1 .1 1 -.1 1 .1 1 0 1 -.1 1 .1 1 0 1 0 1 -.2 1 .2 1 -.1 1 0 1 .1 1 -.4 1 .4 1 0 1 -.1 1 0 1 0 1 .1 1 0 1 0 1 -.5 1 .4 1 .1 1 -.1 1 -.2 1 .2 1 0 1 0 1 0 1 .1 1 0 1 -.1 1 0 1 0 1 .1 1 -.1 1 0 1 0 1 .1 1 0 1 -.1 1 0 1 .1 1 0 1 -.1 1 .1 1 0 1 -.1 1 .1 1 -.1 1 -.2 1 .2 1 0 1 0 1 .1 1 -.1 1 .1 1 0 1 -.1 1 0 1 -.1 1 .2 1 -.1 1 0 1 0 1 0 1 0 1 0 1 0 1 0 1 .1 1 -.1 1 -.4 1 .4 1 .1 1 0 1 -.1 1 -.4 1 .5 1 0 1 0 1 -.1 1 0 1 0 1 0 1 .1 1 -.1 1 0 1 .1 1 -.1 1 .1 1 -.1 1 .1 1 -.6 1 .5 1 -.4 1 .5 1 0 1 -.1 1 0 1 0 1 .1 1 0 1 -.1 1 -.3 1 .4 1 -.5 1 .4 1 0 1 .1 1 -.1 1 0 1 .1 1 -.1 1 .1 1 -.1 1 .1 1 -.1 1 .1 1 -.1 1 .1 1 -.1 1 .1 1 0 1 -.9 1 -.1 1 .9 1 .1 1 0 1 -.1 1 0 1 0 1 .1 1 -.1 1 .1 1 -.1 1 .1 1 0 1 -.1 1 0 1 .1 1 -.3 1 .2 1 .1 1 0 1 -.1 1 0 1 0 1 .1 1 -.1 1 0 1 0 1 0 1 .1 1 -.2 1 .2 1 -.1 1 0 1 -.4 1 .5 1 0 1 -.1 1 .1 1 0 1 0 1 -.1 1 0 1 0 1 0 1 -.4 1 .5 1 -.1 1 .1 1 -.1 1 0 1 .1 1 0 1 -.1 1 0 1 .1 1 -.1 1 0 1 .1 1 -.1 1 0 1 .1 1 0 1 0 1 -.1 1 .1 1 -.6 1 .5 1 -.5 1 .6 1 0 1 0 1 0 1 -.1 1 .1 1 0 1 0 1 -.1 1 0 1 0 1 .1 1 0 1 0 1 -.1 1 0 1 .1 1 -.1 1 .1 1 -.1 1 0 1 .1 1 0 1 0 1 -.1 1 .1 1 0 1 0 1 0 1 -.1 1 .1 1 -.1 1 0 1 .1 1 0 1 0 1 -.1 1 0 1 0 1 0 1 0 1 .1 1 0 1 0 1 0 1 -.1 1 0 1 0 1 .1 1 -.1 1 .1 1 -.1 1 0 1 0 1 0 1 0 1 0 1 -.3 1 .4 1 -.1 1 0 1 -2.8 1 -.1 1 3 1 0 1 -.1 1 0 1 0 1 -.2 1 .2 1 .1 1 -.1 1 .1 1 -.5 1 .4 1 0 1 0 1 .1 1 0 1 -.1 1 0 1 0 1 -.3 1 .3 1 .1 1 -.1 1 0 1 0 1 0 1 0 1 0 1 .1 1 0 1 -.1 1 .1 1 0 1 -.1 1 0 1 0 1 .1 1 -.1 1 0 1 .1 1 -.1 1 .1 1 0 1 0 1 0 1 -.1 1 0 1 0 1 0 1 0 1 0 1 .1 1 -.1 1 .1 1 -.1 1 0 1 0 1 .1 1 -.1 1 .1 1 -.1 1 .1 1 0 1 -.1 1 .1 1 0 1 0 1 -.1 1 .1 1 -.1 1 0 1 .1 1 0 1 0 1 -.1 1 0 1 0 1 .1 1 -.1 1 0 1 0 1 0 1 0 1 .1 1 0 1 -.1 1 0 1 0 1 .1 1 -.1 1 0 1 0 1 .1 1 -.1 1 -.3 1 0 1 0 1 .3 1 0 1 0 1 0 1 .1 1 -.1 1 0 1 0 1 .1 1 -.2 1 .1 1 0 1 .1 1 -.1 1 0 1 .1 1 -.1 1 .1 1 -.1 1 .1 1 -.1 1 0 1 0 1 .1 1 0 1 0 1 -.4 1 .3 1 .1 1 -.1 1 .1 1 0 1 -.1 1 .1 1 -.1 1 0 1 .1 1 -.1 1 0 1 .1 1 0 1 -.1 1 0 1 0 1 .1 1 0 1 -.1 1 0 1 .1 1 0 1 -.1 1 .1 1 0 1 0 1 -.1 1 .1 1 0 1 -.1 1 0 1 0 1 0 1 0 1 0 1 .1 1 -.1 1 .1 1 -.6 1 .5 1 -.3 1 .4 1 0 1 -.1 1 .1 1 0 1 0 1 -.1 1 .1 1 0 1 -.1 1 0 1 0 1 0 1 0 1 0 1 .1 1 -.1 1 0 1 .1 1 -.1 1 0 1 .1 1 -.1 1 .1 1 -.1 1 0 1 .1 1 0 1 -.1 1 0 1 .1 1 -.5 1 .4 1 0 1 .1 1 -.4 1 .3 1 .1 1 -.1 1 0 1 0 1 .1 1 -.1 1 0 1 0 1 0 1 -.6 1 .7 1 -.1 1 .1 1 0 1 0 1 -.1 1 0 1 .1 1 -.1 1 0 1 .1 1 -.1 1 -.2 1 .3 1 -.1 1 .1 1 -.1 1 .1 1 0 1 -.1 1 0 1 .1 1 0 1 0 1 -.1 1 .1 1 -.1 1 0 1 0 1 0 1 .1 1 -.1 1 .1 1 0 1 -.6 1 .6 1 -.1 1 .1 1 0 1 0 1 -.1 1 .1 1 0 1 0 1 -.6 1 .6H859.5 V842.9 Z" fill="#EF843C" fill-opacity="0.1" stroke="#EF843C" stroke-width="1.2" stroke-linejoin="round" clip-path="url(#c4)"/></svg>
</body></html>
